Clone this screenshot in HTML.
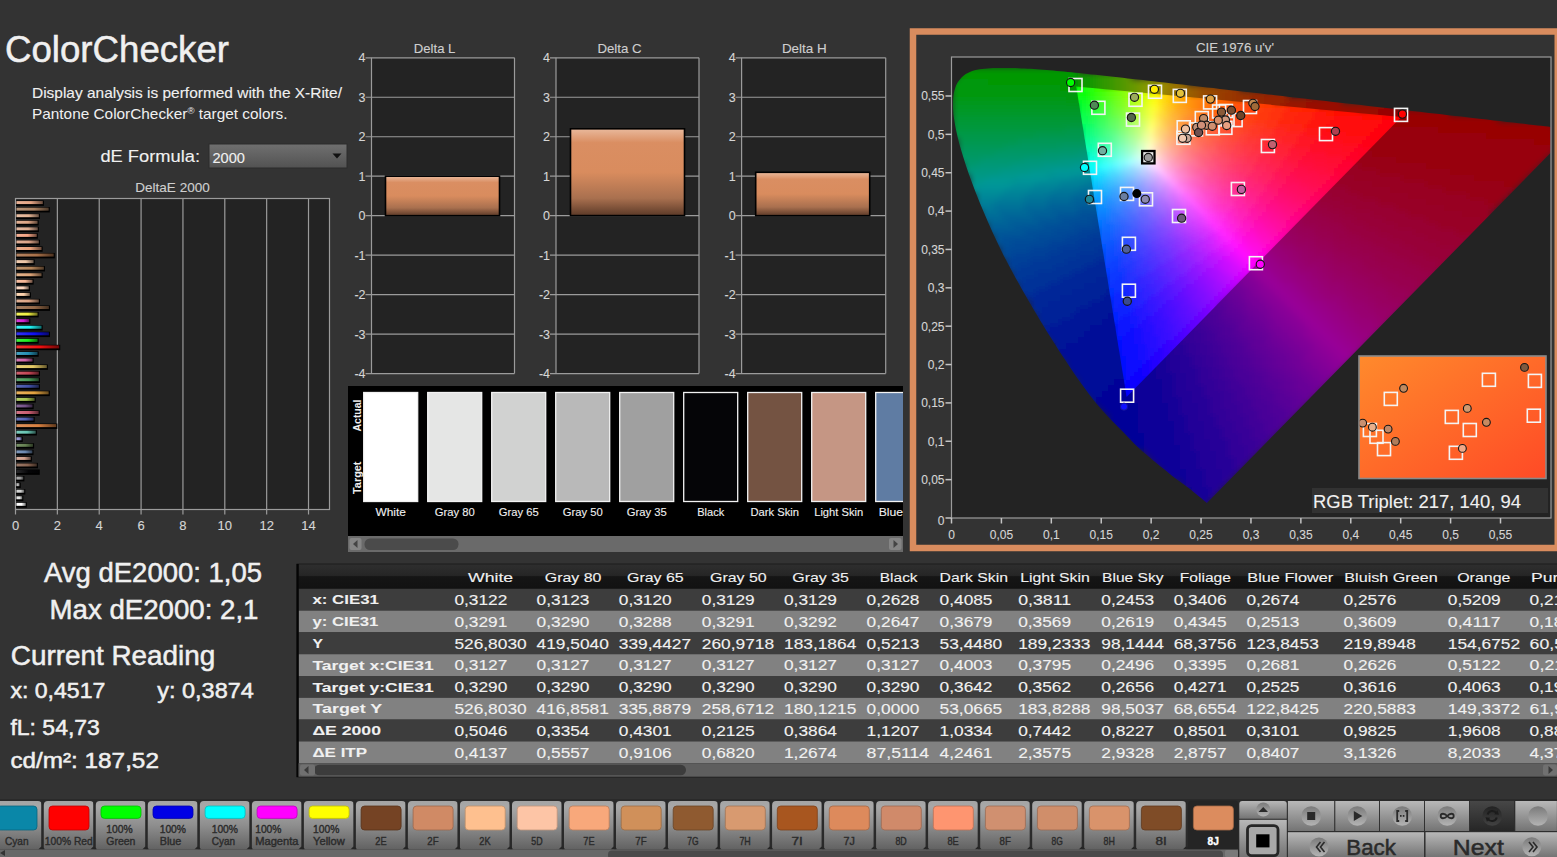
<!DOCTYPE html><html><head><meta charset="utf-8"><title>ColorChecker</title><style>html,body{margin:0;padding:0;background:#333333;overflow:hidden;width:1557px;height:857px}svg{display:block;font-family:"Liberation Sans",sans-serif}</style></head><body><svg width="1557" height="857" viewBox="0 0 1557 857" font-family='"Liberation Sans", sans-serif'><defs><linearGradient id="gDrop" x1="0" y1="0" x2="0" y2="1"><stop offset="0" stop-color="#707070"/><stop offset="1" stop-color="#525252"/></linearGradient><linearGradient id="gb0" x1="0" y1="0" x2="1" y2="0"><stop offset="0" stop-color="#ffffff"/><stop offset=".55" stop-color="#ffffff"/><stop offset="1" stop-color="#737373"/></linearGradient><linearGradient id="gb1" x1="0" y1="0" x2="1" y2="0"><stop offset="0" stop-color="#e7e8e7"/><stop offset=".55" stop-color="#e3e4e3"/><stop offset="1" stop-color="#666766"/></linearGradient><linearGradient id="gb2" x1="0" y1="0" x2="1" y2="0"><stop offset="0" stop-color="#d6d7d6"/><stop offset=".55" stop-color="#cfd0cf"/><stop offset="1" stop-color="#5d5e5d"/></linearGradient><linearGradient id="gb3" x1="0" y1="0" x2="1" y2="0"><stop offset="0" stop-color="#c1c1c1"/><stop offset=".55" stop-color="#b6b6b6"/><stop offset="1" stop-color="#525252"/></linearGradient><linearGradient id="gb4" x1="0" y1="0" x2="1" y2="0"><stop offset="0" stop-color="#adadad"/><stop offset=".55" stop-color="#9e9e9e"/><stop offset="1" stop-color="#474747"/></linearGradient><linearGradient id="gb5" x1="0" y1="0" x2="1" y2="0"><stop offset="0" stop-color="#2a2a2c"/><stop offset=".55" stop-color="#050507"/><stop offset="1" stop-color="#020203"/></linearGradient><linearGradient id="gb6" x1="0" y1="0" x2="1" y2="0"><stop offset="0" stop-color="#9c7b6a"/><stop offset=".55" stop-color="#8a6450"/><stop offset="1" stop-color="#3e2d24"/></linearGradient><linearGradient id="gb7" x1="0" y1="0" x2="1" y2="0"><stop offset="0" stop-color="#d7ae9d"/><stop offset=".55" stop-color="#d0a08c"/><stop offset="1" stop-color="#5e483f"/></linearGradient><linearGradient id="gb8" x1="0" y1="0" x2="1" y2="0"><stop offset="0" stop-color="#809abc"/><stop offset=".55" stop-color="#6a88b0"/><stop offset="1" stop-color="#303d4f"/></linearGradient><linearGradient id="gb9" x1="0" y1="0" x2="1" y2="0"><stop offset="0" stop-color="#7b936a"/><stop offset=".55" stop-color="#648050"/><stop offset="1" stop-color="#2d3a24"/></linearGradient><linearGradient id="gb10" x1="0" y1="0" x2="1" y2="0"><stop offset="0" stop-color="#a1a1d7"/><stop offset=".55" stop-color="#9090d0"/><stop offset="1" stop-color="#41415e"/></linearGradient><linearGradient id="gb11" x1="0" y1="0" x2="1" y2="0"><stop offset="0" stop-color="#7dcdbe"/><stop offset=".55" stop-color="#66c4b2"/><stop offset="1" stop-color="#2e5850"/></linearGradient><linearGradient id="gb12" x1="0" y1="0" x2="1" y2="0"><stop offset="0" stop-color="#de935d"/><stop offset=".55" stop-color="#d88040"/><stop offset="1" stop-color="#613a1d"/></linearGradient><linearGradient id="gb13" x1="0" y1="0" x2="1" y2="0"><stop offset="0" stop-color="#6a78bf"/><stop offset=".55" stop-color="#5060b4"/><stop offset="1" stop-color="#242b51"/></linearGradient><linearGradient id="gb14" x1="0" y1="0" x2="1" y2="0"><stop offset="0" stop-color="#d07485"/><stop offset=".55" stop-color="#c85c70"/><stop offset="1" stop-color="#5a2932"/></linearGradient><linearGradient id="gb15" x1="0" y1="0" x2="1" y2="0"><stop offset="0" stop-color="#896a9a"/><stop offset=".55" stop-color="#745088"/><stop offset="1" stop-color="#34243d"/></linearGradient><linearGradient id="gb16" x1="0" y1="0" x2="1" y2="0"><stop offset="0" stop-color="#b2cd6a"/><stop offset=".55" stop-color="#a4c450"/><stop offset="1" stop-color="#4a5824"/></linearGradient><linearGradient id="gb17" x1="0" y1="0" x2="1" y2="0"><stop offset="0" stop-color="#e8b25d"/><stop offset=".55" stop-color="#e4a440"/><stop offset="1" stop-color="#674a1d"/></linearGradient><linearGradient id="gb18" x1="0" y1="0" x2="1" y2="0"><stop offset="0" stop-color="#5d6ab5"/><stop offset=".55" stop-color="#4050a8"/><stop offset="1" stop-color="#1d244c"/></linearGradient><linearGradient id="gb19" x1="0" y1="0" x2="1" y2="0"><stop offset="0" stop-color="#63a971"/><stop offset=".55" stop-color="#489a58"/><stop offset="1" stop-color="#204528"/></linearGradient><linearGradient id="gb20" x1="0" y1="0" x2="1" y2="0"><stop offset="0" stop-color="#cd606e"/><stop offset=".55" stop-color="#c44454"/><stop offset="1" stop-color="#581f26"/></linearGradient><linearGradient id="gb21" x1="0" y1="0" x2="1" y2="0"><stop offset="0" stop-color="#e8d07b"/><stop offset=".55" stop-color="#e4c864"/><stop offset="1" stop-color="#675a2d"/></linearGradient><linearGradient id="gb22" x1="0" y1="0" x2="1" y2="0"><stop offset="0" stop-color="#d77bb5"/><stop offset=".55" stop-color="#d064a8"/><stop offset="1" stop-color="#5e2d4c"/></linearGradient><linearGradient id="gb23" x1="0" y1="0" x2="1" y2="0"><stop offset="0" stop-color="#45a1bf"/><stop offset=".55" stop-color="#2490b4"/><stop offset="1" stop-color="#104151"/></linearGradient><linearGradient id="gb24" x1="0" y1="0" x2="1" y2="0"><stop offset="0" stop-color="#f23434"/><stop offset=".55" stop-color="#f01010"/><stop offset="1" stop-color="#6c0707"/></linearGradient><linearGradient id="gb25" x1="0" y1="0" x2="1" y2="0"><stop offset="0" stop-color="#41f241"/><stop offset=".55" stop-color="#20f020"/><stop offset="1" stop-color="#0e6c0e"/></linearGradient><linearGradient id="gb26" x1="0" y1="0" x2="1" y2="0"><stop offset="0" stop-color="#3434f2"/><stop offset=".55" stop-color="#1010f0"/><stop offset="1" stop-color="#07076c"/></linearGradient><linearGradient id="gb27" x1="0" y1="0" x2="1" y2="0"><stop offset="0" stop-color="#41f2f2"/><stop offset=".55" stop-color="#20f0f0"/><stop offset="1" stop-color="#0e6c6c"/></linearGradient><linearGradient id="gb28" x1="0" y1="0" x2="1" y2="0"><stop offset="0" stop-color="#d741d7"/><stop offset=".55" stop-color="#d020d0"/><stop offset="1" stop-color="#5e0e5e"/></linearGradient><linearGradient id="gb29" x1="0" y1="0" x2="1" y2="0"><stop offset="0" stop-color="#f2f25d"/><stop offset=".55" stop-color="#f0f040"/><stop offset="1" stop-color="#6c6c1d"/></linearGradient><linearGradient id="gb30" x1="0" y1="0" x2="1" y2="0"><stop offset="0" stop-color="#a68063"/><stop offset=".55" stop-color="#966a48"/><stop offset="1" stop-color="#443020"/></linearGradient><linearGradient id="gb31" x1="0" y1="0" x2="1" y2="0"><stop offset="0" stop-color="#e1b296"/><stop offset=".55" stop-color="#dca484"/><stop offset="1" stop-color="#634a3b"/></linearGradient><linearGradient id="gb32" x1="0" y1="0" x2="1" y2="0"><stop offset="0" stop-color="#fcd7b7"/><stop offset=".55" stop-color="#fcd0aa"/><stop offset="1" stop-color="#715e4c"/></linearGradient><linearGradient id="gb33" x1="0" y1="0" x2="1" y2="0"><stop offset="0" stop-color="#fcdac6"/><stop offset=".55" stop-color="#fcd4bc"/><stop offset="1" stop-color="#715f55"/></linearGradient><linearGradient id="gb34" x1="0" y1="0" x2="1" y2="0"><stop offset="0" stop-color="#f6bfa4"/><stop offset=".55" stop-color="#f4b494"/><stop offset="1" stop-color="#6e5143"/></linearGradient><linearGradient id="gb35" x1="0" y1="0" x2="1" y2="0"><stop offset="0" stop-color="#e1b28c"/><stop offset=".55" stop-color="#dca478"/><stop offset="1" stop-color="#634a36"/></linearGradient><linearGradient id="gb36" x1="0" y1="0" x2="1" y2="0"><stop offset="0" stop-color="#bf9671"/><stop offset=".55" stop-color="#b48458"/><stop offset="1" stop-color="#513b28"/></linearGradient><linearGradient id="gb37" x1="0" y1="0" x2="1" y2="0"><stop offset="0" stop-color="#efcdb2"/><stop offset=".55" stop-color="#ecc4a4"/><stop offset="1" stop-color="#6a584a"/></linearGradient><linearGradient id="gb38" x1="0" y1="0" x2="1" y2="0"><stop offset="0" stop-color="#b58563"/><stop offset=".55" stop-color="#a87048"/><stop offset="1" stop-color="#4c3220"/></linearGradient><linearGradient id="gb39" x1="0" y1="0" x2="1" y2="0"><stop offset="0" stop-color="#ebae8e"/><stop offset=".55" stop-color="#e8a07a"/><stop offset="1" stop-color="#684837"/></linearGradient><linearGradient id="gb40" x1="0" y1="0" x2="1" y2="0"><stop offset="0" stop-color="#e1b29a"/><stop offset=".55" stop-color="#dca488"/><stop offset="1" stop-color="#634a3d"/></linearGradient><linearGradient id="gb41" x1="0" y1="0" x2="1" y2="0"><stop offset="0" stop-color="#f6b296"/><stop offset=".55" stop-color="#f4a484"/><stop offset="1" stop-color="#6e4a3b"/></linearGradient><linearGradient id="gb42" x1="0" y1="0" x2="1" y2="0"><stop offset="0" stop-color="#e1b8a1"/><stop offset=".55" stop-color="#dcac90"/><stop offset="1" stop-color="#634d41"/></linearGradient><linearGradient id="gb43" x1="0" y1="0" x2="1" y2="0"><stop offset="0" stop-color="#e1b296"/><stop offset=".55" stop-color="#dca484"/><stop offset="1" stop-color="#634a3b"/></linearGradient><linearGradient id="gb44" x1="0" y1="0" x2="1" y2="0"><stop offset="0" stop-color="#e8bfa4"/><stop offset=".55" stop-color="#e4b494"/><stop offset="1" stop-color="#675143"/></linearGradient><linearGradient id="gb45" x1="0" y1="0" x2="1" y2="0"><stop offset="0" stop-color="#b59378"/><stop offset=".55" stop-color="#a88060"/><stop offset="1" stop-color="#4c3a2b"/></linearGradient><linearGradient id="gb46" x1="0" y1="0" x2="1" y2="0"><stop offset="0" stop-color="#e8b296"/><stop offset=".55" stop-color="#e4a484"/><stop offset="1" stop-color="#674a3b"/></linearGradient><linearGradient id="gDelta" x1="0" y1="0" x2="0" y2="1"><stop offset="0" stop-color="#e9b99c"/><stop offset=".16" stop-color="#da8e62"/><stop offset=".5" stop-color="#d98c5e"/><stop offset=".8" stop-color="#a9704f"/><stop offset="1" stop-color="#5c3a28"/></linearGradient><clipPath id="cpSw"><rect x="348" y="386" width="555" height="150"/></clipPath><linearGradient id="gInset" x1="0" y1="0" x2="1" y2="1"><stop offset="0" stop-color="#ff8a2c"/><stop offset="1" stop-color="#ff4a26"/></linearGradient><clipPath id="cpIn"><rect x="1359.8" y="356.8" width="185.4" height="121"/></clipPath><linearGradient id="gHead" x1="0" y1="0" x2="0" y2="1"><stop offset="0" stop-color="#2e2e2e"/><stop offset=".45" stop-color="#262626"/><stop offset=".5" stop-color="#151515"/><stop offset="1" stop-color="#121212"/></linearGradient><linearGradient id="gTile" x1="0" y1="0" x2="0" y2="1"><stop offset="0" stop-color="#a4a4a4"/><stop offset=".12" stop-color="#a8a8a8"/><stop offset=".5" stop-color="#8e8e8e"/><stop offset="1" stop-color="#626262"/></linearGradient><linearGradient id="gBtn" x1="0" y1="0" x2="0" y2="1"><stop offset="0" stop-color="#b8b8b8"/><stop offset="1" stop-color="#747474"/></linearGradient><linearGradient id="gBtnD" x1="0" y1="0" x2="0" y2="1"><stop offset="0" stop-color="#474747"/><stop offset="1" stop-color="#262626"/></linearGradient><linearGradient id="gKnobD" x1="0" y1="0" x2="0" y2="1"><stop offset="0" stop-color="#222"/><stop offset="1" stop-color="#424242"/></linearGradient><linearGradient id="gKnob" x1="0" y1="0" x2="0" y2="1"><stop offset="0" stop-color="#7a7a7a"/><stop offset="1" stop-color="#b4b4b4"/></linearGradient></defs><rect width="1557" height="857" fill="#333333"/><text x="5.0" y="62.0" font-size="37.5" fill="#f0f0f0" textLength="224.0" lengthAdjust="spacingAndGlyphs" stroke="#f0f0f0" stroke-width="0.50">ColorChecker</text><text x="32.0" y="98.0" font-size="14.5" fill="#f0f0f0" textLength="310.0" lengthAdjust="spacingAndGlyphs" stroke="#f0f0f0" stroke-width="0.12">Display analysis is performed with the X-Rite/</text><text x="32" y="118.7" font-size="14.5" fill="#f0f0f0" textLength="255.5" lengthAdjust="spacingAndGlyphs">Pantone ColorChecker<tspan font-size="9" dy="-5">®</tspan><tspan dy="5"> target colors.</tspan></text><text x="100.4" y="162.3" font-size="17.0" fill="#f0f0f0" textLength="99.6" lengthAdjust="spacingAndGlyphs" stroke="#f0f0f0" stroke-width="0.12">dE Formula:</text><rect x="209" y="144" width="138" height="24" fill="url(#gDrop)" stroke="#2c2c2c" stroke-width="1"/><text x="212.5" y="163.4" font-size="14.5" fill="#f0f0f0" textLength="32.5" lengthAdjust="spacingAndGlyphs" stroke="#f0f0f0" stroke-width="0.12">2000</text><path d="M332.5 153.5h9l-4.5 5z" fill="#111"/><text x="172.5" y="192.0" font-size="13.0" fill="#cfcfcf" text-anchor="middle" textLength="74.5" lengthAdjust="spacingAndGlyphs" stroke="#cfcfcf" stroke-width="0.12">DeltaE 2000</text><rect x="15.50" y="198.50" width="314.00" height="311.00" fill="#232323" /><line x1="57.36" y1="198.50" x2="57.36" y2="509.50" stroke="#9b9b9b" stroke-width="1.20" /><line x1="99.22" y1="198.50" x2="99.22" y2="509.50" stroke="#9b9b9b" stroke-width="1.20" /><line x1="141.08" y1="198.50" x2="141.08" y2="509.50" stroke="#9b9b9b" stroke-width="1.20" /><line x1="182.94" y1="198.50" x2="182.94" y2="509.50" stroke="#9b9b9b" stroke-width="1.20" /><line x1="224.80" y1="198.50" x2="224.80" y2="509.50" stroke="#9b9b9b" stroke-width="1.20" /><line x1="266.66" y1="198.50" x2="266.66" y2="509.50" stroke="#9b9b9b" stroke-width="1.20" /><line x1="308.52" y1="198.50" x2="308.52" y2="509.50" stroke="#9b9b9b" stroke-width="1.20" /><rect x="15.5" y="198.5" width="314.0" height="311.0" fill="none" stroke="#9b9b9b" stroke-width="1.2"/><line x1="15.50" y1="509.50" x2="15.50" y2="514.50" stroke="#9b9b9b" stroke-width="1.20" /><text x="15.5" y="530.0" font-size="13.0" fill="#d6d6d6" text-anchor="middle" stroke="#d6d6d6" stroke-width="0.12">0</text><line x1="57.36" y1="509.50" x2="57.36" y2="514.50" stroke="#9b9b9b" stroke-width="1.20" /><text x="57.4" y="530.0" font-size="13.0" fill="#d6d6d6" text-anchor="middle" stroke="#d6d6d6" stroke-width="0.12">2</text><line x1="99.22" y1="509.50" x2="99.22" y2="514.50" stroke="#9b9b9b" stroke-width="1.20" /><text x="99.2" y="530.0" font-size="13.0" fill="#d6d6d6" text-anchor="middle" stroke="#d6d6d6" stroke-width="0.12">4</text><line x1="141.08" y1="509.50" x2="141.08" y2="514.50" stroke="#9b9b9b" stroke-width="1.20" /><text x="141.1" y="530.0" font-size="13.0" fill="#d6d6d6" text-anchor="middle" stroke="#d6d6d6" stroke-width="0.12">6</text><line x1="182.94" y1="509.50" x2="182.94" y2="514.50" stroke="#9b9b9b" stroke-width="1.20" /><text x="182.9" y="530.0" font-size="13.0" fill="#d6d6d6" text-anchor="middle" stroke="#d6d6d6" stroke-width="0.12">8</text><line x1="224.80" y1="509.50" x2="224.80" y2="514.50" stroke="#9b9b9b" stroke-width="1.20" /><text x="224.8" y="530.0" font-size="13.0" fill="#d6d6d6" text-anchor="middle" stroke="#d6d6d6" stroke-width="0.12">10</text><line x1="266.66" y1="509.50" x2="266.66" y2="514.50" stroke="#9b9b9b" stroke-width="1.20" /><text x="266.7" y="530.0" font-size="13.0" fill="#d6d6d6" text-anchor="middle" stroke="#d6d6d6" stroke-width="0.12">12</text><line x1="308.52" y1="509.50" x2="308.52" y2="514.50" stroke="#9b9b9b" stroke-width="1.20" /><text x="308.5" y="530.0" font-size="13.0" fill="#d6d6d6" text-anchor="middle" stroke="#d6d6d6" stroke-width="0.12">14</text><rect x="16.10" y="502.24" width="10.76" height="5.40" fill="#000000" /><rect x="16.40" y="502.84" width="9.36" height="3.00" fill="url(#gb0)" /><rect x="16.10" y="495.68" width="7.22" height="5.40" fill="#000000" /><rect x="16.40" y="496.28" width="5.82" height="3.00" fill="url(#gb1)" /><rect x="16.10" y="489.12" width="9.20" height="5.40" fill="#000000" /><rect x="16.40" y="489.72" width="7.80" height="3.00" fill="url(#gb2)" /><rect x="16.10" y="482.56" width="4.65" height="5.40" fill="#000000" /><rect x="16.40" y="483.16" width="3.25" height="3.00" fill="url(#gb3)" /><rect x="16.10" y="476.00" width="8.29" height="5.40" fill="#000000" /><rect x="16.40" y="476.60" width="6.89" height="3.00" fill="url(#gb4)" /><rect x="16.10" y="469.44" width="23.66" height="5.40" fill="#000000" /><rect x="16.40" y="470.04" width="22.26" height="3.00" fill="url(#gb5)" /><rect x="16.10" y="462.88" width="21.83" height="5.40" fill="#000000" /><rect x="16.40" y="463.48" width="20.43" height="3.00" fill="url(#gb6)" /><rect x="16.10" y="456.32" width="15.78" height="5.40" fill="#000000" /><rect x="16.40" y="456.92" width="14.38" height="3.00" fill="url(#gb7)" /><rect x="16.10" y="449.76" width="17.42" height="5.40" fill="#000000" /><rect x="16.40" y="450.36" width="16.02" height="3.00" fill="url(#gb8)" /><rect x="16.10" y="443.20" width="17.99" height="5.40" fill="#000000" /><rect x="16.40" y="443.80" width="16.59" height="3.00" fill="url(#gb9)" /><rect x="16.10" y="436.64" width="6.69" height="5.40" fill="#000000" /><rect x="16.40" y="437.24" width="5.29" height="3.00" fill="url(#gb10)" /><rect x="16.10" y="430.08" width="20.76" height="5.40" fill="#000000" /><rect x="16.40" y="430.68" width="19.36" height="3.00" fill="url(#gb11)" /><rect x="16.10" y="423.52" width="41.24" height="5.40" fill="#000000" /><rect x="16.40" y="424.12" width="39.84" height="3.00" fill="url(#gb12)" /><rect x="16.10" y="416.96" width="18.62" height="5.40" fill="#000000" /><rect x="16.40" y="417.56" width="17.22" height="3.00" fill="url(#gb13)" /><rect x="16.10" y="410.40" width="23.64" height="5.40" fill="#000000" /><rect x="16.40" y="411.00" width="22.24" height="3.00" fill="url(#gb14)" /><rect x="16.10" y="403.84" width="17.57" height="5.40" fill="#000000" /><rect x="16.40" y="404.44" width="16.17" height="3.00" fill="url(#gb15)" /><rect x="16.10" y="397.28" width="19.66" height="5.40" fill="#000000" /><rect x="16.40" y="397.88" width="18.26" height="3.00" fill="url(#gb16)" /><rect x="16.10" y="390.72" width="33.69" height="5.40" fill="#000000" /><rect x="16.40" y="391.32" width="32.29" height="3.00" fill="url(#gb17)" /><rect x="16.10" y="384.16" width="23.85" height="5.40" fill="#000000" /><rect x="16.40" y="384.76" width="22.45" height="3.00" fill="url(#gb18)" /><rect x="16.10" y="377.60" width="23.85" height="5.40" fill="#000000" /><rect x="16.40" y="378.20" width="22.45" height="3.00" fill="url(#gb19)" /><rect x="16.10" y="371.04" width="23.85" height="5.40" fill="#000000" /><rect x="16.40" y="371.64" width="22.45" height="3.00" fill="url(#gb20)" /><rect x="16.10" y="364.48" width="31.80" height="5.40" fill="#000000" /><rect x="16.40" y="365.08" width="30.40" height="3.00" fill="url(#gb21)" /><rect x="16.10" y="357.92" width="17.57" height="5.40" fill="#000000" /><rect x="16.40" y="358.52" width="16.17" height="3.00" fill="url(#gb22)" /><rect x="16.10" y="351.36" width="22.60" height="5.40" fill="#000000" /><rect x="16.40" y="351.96" width="21.20" height="3.00" fill="url(#gb23)" /><rect x="16.10" y="344.80" width="44.15" height="5.40" fill="#000000" /><rect x="16.40" y="345.40" width="42.75" height="3.00" fill="url(#gb24)" /><rect x="16.10" y="338.24" width="22.60" height="5.40" fill="#000000" /><rect x="16.40" y="338.84" width="21.20" height="3.00" fill="url(#gb25)" /><rect x="16.10" y="331.68" width="33.90" height="5.40" fill="#000000" /><rect x="16.40" y="332.28" width="32.50" height="3.00" fill="url(#gb26)" /><rect x="16.10" y="325.12" width="26.57" height="5.40" fill="#000000" /><rect x="16.40" y="325.72" width="25.17" height="3.00" fill="url(#gb27)" /><rect x="16.10" y="318.56" width="14.22" height="5.40" fill="#000000" /><rect x="16.40" y="319.16" width="12.82" height="3.00" fill="url(#gb28)" /><rect x="16.10" y="312.00" width="22.60" height="5.40" fill="#000000" /><rect x="16.40" y="312.60" width="21.20" height="3.00" fill="url(#gb29)" /><rect x="16.10" y="305.44" width="33.90" height="5.40" fill="#000000" /><rect x="16.40" y="306.04" width="32.50" height="3.00" fill="url(#gb30)" /><rect x="16.10" y="298.88" width="23.85" height="5.40" fill="#000000" /><rect x="16.40" y="299.48" width="22.45" height="3.00" fill="url(#gb31)" /><rect x="16.10" y="292.32" width="14.85" height="5.40" fill="#000000" /><rect x="16.40" y="292.92" width="13.45" height="3.00" fill="url(#gb32)" /><rect x="16.10" y="285.76" width="13.80" height="5.40" fill="#000000" /><rect x="16.40" y="286.36" width="12.40" height="3.00" fill="url(#gb33)" /><rect x="16.10" y="279.20" width="17.57" height="5.40" fill="#000000" /><rect x="16.40" y="279.80" width="16.17" height="3.00" fill="url(#gb34)" /><rect x="16.10" y="272.64" width="26.57" height="5.40" fill="#000000" /><rect x="16.40" y="273.24" width="25.17" height="3.00" fill="url(#gb35)" /><rect x="16.10" y="266.08" width="28.87" height="5.40" fill="#000000" /><rect x="16.40" y="266.68" width="27.47" height="3.00" fill="url(#gb36)" /><rect x="16.10" y="259.52" width="18.62" height="5.40" fill="#000000" /><rect x="16.40" y="260.12" width="17.22" height="3.00" fill="url(#gb37)" /><rect x="16.10" y="252.96" width="38.71" height="5.40" fill="#000000" /><rect x="16.40" y="253.56" width="37.31" height="3.00" fill="url(#gb38)" /><rect x="16.10" y="246.40" width="26.57" height="5.40" fill="#000000" /><rect x="16.40" y="247.00" width="25.17" height="3.00" fill="url(#gb39)" /><rect x="16.10" y="239.84" width="23.85" height="5.40" fill="#000000" /><rect x="16.40" y="240.44" width="22.45" height="3.00" fill="url(#gb40)" /><rect x="16.10" y="233.28" width="21.76" height="5.40" fill="#000000" /><rect x="16.40" y="233.88" width="20.36" height="3.00" fill="url(#gb41)" /><rect x="16.10" y="226.72" width="22.80" height="5.40" fill="#000000" /><rect x="16.40" y="227.32" width="21.40" height="3.00" fill="url(#gb42)" /><rect x="16.10" y="220.16" width="22.60" height="5.40" fill="#000000" /><rect x="16.40" y="220.76" width="21.20" height="3.00" fill="url(#gb43)" /><rect x="16.10" y="213.60" width="23.85" height="5.40" fill="#000000" /><rect x="16.40" y="214.20" width="22.45" height="3.00" fill="url(#gb44)" /><rect x="16.10" y="207.04" width="33.69" height="5.40" fill="#000000" /><rect x="16.40" y="207.64" width="32.29" height="3.00" fill="url(#gb45)" /><rect x="16.10" y="200.48" width="27.83" height="5.40" fill="#000000" /><rect x="16.40" y="201.08" width="26.43" height="3.00" fill="url(#gb46)" /><text x="434.6" y="53.0" font-size="13.0" fill="#cfcfcf" text-anchor="middle" textLength="41.6" lengthAdjust="spacingAndGlyphs" stroke="#cfcfcf" stroke-width="0.12">Delta L</text><rect x="371.50" y="57.80" width="143.00" height="315.76" fill="#232323" /><line x1="365.50" y1="57.80" x2="514.50" y2="57.80" stroke="#9b9b9b" stroke-width="1.20" /><text x="365.5" y="62.3" font-size="12.5" fill="#d6d6d6" text-anchor="end" stroke="#d6d6d6" stroke-width="0.10">4</text><line x1="365.50" y1="97.27" x2="514.50" y2="97.27" stroke="#9b9b9b" stroke-width="1.20" /><text x="365.5" y="101.8" font-size="12.5" fill="#d6d6d6" text-anchor="end" stroke="#d6d6d6" stroke-width="0.10">3</text><line x1="365.50" y1="136.74" x2="514.50" y2="136.74" stroke="#9b9b9b" stroke-width="1.20" /><text x="365.5" y="141.2" font-size="12.5" fill="#d6d6d6" text-anchor="end" stroke="#d6d6d6" stroke-width="0.10">2</text><line x1="365.50" y1="176.21" x2="514.50" y2="176.21" stroke="#9b9b9b" stroke-width="1.20" /><text x="365.5" y="180.7" font-size="12.5" fill="#d6d6d6" text-anchor="end" stroke="#d6d6d6" stroke-width="0.10">1</text><line x1="365.50" y1="215.68" x2="514.50" y2="215.68" stroke="#9b9b9b" stroke-width="1.20" /><text x="365.5" y="220.2" font-size="12.5" fill="#d6d6d6" text-anchor="end" stroke="#d6d6d6" stroke-width="0.10">0</text><line x1="365.50" y1="255.15" x2="514.50" y2="255.15" stroke="#9b9b9b" stroke-width="1.20" /><text x="365.5" y="259.6" font-size="12.5" fill="#d6d6d6" text-anchor="end" stroke="#d6d6d6" stroke-width="0.10">-1</text><line x1="365.50" y1="294.62" x2="514.50" y2="294.62" stroke="#9b9b9b" stroke-width="1.20" /><text x="365.5" y="299.1" font-size="12.5" fill="#d6d6d6" text-anchor="end" stroke="#d6d6d6" stroke-width="0.10">-2</text><line x1="365.50" y1="334.09" x2="514.50" y2="334.09" stroke="#9b9b9b" stroke-width="1.20" /><text x="365.5" y="338.6" font-size="12.5" fill="#d6d6d6" text-anchor="end" stroke="#d6d6d6" stroke-width="0.10">-3</text><line x1="365.50" y1="373.56" x2="514.50" y2="373.56" stroke="#9b9b9b" stroke-width="1.20" /><text x="365.5" y="378.1" font-size="12.5" fill="#d6d6d6" text-anchor="end" stroke="#d6d6d6" stroke-width="0.10">-4</text><line x1="371.50" y1="57.80" x2="371.50" y2="373.56" stroke="#9b9b9b" stroke-width="1.20" /><line x1="514.50" y1="57.80" x2="514.50" y2="373.56" stroke="#9b9b9b" stroke-width="1.20" /><rect x="385.5" y="176.2" width="114.0" height="39.5" fill="url(#gDelta)" stroke="#000" stroke-width="1.6"/><text x="619.5" y="53.0" font-size="13.0" fill="#cfcfcf" text-anchor="middle" textLength="44.2" lengthAdjust="spacingAndGlyphs" stroke="#cfcfcf" stroke-width="0.12">Delta C</text><rect x="556.00" y="57.80" width="143.00" height="315.76" fill="#232323" /><line x1="550.00" y1="57.80" x2="699.00" y2="57.80" stroke="#9b9b9b" stroke-width="1.20" /><text x="550.0" y="62.3" font-size="12.5" fill="#d6d6d6" text-anchor="end" stroke="#d6d6d6" stroke-width="0.10">4</text><line x1="550.00" y1="97.27" x2="699.00" y2="97.27" stroke="#9b9b9b" stroke-width="1.20" /><text x="550.0" y="101.8" font-size="12.5" fill="#d6d6d6" text-anchor="end" stroke="#d6d6d6" stroke-width="0.10">3</text><line x1="550.00" y1="136.74" x2="699.00" y2="136.74" stroke="#9b9b9b" stroke-width="1.20" /><text x="550.0" y="141.2" font-size="12.5" fill="#d6d6d6" text-anchor="end" stroke="#d6d6d6" stroke-width="0.10">2</text><line x1="550.00" y1="176.21" x2="699.00" y2="176.21" stroke="#9b9b9b" stroke-width="1.20" /><text x="550.0" y="180.7" font-size="12.5" fill="#d6d6d6" text-anchor="end" stroke="#d6d6d6" stroke-width="0.10">1</text><line x1="550.00" y1="215.68" x2="699.00" y2="215.68" stroke="#9b9b9b" stroke-width="1.20" /><text x="550.0" y="220.2" font-size="12.5" fill="#d6d6d6" text-anchor="end" stroke="#d6d6d6" stroke-width="0.10">0</text><line x1="550.00" y1="255.15" x2="699.00" y2="255.15" stroke="#9b9b9b" stroke-width="1.20" /><text x="550.0" y="259.6" font-size="12.5" fill="#d6d6d6" text-anchor="end" stroke="#d6d6d6" stroke-width="0.10">-1</text><line x1="550.00" y1="294.62" x2="699.00" y2="294.62" stroke="#9b9b9b" stroke-width="1.20" /><text x="550.0" y="299.1" font-size="12.5" fill="#d6d6d6" text-anchor="end" stroke="#d6d6d6" stroke-width="0.10">-2</text><line x1="550.00" y1="334.09" x2="699.00" y2="334.09" stroke="#9b9b9b" stroke-width="1.20" /><text x="550.0" y="338.6" font-size="12.5" fill="#d6d6d6" text-anchor="end" stroke="#d6d6d6" stroke-width="0.10">-3</text><line x1="550.00" y1="373.56" x2="699.00" y2="373.56" stroke="#9b9b9b" stroke-width="1.20" /><text x="550.0" y="378.1" font-size="12.5" fill="#d6d6d6" text-anchor="end" stroke="#d6d6d6" stroke-width="0.10">-4</text><line x1="556.00" y1="57.80" x2="556.00" y2="373.56" stroke="#9b9b9b" stroke-width="1.20" /><line x1="699.00" y1="57.80" x2="699.00" y2="373.56" stroke="#9b9b9b" stroke-width="1.20" /><rect x="570.5" y="128.8" width="114.0" height="86.8" fill="url(#gDelta)" stroke="#000" stroke-width="1.6"/><text x="804.3" y="53.0" font-size="13.0" fill="#cfcfcf" text-anchor="middle" textLength="44.8" lengthAdjust="spacingAndGlyphs" stroke="#cfcfcf" stroke-width="0.12">Delta H</text><rect x="741.60" y="57.80" width="144.10" height="315.76" fill="#232323" /><line x1="735.60" y1="57.80" x2="885.70" y2="57.80" stroke="#9b9b9b" stroke-width="1.20" /><text x="735.6" y="62.3" font-size="12.5" fill="#d6d6d6" text-anchor="end" stroke="#d6d6d6" stroke-width="0.10">4</text><line x1="735.60" y1="97.27" x2="885.70" y2="97.27" stroke="#9b9b9b" stroke-width="1.20" /><text x="735.6" y="101.8" font-size="12.5" fill="#d6d6d6" text-anchor="end" stroke="#d6d6d6" stroke-width="0.10">3</text><line x1="735.60" y1="136.74" x2="885.70" y2="136.74" stroke="#9b9b9b" stroke-width="1.20" /><text x="735.6" y="141.2" font-size="12.5" fill="#d6d6d6" text-anchor="end" stroke="#d6d6d6" stroke-width="0.10">2</text><line x1="735.60" y1="176.21" x2="885.70" y2="176.21" stroke="#9b9b9b" stroke-width="1.20" /><text x="735.6" y="180.7" font-size="12.5" fill="#d6d6d6" text-anchor="end" stroke="#d6d6d6" stroke-width="0.10">1</text><line x1="735.60" y1="215.68" x2="885.70" y2="215.68" stroke="#9b9b9b" stroke-width="1.20" /><text x="735.6" y="220.2" font-size="12.5" fill="#d6d6d6" text-anchor="end" stroke="#d6d6d6" stroke-width="0.10">0</text><line x1="735.60" y1="255.15" x2="885.70" y2="255.15" stroke="#9b9b9b" stroke-width="1.20" /><text x="735.6" y="259.6" font-size="12.5" fill="#d6d6d6" text-anchor="end" stroke="#d6d6d6" stroke-width="0.10">-1</text><line x1="735.60" y1="294.62" x2="885.70" y2="294.62" stroke="#9b9b9b" stroke-width="1.20" /><text x="735.6" y="299.1" font-size="12.5" fill="#d6d6d6" text-anchor="end" stroke="#d6d6d6" stroke-width="0.10">-2</text><line x1="735.60" y1="334.09" x2="885.70" y2="334.09" stroke="#9b9b9b" stroke-width="1.20" /><text x="735.6" y="338.6" font-size="12.5" fill="#d6d6d6" text-anchor="end" stroke="#d6d6d6" stroke-width="0.10">-3</text><line x1="735.60" y1="373.56" x2="885.70" y2="373.56" stroke="#9b9b9b" stroke-width="1.20" /><text x="735.6" y="378.1" font-size="12.5" fill="#d6d6d6" text-anchor="end" stroke="#d6d6d6" stroke-width="0.10">-4</text><line x1="741.60" y1="57.80" x2="741.60" y2="373.56" stroke="#9b9b9b" stroke-width="1.20" /><line x1="885.70" y1="57.80" x2="885.70" y2="373.56" stroke="#9b9b9b" stroke-width="1.20" /><rect x="755.7" y="172.3" width="114.0" height="43.4" fill="url(#gDelta)" stroke="#000" stroke-width="1.6"/><rect x="348.00" y="386.00" width="555.00" height="150.00" fill="#000000" /><g clip-path="url(#cpSw)"><rect x="363.7" y="392.5" width="54" height="109" fill="#ffffff" stroke="#f2f2f2" stroke-width="1.3"/><text x="390.7" y="515.6" font-size="11.5" fill="#f0f0f0" text-anchor="middle" textLength="30.5" lengthAdjust="spacingAndGlyphs" stroke="#f0f0f0" stroke-width="0.10">White</text><rect x="427.7" y="392.5" width="54" height="109" fill="#e5e6e5" stroke="#f2f2f2" stroke-width="1.3"/><text x="454.7" y="515.6" font-size="11.5" fill="#f0f0f0" text-anchor="middle" textLength="40.0" lengthAdjust="spacingAndGlyphs" stroke="#f0f0f0" stroke-width="0.10">Gray 80</text><rect x="491.7" y="392.5" width="54" height="109" fill="#d1d2d1" stroke="#f2f2f2" stroke-width="1.3"/><text x="518.7" y="515.6" font-size="11.5" fill="#f0f0f0" text-anchor="middle" textLength="40.0" lengthAdjust="spacingAndGlyphs" stroke="#f0f0f0" stroke-width="0.10">Gray 65</text><rect x="555.7" y="392.5" width="54" height="109" fill="#b9b9b9" stroke="#f2f2f2" stroke-width="1.3"/><text x="582.7" y="515.6" font-size="11.5" fill="#f0f0f0" text-anchor="middle" textLength="40.0" lengthAdjust="spacingAndGlyphs" stroke="#f0f0f0" stroke-width="0.10">Gray 50</text><rect x="619.7" y="392.5" width="54" height="109" fill="#a0a0a0" stroke="#f2f2f2" stroke-width="1.3"/><text x="646.7" y="515.6" font-size="11.5" fill="#f0f0f0" text-anchor="middle" textLength="40.0" lengthAdjust="spacingAndGlyphs" stroke="#f0f0f0" stroke-width="0.10">Gray 35</text><rect x="683.7" y="392.5" width="54" height="109" fill="#050507" stroke="#f2f2f2" stroke-width="1.3"/><text x="710.7" y="515.6" font-size="11.5" fill="#f0f0f0" text-anchor="middle" textLength="27.0" lengthAdjust="spacingAndGlyphs" stroke="#f0f0f0" stroke-width="0.10">Black</text><rect x="747.7" y="392.5" width="54" height="109" fill="#745342" stroke="#f2f2f2" stroke-width="1.3"/><text x="774.7" y="515.6" font-size="11.5" fill="#f0f0f0" text-anchor="middle" textLength="48.5" lengthAdjust="spacingAndGlyphs" stroke="#f0f0f0" stroke-width="0.10">Dark Skin</text><rect x="811.7" y="392.5" width="54" height="109" fill="#c59684" stroke="#f2f2f2" stroke-width="1.3"/><text x="838.7" y="515.6" font-size="11.5" fill="#f0f0f0" text-anchor="middle" textLength="49.0" lengthAdjust="spacingAndGlyphs" stroke="#f0f0f0" stroke-width="0.10">Light Skin</text><rect x="875.7" y="392.5" width="54" height="109" fill="#5f7ca3" stroke="#f2f2f2" stroke-width="1.3"/><text x="902.7" y="515.6" font-size="11.5" fill="#f0f0f0" text-anchor="middle" textLength="48.0" lengthAdjust="spacingAndGlyphs" stroke="#f0f0f0" stroke-width="0.10">Blue Sky</text></g><text x="0.0" y="0.0" font-size="11.5" fill="#f0f0f0" font-weight="bold" textLength="32.0" lengthAdjust="spacingAndGlyphs" transform="translate(360.5 431.5) rotate(-90)">Actual</text><text x="0.0" y="0.0" font-size="11.5" fill="#f0f0f0" font-weight="bold" textLength="32.5" lengthAdjust="spacingAndGlyphs" transform="translate(360.5 494) rotate(-90)">Target</text><rect x="348.00" y="536.00" width="555.00" height="16.00" fill="#6a6a6a" /><rect x="364.5" y="538.5" width="94" height="11.5" rx="5.5" fill="#4b4b4b"/><rect x="349.5" y="538" width="12" height="12" rx="2" fill="#858585"/><path d="M353 544l4.5-4v8z" fill="#444"/><rect x="889" y="538" width="12.5" height="12" rx="2" fill="#858585"/><path d="M898 544l-4.5-4v8z" fill="#444"/><rect x="913" y="31.5" width="644.75" height="516.5" fill="#333333" stroke="#d98c5e" stroke-width="6.5"/><text x="1235.0" y="51.5" font-size="13.0" fill="#cfcfcf" text-anchor="middle" textLength="78.0" lengthAdjust="spacingAndGlyphs" stroke="#cfcfcf" stroke-width="0.12">CIE 1976 u'v'</text><rect x="951.50" y="57.00" width="599.50" height="461.00" fill="#232323" /><defs><clipPath id="cpL"><path d="M1206.7 503.3 L1206.7 503.2 L1206.7 503.2 L1206.7 503.1 L1206.6 502.9 L1206.2 502.5 L1205.7 502.1 L1205.0 501.5 L1204.1 500.7 L1203.0 499.8 L1201.6 498.6 L1200.0 497.3 L1198.1 495.7 L1196.0 493.9 L1193.5 491.9 L1190.7 489.6 L1187.6 487.3 L1184.2 484.8 L1180.4 482.0 L1176.2 478.9 L1171.6 475.4 L1166.3 471.1 L1160.2 466.2 L1153.8 461.0 L1147.7 455.8 L1142.3 451.2 L1138.0 447.2 L1134.3 443.7 L1131.0 440.3 L1127.4 436.6 L1123.1 432.1 L1118.1 427.0 L1112.7 421.5 L1106.9 415.5 L1101.1 409.1 L1095.3 402.2 L1089.6 394.9 L1083.8 387.1 L1077.9 378.9 L1072.0 370.3 L1066.0 361.2 L1059.7 351.8 L1053.4 341.8 L1046.9 331.4 L1040.5 320.9 L1034.1 310.3 L1027.8 299.5 L1021.5 288.4 L1015.2 277.2 L1009.2 266.1 L1003.5 255.2 L998.2 244.3 L993.1 233.4 L988.3 222.7 L983.8 212.3 L979.6 202.2 L975.7 192.6 L972.2 183.2 L968.9 174.3 L966.0 165.7 L963.4 157.6 L961.1 150.1 L959.1 143.1 L957.5 136.5 L956.1 130.3 L955.0 124.5 L954.1 119.1 L953.4 114.2 L953.1 109.6 L952.9 105.4 L952.9 101.4 L953.2 97.7 L953.6 94.3 L954.3 91.1 L955.1 88.2 L956.1 85.5 L957.3 83.1 L958.7 80.9 L960.3 78.9 L962.0 77.1 L963.8 75.5 L965.7 74.1 L967.8 72.9 L969.9 71.9 L972.2 71.1 L974.6 70.3 L977.0 69.7 L979.5 69.3 L982.1 68.9 L984.8 68.7 L987.4 68.4 L990.2 68.2 L993.0 68.1 L995.8 68.0 L998.6 68.0 L1001.5 68.0 L1004.3 67.9 L1007.1 68.0 L1010.0 68.0 L1012.8 68.1 L1015.7 68.1 L1018.6 68.2 L1021.6 68.4 L1024.5 68.5 L1027.5 68.7 L1030.6 68.8 L1033.7 69.0 L1036.8 69.2 L1040.0 69.5 L1043.3 69.7 L1046.6 70.0 L1049.9 70.3 L1053.4 70.6 L1056.8 70.9 L1060.4 71.2 L1064.0 71.6 L1067.7 71.9 L1071.4 72.3 L1075.2 72.7 L1079.1 73.1 L1083.1 73.5 L1087.2 73.9 L1091.3 74.4 L1095.6 74.8 L1099.9 75.3 L1104.3 75.8 L1108.8 76.3 L1113.4 76.8 L1118.1 77.3 L1122.8 77.8 L1127.7 78.4 L1132.7 78.9 L1137.8 79.5 L1143.0 80.1 L1148.3 80.7 L1153.7 81.3 L1159.2 81.9 L1164.8 82.6 L1170.5 83.2 L1176.3 83.9 L1182.2 84.6 L1188.2 85.3 L1194.3 86.0 L1200.6 86.7 L1206.9 87.4 L1213.3 88.1 L1219.8 88.9 L1226.5 89.7 L1233.2 90.4 L1240.0 91.2 L1246.9 92.0 L1253.8 92.8 L1260.9 93.6 L1268.0 94.4 L1275.2 95.2 L1282.4 96.1 L1289.6 96.9 L1296.9 97.7 L1304.3 98.6 L1311.6 99.4 L1318.8 100.3 L1326.0 101.1 L1333.1 101.9 L1340.2 102.7 L1347.2 103.5 L1354.2 104.3 L1361.2 105.1 L1368.2 105.9 L1375.1 106.7 L1381.9 107.5 L1388.6 108.3 L1394.7 109.0 L1400.3 109.6 L1406.0 110.3 L1412.3 111.0 L1419.7 111.8 L1428.9 112.9 L1439.4 114.1 L1450.4 115.4 L1461.2 116.6 L1470.7 117.7 L1479.1 118.7 L1486.7 119.5 L1493.8 120.4 L1500.5 121.1 L1506.9 121.9 L1513.0 122.6 L1518.6 123.2 L1523.9 123.8 L1528.8 124.4 L1533.4 124.9 L1537.5 125.4 L1541.3 125.8 L1544.8 126.2 L1547.9 126.6 L1550.8 126.9 L1553.3 127.2 L1555.3 127.4 L1557.2 127.6 L1559.1 127.8 L1561.2 128.1 L1563.7 128.4 L1566.6 128.7 L1569.4 129.0 L1571.9 129.3 L1573.6 129.5Z"/></clipPath><clipPath id="cpT"><path d="M1401.3 116.9 L1076.2 86.6 L1126.6 396.9Z"/></clipPath><clipPath id="cpP"><rect x="952" y="57.5" width="598.5" height="460"/></clipPath><filter id="fb" x="-5%" y="-5%" width="110%" height="110%"><feGaussianBlur stdDeviation="3"/></filter><filter id="fb2" x="-5%" y="-5%" width="110%" height="110%"><feGaussianBlur stdDeviation="2"/></filter></defs><g clip-path="url(#cpP)"><g clip-path="url(#cpL)"><g filter="url(#fb)"><g stroke-width="6"><path stroke="#009800" d="M964 70h114M958 76h120M988 82h90M1060 88h18"/><path stroke="#089800" d="M1078 76h6M1078 82h6M1078 88h6"/><path stroke="#109800" d="M1084 76h6M1084 82h6M1084 88h6"/><path stroke="#209800" d="M1090 76h6"/><path stroke="#289800" d="M1096 76h6M1096 82h6M1096 88h6"/><path stroke="#309800" d="M1102 76h6M1102 82h6M1102 88h6"/><path stroke="#389800" d="M1108 76h6M1108 82h6M1108 88h6"/><path stroke="#489800" d="M1114 76h6M1114 82h6M1114 88h6"/><path stroke="#509800" d="M1120 76h6M1120 82h6M1120 88h6"/><path stroke="#609800" d="M1126 76h6M1126 82h6M1126 88h6"/><path stroke="#009808" d="M952 82h36M970 88h90M1060 94h18"/><path stroke="#189800" d="M1090 82h6M1090 88h6"/><path stroke="#689800" d="M1132 82h6M1132 88h6M1132 94h6"/><path stroke="#789800" d="M1138 82h6M1138 88h6M1138 94h6"/><path stroke="#809800" d="M1144 82h6"/><path stroke="#909800" d="M1150 82h6M1150 88h6M1150 94h6"/><path stroke="#989000" d="M1156 82h6M1156 88h6M1156 94h6"/><path stroke="#988800" d="M1162 82h6M1162 88h6"/><path stroke="#987800" d="M1168 82h6M1168 88h6M1168 94h6"/><path stroke="#987000" d="M1174 82h6M1174 88h6M1174 94h6"/><path stroke="#986800" d="M1180 82h6M1180 88h6M1180 94h6"/><path stroke="#009810" d="M952 88h18M952 94h108M1066 100h12"/><path stroke="#889800" d="M1144 88h6M1144 94h6"/><path stroke="#986000" d="M1186 88h6M1186 94h6"/><path stroke="#985800" d="M1192 88h6M1192 94h6M1186 100h12"/><path stroke="#985000" d="M1198 88h6M1198 94h6M1198 100h6"/><path stroke="#984800" d="M1204 88h12M1204 94h12M1204 100h6"/><path stroke="#984000" d="M1216 88h12M1216 94h6M1210 100h12"/><path stroke="#983800" d="M1228 88h12M1222 94h12M1222 100h12"/><path stroke="#089808" d="M1078 94h6"/><path stroke="#109808" d="M1084 94h6"/><path stroke="#189808" d="M1090 94h6"/><path stroke="#209808" d="M1096 94h6"/><path stroke="#309808" d="M1102 94h6"/><path stroke="#389808" d="M1108 94h6"/><path stroke="#489808" d="M1114 94h6"/><path stroke="#509808" d="M1120 94h6"/><path stroke="#609808" d="M1126 94h6"/><path stroke="#988000" d="M1162 94h6"/><path stroke="#983000" d="M1234 94h18M1234 100h12M1234 106h12"/><path stroke="#982800" d="M1252 94h18M1246 100h18M1246 106h18"/><path stroke="#982000" d="M1270 94h18M1264 100h24M1264 106h18"/><path stroke="#009818" d="M952 100h114"/><path stroke="#089810" d="M1078 100h6"/><path stroke="#109810" d="M1084 100h6"/><path stroke="#189810" d="M1090 100h6"/><path stroke="#209810" d="M1096 100h6"/><path stroke="#309810" d="M1102 100h6"/><path stroke="#389810" d="M1108 100h6"/><path stroke="#409810" d="M1114 100h6"/><path stroke="#509810" d="M1120 100h6"/><path stroke="#609810" d="M1126 100h6"/><path stroke="#689810" d="M1132 100h6"/><path stroke="#789810" d="M1138 100h6"/><path stroke="#889810" d="M1144 100h6"/><path stroke="#989808" d="M1150 100h6"/><path stroke="#989008" d="M1156 100h6"/><path stroke="#988008" d="M1162 100h6"/><path stroke="#987808" d="M1168 100h6"/><path stroke="#986808" d="M1174 100h6"/><path stroke="#986008" d="M1180 100h6"/><path stroke="#981800" d="M1288 100h24M1282 106h24M1288 112h18"/><path stroke="#981000" d="M1312 100h30M1306 106h36M1306 112h30"/><path stroke="#009820" d="M952 106h132"/><path stroke="#109820" d="M1084 106h6"/><path stroke="#189818" d="M1090 106h6"/><path stroke="#209818" d="M1096 106h6"/><path stroke="#309818" d="M1102 106h6"/><path stroke="#389818" d="M1108 106h6"/><path stroke="#409818" d="M1114 106h6"/><path stroke="#509818" d="M1120 106h6"/><path stroke="#609818" d="M1126 106h6"/><path stroke="#689818" d="M1132 106h6"/><path stroke="#789818" d="M1138 106h6"/><path stroke="#889818" d="M1144 106h6"/><path stroke="#989818" d="M1150 106h6"/><path stroke="#989018" d="M1156 106h6"/><path stroke="#988010" d="M1162 106h6"/><path stroke="#987810" d="M1168 106h6"/><path stroke="#986810" d="M1174 106h6"/><path stroke="#986010" d="M1180 106h6"/><path stroke="#985808" d="M1186 106h6"/><path stroke="#985008" d="M1192 106h12"/><path stroke="#984808" d="M1204 106h6"/><path stroke="#984008" d="M1210 106h12"/><path stroke="#983808" d="M1222 106h12M1222 112h6"/><path stroke="#980800" d="M1342 106h42M1336 112h42M1336 118h36"/><path stroke="#980000" d="M1384 106h12M1378 112h72M1372 118h126M1384 124h168M1438 130h138M1486 136h84M1534 142h30"/><path stroke="#009828" d="M952 112h132"/><path stroke="#089828" d="M1084 112h6"/><path stroke="#189828" d="M1090 112h6"/><path stroke="#209828" d="M1096 112h6"/><path stroke="#289828" d="M1102 112h6"/><path stroke="#389828" d="M1108 112h6"/><path stroke="#409828" d="M1114 112h6"/><path stroke="#509828" d="M1120 112h6"/><path stroke="#609828" d="M1126 112h6"/><path stroke="#689828" d="M1132 112h6"/><path stroke="#789828" d="M1138 112h6"/><path stroke="#889820" d="M1144 112h6"/><path stroke="#989820" d="M1150 112h6"/><path stroke="#988820" d="M1156 112h6"/><path stroke="#988020" d="M1162 112h6"/><path stroke="#987018" d="M1168 112h6"/><path stroke="#986818" d="M1174 112h6"/><path stroke="#986018" d="M1180 112h6"/><path stroke="#985810" d="M1186 112h6"/><path stroke="#985010" d="M1192 112h6"/><path stroke="#984810" d="M1198 112h12"/><path stroke="#984010" d="M1210 112h6"/><path stroke="#983810" d="M1216 112h6M1216 118h12"/><path stroke="#983008" d="M1228 112h18"/><path stroke="#982808" d="M1246 112h12"/><path stroke="#982008" d="M1258 112h24M1258 118h18"/><path stroke="#981808" d="M1282 112h6M1276 118h24M1288 124h12"/><path stroke="#009830" d="M952 118h132"/><path stroke="#089830" d="M1084 118h6"/><path stroke="#189830" d="M1090 118h6"/><path stroke="#209830" d="M1096 118h6"/><path stroke="#289830" d="M1102 118h6"/><path stroke="#389830" d="M1108 118h6"/><path stroke="#409830" d="M1114 118h6"/><path stroke="#509830" d="M1120 118h6"/><path stroke="#609830" d="M1126 118h6"/><path stroke="#689830" d="M1132 118h6"/><path stroke="#789830" d="M1138 118h6"/><path stroke="#889830" d="M1144 118h6"/><path stroke="#989830" d="M1150 118h6"/><path stroke="#988828" d="M1156 118h6"/><path stroke="#988028" d="M1162 118h6"/><path stroke="#987020" d="M1168 118h6"/><path stroke="#986820" d="M1174 118h6"/><path stroke="#986020" d="M1180 118h6"/><path stroke="#985818" d="M1186 118h6"/><path stroke="#985018" d="M1192 118h6"/><path stroke="#984818" d="M1198 118h6"/><path stroke="#984018" d="M1204 118h12M1210 124h6"/><path stroke="#983010" d="M1228 118h12"/><path stroke="#982810" d="M1240 118h18M1240 124h12"/><path stroke="#981008" d="M1300 118h30M1300 124h30"/><path stroke="#980808" d="M1330 118h6M1330 124h36M1324 130h42"/><path stroke="#009838" d="M952 124h132"/><path stroke="#089838" d="M1084 124h6"/><path stroke="#109838" d="M1090 124h6"/><path stroke="#209838" d="M1096 124h6"/><path stroke="#289838" d="M1102 124h6"/><path stroke="#389838" d="M1108 124h6"/><path stroke="#409838" d="M1114 124h6"/><path stroke="#509840" d="M1120 124h6"/><path stroke="#609840" d="M1126 124h6"/><path stroke="#689840" d="M1132 124h6"/><path stroke="#789840" d="M1138 124h6"/><path stroke="#889840" d="M1144 124h6"/><path stroke="#989840" d="M1150 124h6"/><path stroke="#988838" d="M1156 124h6"/><path stroke="#987830" d="M1162 124h6"/><path stroke="#987030" d="M1168 124h6"/><path stroke="#986828" d="M1174 124h6"/><path stroke="#986028" d="M1180 124h6"/><path stroke="#985820" d="M1186 124h6"/><path stroke="#985020" d="M1192 124h6"/><path stroke="#984820" d="M1198 124h6"/><path stroke="#984020" d="M1204 124h6M1204 130h6"/><path stroke="#983818" d="M1216 124h12"/><path stroke="#983018" d="M1228 124h12M1228 130h6"/><path stroke="#982010" d="M1252 124h24M1264 130h6"/><path stroke="#981810" d="M1276 124h12M1270 130h24"/><path stroke="#980008" d="M1366 124h18M1366 130h72M1360 136h126M1390 142h144M1426 148h132M1462 154h90M1498 160h48M1528 166h12"/><path stroke="#009840" d="M952 130h114"/><path stroke="#009848" d="M1066 130h18M952 136h84"/><path stroke="#089848" d="M1084 130h6"/><path stroke="#109848" d="M1090 130h6"/><path stroke="#209848" d="M1096 130h6"/><path stroke="#289848" d="M1102 130h6"/><path stroke="#389848" d="M1108 130h6"/><path stroke="#409848" d="M1114 130h6"/><path stroke="#509848" d="M1120 130h6"/><path stroke="#609848" d="M1126 130h6"/><path stroke="#709848" d="M1132 130h6"/><path stroke="#789848" d="M1138 130h6"/><path stroke="#889848" d="M1144 130h6"/><path stroke="#989848" d="M1150 130h6"/><path stroke="#988840" d="M1156 130h6"/><path stroke="#987840" d="M1162 130h6"/><path stroke="#987038" d="M1168 130h6"/><path stroke="#986030" d="M1174 130h6"/><path stroke="#985830" d="M1180 130h6"/><path stroke="#985030" d="M1186 130h6"/><path stroke="#985028" d="M1192 130h6"/><path stroke="#984828" d="M1198 130h6"/><path stroke="#983820" d="M1210 130h12"/><path stroke="#983020" d="M1222 130h6M1228 136h6"/><path stroke="#982818" d="M1234 130h18"/><path stroke="#982018" d="M1252 130h12M1252 136h12"/><path stroke="#981010" d="M1294 130h30M1294 136h24"/><path stroke="#009850" d="M1036 136h48M958 142h60"/><path stroke="#089850" d="M1084 136h6"/><path stroke="#109850" d="M1090 136h6"/><path stroke="#189850" d="M1096 136h6"/><path stroke="#289850" d="M1102 136h6"/><path stroke="#389858" d="M1108 136h6"/><path stroke="#409858" d="M1114 136h6"/><path stroke="#509858" d="M1120 136h6"/><path stroke="#609858" d="M1126 136h6"/><path stroke="#709858" d="M1132 136h6"/><path stroke="#809858" d="M1138 136h6"/><path stroke="#909858" d="M1144 136h6"/><path stroke="#989058" d="M1150 136h6"/><path stroke="#988850" d="M1156 136h6"/><path stroke="#987848" d="M1162 136h6"/><path stroke="#986840" d="M1168 136h6"/><path stroke="#986040" d="M1174 136h6"/><path stroke="#985838" d="M1180 136h6"/><path stroke="#985038" d="M1186 136h6"/><path stroke="#984830" d="M1192 136h12"/><path stroke="#984028" d="M1204 136h6"/><path stroke="#983828" d="M1210 136h12"/><path stroke="#983028" d="M1222 136h6M1222 142h12"/><path stroke="#982820" d="M1234 136h12"/><path stroke="#982020" d="M1246 136h6M1246 142h18"/><path stroke="#981818" d="M1264 136h24M1276 142h12"/><path stroke="#981018" d="M1288 136h6M1288 142h24M1294 148h18"/><path stroke="#980810" d="M1318 136h42M1318 142h36"/><path stroke="#009858" d="M1018 142h66M958 148h48"/><path stroke="#009860" d="M1084 142h6M1006 148h54M958 154h36"/><path stroke="#109860" d="M1090 142h6"/><path stroke="#189860" d="M1096 142h6"/><path stroke="#289860" d="M1102 142h6"/><path stroke="#309860" d="M1108 142h6"/><path stroke="#409860" d="M1114 142h6"/><path stroke="#509860" d="M1120 142h6"/><path stroke="#609868" d="M1126 142h6"/><path stroke="#709868" d="M1132 142h6"/><path stroke="#809868" d="M1138 142h6"/><path stroke="#909868" d="M1144 142h6"/><path stroke="#989068" d="M1150 142h6"/><path stroke="#988060" d="M1156 142h6"/><path stroke="#987858" d="M1162 142h6"/><path stroke="#986850" d="M1168 142h6"/><path stroke="#986048" d="M1174 142h6"/><path stroke="#985840" d="M1180 142h6"/><path stroke="#985040" d="M1186 142h6"/><path stroke="#984838" d="M1192 142h6"/><path stroke="#984038" d="M1198 142h6"/><path stroke="#984030" d="M1204 142h6"/><path stroke="#983830" d="M1210 142h12"/><path stroke="#982828" d="M1234 142h12M1234 148h12"/><path stroke="#981820" d="M1264 142h12M1264 148h18"/><path stroke="#980818" d="M1312 142h6M1312 148h36M1318 154h24"/><path stroke="#980010" d="M1354 142h36M1348 148h78M1372 154h90M1396 160h102M1426 166h102M1450 172h84M1474 178h54M1504 184h18"/><path stroke="#009868" d="M1060 148h30M994 154h48M958 160h24"/><path stroke="#109868" d="M1090 148h6"/><path stroke="#189868" d="M1096 148h6"/><path stroke="#289870" d="M1102 148h6"/><path stroke="#309870" d="M1108 148h6"/><path stroke="#409870" d="M1114 148h6"/><path stroke="#509870" d="M1120 148h6"/><path stroke="#609870" d="M1126 148h6"/><path stroke="#709878" d="M1132 148h6"/><path stroke="#809878" d="M1138 148h6"/><path stroke="#909878" d="M1144 148h6"/><path stroke="#989070" d="M1150 148h6"/><path stroke="#988068" d="M1156 148h6"/><path stroke="#987060" d="M1162 148h6"/><path stroke="#986858" d="M1168 148h6"/><path stroke="#986050" d="M1174 148h6"/><path stroke="#985848" d="M1180 148h6"/><path stroke="#985048" d="M1186 148h6"/><path stroke="#984840" d="M1192 148h6"/><path stroke="#984040" d="M1198 148h6"/><path stroke="#983838" d="M1204 148h12"/><path stroke="#983030" d="M1216 148h12"/><path stroke="#982830" d="M1228 148h6M1234 154h6"/><path stroke="#982028" d="M1246 148h12M1252 154h6"/><path stroke="#981828" d="M1258 148h6M1258 154h18M1270 160h6"/><path stroke="#981020" d="M1282 148h12M1282 154h24"/><path stroke="#009870" d="M1042 154h36M982 160h42M964 166h12"/><path stroke="#009878" d="M1078 154h12M1024 160h36M976 166h36"/><path stroke="#089878" d="M1090 154h6"/><path stroke="#189878" d="M1096 154h6"/><path stroke="#289878" d="M1102 154h6"/><path stroke="#309880" d="M1108 154h6"/><path stroke="#409880" d="M1114 154h6"/><path stroke="#509880" d="M1120 154h6"/><path stroke="#609880" d="M1126 154h6"/><path stroke="#709888" d="M1132 154h6"/><path stroke="#809888" d="M1138 154h6"/><path stroke="#909888" d="M1144 154h6"/><path stroke="#989080" d="M1150 154h6"/><path stroke="#988078" d="M1156 154h6"/><path stroke="#987070" d="M1162 154h6"/><path stroke="#986860" d="M1168 154h6"/><path stroke="#986060" d="M1174 154h6"/><path stroke="#985058" d="M1180 154h6"/><path stroke="#985050" d="M1186 154h6"/><path stroke="#984848" d="M1192 154h6"/><path stroke="#984048" d="M1198 154h6"/><path stroke="#983840" d="M1204 154h12"/><path stroke="#983038" d="M1216 154h12"/><path stroke="#982838" d="M1228 154h6M1228 160h12"/><path stroke="#982030" d="M1240 154h12M1246 160h6"/><path stroke="#981028" d="M1276 154h6M1276 160h24M1282 166h12"/><path stroke="#980820" d="M1306 154h12M1300 160h36M1318 166h12"/><path stroke="#980018" d="M1342 154h30M1336 160h60M1360 166h66M1378 172h72M1402 178h72M1426 184h78M1444 190h72M1468 196h42M1486 202h18"/><path stroke="#009880" d="M1060 160h30M1012 166h30M964 172h36"/><path stroke="#089888" d="M1090 160h6"/><path stroke="#189888" d="M1096 160h6"/><path stroke="#209888" d="M1102 160h6"/><path stroke="#309888" d="M1108 160h6"/><path stroke="#409890" d="M1114 160h6"/><path stroke="#509890" d="M1120 160h6"/><path stroke="#609890" d="M1126 160h6"/><path stroke="#709898" d="M1132 160h6"/><path stroke="#809898" d="M1138 160h6"/><path stroke="#909898" d="M1144 160h6"/><path stroke="#989090" d="M1150 160h6"/><path stroke="#988088" d="M1156 160h6"/><path stroke="#987078" d="M1162 160h6"/><path stroke="#986870" d="M1168 160h6"/><path stroke="#985868" d="M1174 160h6"/><path stroke="#985060" d="M1180 160h6"/><path stroke="#984858" d="M1186 160h6"/><path stroke="#984050" d="M1192 160h12"/><path stroke="#983848" d="M1204 160h6"/><path stroke="#983048" d="M1210 160h6M1216 166h6"/><path stroke="#983040" d="M1216 160h6"/><path stroke="#982840" d="M1222 160h6M1228 166h6"/><path stroke="#982038" d="M1240 160h6M1240 166h12"/><path stroke="#981830" d="M1252 160h18M1258 166h12"/><path stroke="#009888" d="M1042 166h30M1000 172h30M970 178h18"/><path stroke="#009890" d="M1072 166h18M1030 172h24M988 178h30M970 184h12"/><path stroke="#089890" d="M1090 166h6"/><path stroke="#189898" d="M1096 166h6"/><path stroke="#209898" d="M1102 166h6"/><path stroke="#309898" d="M1108 166h6"/><path stroke="#409098" d="M1114 166h6"/><path stroke="#489098" d="M1120 166h6"/><path stroke="#589098" d="M1126 166h6"/><path stroke="#688898" d="M1132 166h6"/><path stroke="#788898" d="M1138 166h6"/><path stroke="#808898" d="M1144 166h6"/><path stroke="#908098" d="M1150 166h6"/><path stroke="#987890" d="M1156 166h6"/><path stroke="#987088" d="M1162 166h6"/><path stroke="#986078" d="M1168 166h6"/><path stroke="#985870" d="M1174 166h6"/><path stroke="#985068" d="M1180 166h6"/><path stroke="#984860" d="M1186 166h6"/><path stroke="#984060" d="M1192 166h6"/><path stroke="#984058" d="M1198 166h6"/><path stroke="#983850" d="M1204 166h6"/><path stroke="#983050" d="M1210 166h6"/><path stroke="#982848" d="M1222 166h6M1222 172h12"/><path stroke="#982040" d="M1234 166h6M1240 172h6"/><path stroke="#981838" d="M1252 166h6M1252 172h18"/><path stroke="#981030" d="M1270 166h12M1276 172h18"/><path stroke="#980828" d="M1294 166h24M1300 172h24"/><path stroke="#980020" d="M1330 166h30M1336 172h42M1354 178h48M1372 184h54M1390 190h54M1408 196h60M1426 202h60M1444 208h54M1462 214h30M1480 220h12"/><path stroke="#009898" d="M1054 172h30M1018 178h30M982 184h30M970 190h6"/><path stroke="#009098" d="M1084 172h6M1048 178h24M1012 184h24M976 190h30"/><path stroke="#089098" d="M1090 172h6"/><path stroke="#109098" d="M1096 172h6"/><path stroke="#208898" d="M1102 172h6"/><path stroke="#288898" d="M1108 172h6"/><path stroke="#388898" d="M1114 172h6"/><path stroke="#408098" d="M1120 172h6"/><path stroke="#508098" d="M1126 172h6"/><path stroke="#608098" d="M1132 172h6"/><path stroke="#687898" d="M1138 172h6"/><path stroke="#787898" d="M1144 172h6"/><path stroke="#807898" d="M1150 172h6"/><path stroke="#907098" d="M1156 172h6"/><path stroke="#986890" d="M1162 172h6"/><path stroke="#986088" d="M1168 172h6"/><path stroke="#985880" d="M1174 172h6"/><path stroke="#985070" d="M1180 172h6"/><path stroke="#984868" d="M1186 172h6"/><path stroke="#984068" d="M1192 172h6"/><path stroke="#983860" d="M1198 172h6"/><path stroke="#983858" d="M1204 172h6"/><path stroke="#983058" d="M1210 172h6M1210 178h6"/><path stroke="#982850" d="M1216 172h6M1222 178h6"/><path stroke="#982048" d="M1234 172h6M1234 178h12"/><path stroke="#981840" d="M1246 172h6M1246 178h18"/><path stroke="#981038" d="M1270 172h6M1264 178h24M1276 184h6"/><path stroke="#980830" d="M1294 172h6M1288 178h30M1300 184h18"/><path stroke="#980028" d="M1324 172h12M1318 178h36M1330 184h42M1348 190h42M1360 196h48M1378 202h48M1396 208h48M1408 214h54M1426 220h54M1438 226h48M1456 232h24"/><path stroke="#008898" d="M1072 178h18M1036 184h24M1006 190h24M976 196h24"/><path stroke="#008098" d="M1090 178h6M1060 184h24M1030 190h24M1000 196h24M976 202h18"/><path stroke="#108098" d="M1096 178h6"/><path stroke="#188098" d="M1102 178h6"/><path stroke="#287898" d="M1108 178h6"/><path stroke="#307898" d="M1114 178h6"/><path stroke="#407898" d="M1120 178h6"/><path stroke="#487898" d="M1126 178h6"/><path stroke="#507098" d="M1132 178h6"/><path stroke="#607098" d="M1138 178h6"/><path stroke="#707098" d="M1144 178h6"/><path stroke="#786898" d="M1150 178h6"/><path stroke="#886898" d="M1156 178h6"/><path stroke="#906898" d="M1162 178h6"/><path stroke="#986090" d="M1168 178h6"/><path stroke="#985888" d="M1174 178h6"/><path stroke="#985080" d="M1180 178h6"/><path stroke="#984878" d="M1186 178h6"/><path stroke="#984070" d="M1192 178h6"/><path stroke="#983868" d="M1198 178h6"/><path stroke="#983060" d="M1204 178h6M1210 184h6"/><path stroke="#982858" d="M1216 178h6M1222 184h6"/><path stroke="#982050" d="M1228 178h6M1234 184h6"/><path stroke="#007898" d="M1084 184h12M1054 190h24M1024 196h24M994 202h30M976 208h18"/><path stroke="#087898" d="M1096 184h6"/><path stroke="#187098" d="M1102 184h6"/><path stroke="#207098" d="M1108 184h6"/><path stroke="#287098" d="M1114 184h6"/><path stroke="#387098" d="M1120 184h6"/><path stroke="#406898" d="M1126 184h6"/><path stroke="#506898" d="M1132 184h6"/><path stroke="#586898" d="M1138 184h6"/><path stroke="#606098" d="M1144 184h6"/><path stroke="#706098" d="M1150 184h6"/><path stroke="#786098" d="M1156 184h6"/><path stroke="#885898" d="M1162 184h6"/><path stroke="#905898" d="M1168 184h6"/><path stroke="#985090" d="M1174 184h6"/><path stroke="#984888" d="M1180 184h6"/><path stroke="#984080" d="M1186 184h6"/><path stroke="#984078" d="M1192 184h6"/><path stroke="#983870" d="M1198 184h6"/><path stroke="#983068" d="M1204 184h6"/><path stroke="#982860" d="M1216 184h6"/><path stroke="#982058" d="M1228 184h6M1228 190h12"/><path stroke="#981850" d="M1240 184h6M1240 190h18"/><path stroke="#981848" d="M1246 184h12"/><path stroke="#981040" d="M1258 184h18M1270 190h12"/><path stroke="#980838" d="M1282 184h18M1294 190h18"/><path stroke="#980030" d="M1318 184h12M1318 190h30M1330 196h30M1342 202h36M1354 208h42M1372 214h36M1384 220h42M1396 226h42M1414 232h42M1426 238h48M1438 244h30M1456 250h6"/><path stroke="#007098" d="M1078 190h18M1048 196h24M1024 202h24M994 208h30M982 214h18"/><path stroke="#086898" d="M1096 190h6"/><path stroke="#106898" d="M1102 190h6"/><path stroke="#206898" d="M1108 190h6"/><path stroke="#286898" d="M1114 190h6"/><path stroke="#306098" d="M1120 190h6"/><path stroke="#386098" d="M1126 190h6"/><path stroke="#486098" d="M1132 190h6"/><path stroke="#505898" d="M1138 190h6"/><path stroke="#585898" d="M1144 190h6"/><path stroke="#685898" d="M1150 190h6"/><path stroke="#705898" d="M1156 190h6"/><path stroke="#805098" d="M1162 190h6"/><path stroke="#885098" d="M1168 190h6"/><path stroke="#905098" d="M1174 190h6"/><path stroke="#984898" d="M1180 190h6"/><path stroke="#984088" d="M1186 190h6"/><path stroke="#983880" d="M1192 190h6"/><path stroke="#983878" d="M1198 190h6"/><path stroke="#983070" d="M1204 190h6"/><path stroke="#982868" d="M1210 190h12"/><path stroke="#982060" d="M1222 190h6M1228 196h6"/><path stroke="#981048" d="M1258 190h12M1264 196h12"/><path stroke="#980840" d="M1282 190h12M1282 196h24M1294 202h6"/><path stroke="#980038" d="M1312 190h6M1306 196h24M1318 202h24M1330 208h24M1342 214h30M1354 220h30M1366 226h30M1378 232h36M1390 238h36M1402 244h36M1414 250h42M1426 256h30M1438 262h12"/><path stroke="#006898" d="M1072 196h24M1048 202h24M1024 208h24M1000 214h30M982 220h24"/><path stroke="#086098" d="M1096 196h6"/><path stroke="#106098" d="M1102 196h6"/><path stroke="#186098" d="M1108 196h6"/><path stroke="#206098" d="M1114 196h6"/><path stroke="#305898" d="M1120 196h6"/><path stroke="#385898" d="M1126 196h6"/><path stroke="#405898" d="M1132 196h6"/><path stroke="#485098" d="M1138 196h6M1138 202h6"/><path stroke="#585098" d="M1144 196h6"/><path stroke="#605098" d="M1150 196h6"/><path stroke="#685098" d="M1156 196h6"/><path stroke="#704898" d="M1162 196h6"/><path stroke="#804898" d="M1168 196h6"/><path stroke="#884898" d="M1174 196h6"/><path stroke="#904098" d="M1180 196h6"/><path stroke="#984098" d="M1186 196h6"/><path stroke="#983888" d="M1192 196h6"/><path stroke="#983080" d="M1198 196h6"/><path stroke="#983078" d="M1204 196h6"/><path stroke="#982870" d="M1210 196h12"/><path stroke="#982068" d="M1222 196h6M1228 202h6"/><path stroke="#981860" d="M1234 196h6M1240 202h6"/><path stroke="#981858" d="M1240 196h12"/><path stroke="#981050" d="M1252 196h12M1264 202h6"/><path stroke="#980848" d="M1276 196h6M1276 202h18M1288 208h6"/><path stroke="#006098" d="M1072 202h24M1048 208h30M1030 214h24M1006 220h30M988 226h24"/><path stroke="#085898" d="M1096 202h6M1096 208h6"/><path stroke="#105898" d="M1102 202h6"/><path stroke="#185898" d="M1108 202h6"/><path stroke="#205898" d="M1114 202h6"/><path stroke="#285098" d="M1120 202h6M1120 208h6"/><path stroke="#305098" d="M1126 202h6"/><path stroke="#385098" d="M1132 202h6"/><path stroke="#504898" d="M1144 202h6"/><path stroke="#584898" d="M1150 202h6"/><path stroke="#604898" d="M1156 202h6"/><path stroke="#684098" d="M1162 202h6M1162 208h6"/><path stroke="#784098" d="M1168 202h6"/><path stroke="#804098" d="M1174 202h6"/><path stroke="#884098" d="M1180 202h6"/><path stroke="#903898" d="M1186 202h6"/><path stroke="#983898" d="M1192 202h6"/><path stroke="#983088" d="M1198 202h6"/><path stroke="#982880" d="M1204 202h12"/><path stroke="#982078" d="M1216 202h6M1222 208h6"/><path stroke="#982070" d="M1222 202h6"/><path stroke="#981868" d="M1234 202h6M1234 208h12"/><path stroke="#981058" d="M1246 202h18M1258 208h6"/><path stroke="#980850" d="M1270 202h6M1270 208h18M1282 214h6"/><path stroke="#980040" d="M1300 202h18M1306 208h24M1318 214h24M1330 220h24M1342 226h24M1348 232h30M1360 238h30M1372 244h30M1384 250h30M1396 256h30M1408 262h30M1420 268h24M1432 274h6"/><path stroke="#005898" d="M1078 208h18M1054 214h24M1036 220h24M1012 226h30M988 232h36M994 238h6"/><path stroke="#105098" d="M1102 208h6"/><path stroke="#185098" d="M1108 208h6"/><path stroke="#205098" d="M1114 208h6"/><path stroke="#304898" d="M1126 208h6"/><path stroke="#384898" d="M1132 208h6"/><path stroke="#404898" d="M1138 208h6"/><path stroke="#484898" d="M1144 208h6"/><path stroke="#504098" d="M1150 208h6M1150 214h6"/><path stroke="#584098" d="M1156 208h6"/><path stroke="#703898" d="M1168 208h6"/><path stroke="#783898" d="M1174 208h6"/><path stroke="#803898" d="M1180 208h6"/><path stroke="#883898" d="M1186 208h6"/><path stroke="#903098" d="M1192 208h6"/><path stroke="#983098" d="M1198 208h6"/><path stroke="#982890" d="M1204 208h6"/><path stroke="#982888" d="M1210 208h6"/><path stroke="#982080" d="M1216 208h6"/><path stroke="#981870" d="M1228 208h6M1234 214h6"/><path stroke="#981060" d="M1246 208h12M1252 214h12"/><path stroke="#980858" d="M1264 208h6M1264 214h18M1276 220h6"/><path stroke="#980048" d="M1294 208h12M1300 214h18M1306 220h24M1318 226h24M1330 232h18M1336 238h24M1348 244h24M1360 250h24M1372 256h24M1378 262h30M1390 268h30M1402 274h30M1414 280h18M1420 286h6"/><path stroke="#005098" d="M1078 214h24M1060 220h30M1042 226h30M1024 232h30M1000 238h36M994 244h18"/><path stroke="#085098" d="M1102 214h6"/><path stroke="#104898" d="M1108 214h6M1108 220h6"/><path stroke="#184898" d="M1114 214h6"/><path stroke="#204898" d="M1120 214h6"/><path stroke="#284898" d="M1126 214h6"/><path stroke="#304098" d="M1132 214h6M1132 220h6"/><path stroke="#384098" d="M1138 214h6"/><path stroke="#484098" d="M1144 214h6"/><path stroke="#583898" d="M1156 214h6"/><path stroke="#603898" d="M1162 214h6"/><path stroke="#683898" d="M1168 214h6"/><path stroke="#703098" d="M1174 214h6M1180 220h6"/><path stroke="#783098" d="M1180 214h6"/><path stroke="#803098" d="M1186 214h6"/><path stroke="#883098" d="M1192 214h6"/><path stroke="#902898" d="M1198 214h6M1204 220h6"/><path stroke="#982898" d="M1204 214h6"/><path stroke="#982090" d="M1210 214h6M1216 220h6"/><path stroke="#982088" d="M1216 214h6"/><path stroke="#981880" d="M1222 214h6M1228 220h6"/><path stroke="#981878" d="M1228 214h6M1234 220h6"/><path stroke="#981070" d="M1240 214h6M1240 220h12"/><path stroke="#981068" d="M1246 214h6M1252 220h6"/><path stroke="#980050" d="M1288 214h12M1288 220h18M1300 226h18M1312 232h18M1318 238h18M1330 244h18M1336 250h24M1348 256h24M1360 262h18M1366 268h24M1378 274h24M1384 280h30M1396 286h24M1408 292h12"/><path stroke="#004898" d="M1090 220h12M1072 226h24M1054 232h24M1036 238h30M1012 244h36M1000 250h30M1000 256h12"/><path stroke="#084898" d="M1102 220h6"/><path stroke="#184098" d="M1114 220h6M1114 226h6"/><path stroke="#204098" d="M1120 220h6M1120 226h6"/><path stroke="#284098" d="M1126 220h6"/><path stroke="#383898" d="M1138 220h6M1144 226h6"/><path stroke="#403898" d="M1144 220h6"/><path stroke="#483898" d="M1150 220h6"/><path stroke="#503898" d="M1156 220h6"/><path stroke="#583098" d="M1162 220h6M1168 226h6"/><path stroke="#603098" d="M1168 220h6"/><path stroke="#683098" d="M1174 220h6"/><path stroke="#782898" d="M1186 220h6M1192 226h6"/><path stroke="#802898" d="M1192 220h6"/><path stroke="#882898" d="M1198 220h6"/><path stroke="#982098" d="M1210 220h6"/><path stroke="#981888" d="M1222 220h6M1228 226h6"/><path stroke="#980868" d="M1258 220h6M1258 226h12"/><path stroke="#980860" d="M1264 220h12M1270 226h6"/><path stroke="#980058" d="M1282 220h6M1282 226h18M1294 232h18M1300 238h18M1312 244h18M1318 250h18M1330 256h18M1336 262h24M1348 268h18M1354 274h24M1366 280h18M1372 286h24M1384 292h24M1390 298h24M1402 304h6"/><path stroke="#004098" d="M1096 226h6M1078 232h24M1066 238h24M1048 244h30M1030 250h30M1012 256h36M1006 262h24M1006 268h12"/><path stroke="#084098" d="M1102 226h6M1102 232h6"/><path stroke="#104098" d="M1108 226h6"/><path stroke="#283898" d="M1126 226h6"/><path stroke="#303898" d="M1132 226h12"/><path stroke="#403098" d="M1150 226h6M1150 232h6"/><path stroke="#483098" d="M1156 226h6M1156 232h6"/><path stroke="#503098" d="M1162 226h6"/><path stroke="#602898" d="M1174 226h6M1174 232h6"/><path stroke="#682898" d="M1180 226h6M1180 232h6"/><path stroke="#702898" d="M1186 226h6"/><path stroke="#802098" d="M1198 226h6M1198 232h6"/><path stroke="#882098" d="M1204 226h6M1204 232h6"/><path stroke="#902098" d="M1210 226h6"/><path stroke="#981898" d="M1216 226h6M1216 232h12"/><path stroke="#981890" d="M1222 226h6"/><path stroke="#981080" d="M1234 226h6M1240 232h6"/><path stroke="#981078" d="M1240 226h12"/><path stroke="#980870" d="M1252 226h6M1258 232h12M1264 238h6"/><path stroke="#980060" d="M1276 226h6M1282 232h12M1288 238h12M1294 244h18M1306 250h12M1312 256h18M1324 262h12M1330 268h18M1336 274h18M1348 280h18M1354 286h18M1366 292h18M1372 298h18M1378 304h24M1390 310h12"/><path stroke="#103898" d="M1108 232h12M1114 238h6"/><path stroke="#183898" d="M1120 232h6"/><path stroke="#203898" d="M1126 232h6"/><path stroke="#283098" d="M1132 232h6M1132 238h6"/><path stroke="#303098" d="M1138 232h6M1138 238h6"/><path stroke="#383098" d="M1144 232h6M1144 238h6"/><path stroke="#502898" d="M1162 232h6M1168 238h6"/><path stroke="#582898" d="M1168 232h6"/><path stroke="#702098" d="M1186 232h6M1192 238h6"/><path stroke="#782098" d="M1192 232h6"/><path stroke="#901898" d="M1210 232h6M1216 238h6"/><path stroke="#981090" d="M1228 232h6M1234 238h6"/><path stroke="#981088" d="M1234 232h6M1240 238h6"/><path stroke="#980878" d="M1246 232h12M1258 238h6"/><path stroke="#980068" d="M1270 232h12M1276 238h12M1282 244h12M1294 250h12M1300 256h12M1306 262h18M1318 268h12M1324 274h12M1330 280h18M1342 286h12M1348 292h18M1354 298h18M1366 304h12M1372 310h18M1378 316h18M1384 322h6"/><path stroke="#003898" d="M1090 238h12M1078 244h30M1060 250h36M1048 256h30M1030 262h36M1018 268h36M1012 274h24M1012 280h12"/><path stroke="#083898" d="M1102 238h12"/><path stroke="#183098" d="M1120 238h6M1120 244h6M1120 250h6"/><path stroke="#203098" d="M1126 238h6M1126 244h12"/><path stroke="#382898" d="M1150 238h6M1150 244h6"/><path stroke="#402898" d="M1156 238h6M1156 244h6"/><path stroke="#482898" d="M1162 238h6"/><path stroke="#582098" d="M1174 238h6M1180 244h6"/><path stroke="#602098" d="M1180 238h6M1186 244h6"/><path stroke="#682098" d="M1186 238h6"/><path stroke="#781898" d="M1198 238h6M1204 244h6"/><path stroke="#801898" d="M1204 238h6M1210 244h6"/><path stroke="#881898" d="M1210 238h6"/><path stroke="#981098" d="M1222 238h12M1228 244h12"/><path stroke="#980880" d="M1246 238h12M1252 244h12"/><path stroke="#980070" d="M1270 238h6M1270 244h12M1282 250h12M1288 256h12M1294 262h12M1300 268h18M1312 274h12M1318 280h12M1324 286h18M1330 292h18M1342 298h12M1348 304h18M1354 310h18M1360 316h18M1372 322h12M1378 328h6"/><path stroke="#083098" d="M1108 244h6M1108 250h6"/><path stroke="#103098" d="M1114 244h6M1114 250h6"/><path stroke="#282898" d="M1138 244h6M1138 250h6"/><path stroke="#302898" d="M1144 244h6M1144 250h6"/><path stroke="#482098" d="M1162 244h6M1168 250h6"/><path stroke="#502098" d="M1168 244h12M1174 250h6"/><path stroke="#681898" d="M1192 244h6M1198 250h6"/><path stroke="#701898" d="M1198 244h6"/><path stroke="#881098" d="M1216 244h6M1222 250h6"/><path stroke="#901098" d="M1222 244h6M1228 250h6"/><path stroke="#980890" d="M1240 244h6M1246 250h6"/><path stroke="#980888" d="M1246 244h6M1252 250h6"/><path stroke="#980078" d="M1264 244h6M1270 250h12M1276 256h12M1282 262h12M1294 268h6M1300 274h12M1306 280h12M1312 286h12M1318 292h12M1324 298h18M1336 304h12M1342 310h12M1348 316h12M1354 322h18M1360 328h18M1372 334h6"/><path stroke="#003098" d="M1096 250h12M1078 256h30M1066 262h30M1054 268h30M1036 274h36M1024 280h36M1018 286h30M1018 292h18"/><path stroke="#182898" d="M1126 250h6M1126 256h6M1126 262h6"/><path stroke="#202898" d="M1132 250h6M1132 256h6"/><path stroke="#382098" d="M1150 250h12M1156 256h6M1156 262h6"/><path stroke="#402098" d="M1162 250h6M1162 256h6"/><path stroke="#581898" d="M1180 250h6M1186 256h6"/><path stroke="#601898" d="M1186 250h12M1192 256h6"/><path stroke="#701098" d="M1204 250h6M1210 256h6M1210 262h6"/><path stroke="#781098" d="M1210 250h6M1216 256h6"/><path stroke="#801098" d="M1216 250h6M1222 256h6"/><path stroke="#980898" d="M1234 250h12M1240 256h12"/><path stroke="#980080" d="M1258 250h12M1270 256h6M1276 262h6M1282 268h12M1288 274h12M1294 280h12M1300 286h12M1306 292h12M1312 298h12M1324 304h12M1330 310h12M1336 316h12M1342 322h12M1348 328h12M1354 334h18M1360 340h12"/><path stroke="#082898" d="M1108 256h6M1108 262h12M1108 268h12"/><path stroke="#102898" d="M1114 256h12M1120 262h6"/><path stroke="#282098" d="M1138 256h12M1144 262h6M1144 268h6"/><path stroke="#302098" d="M1150 256h6M1150 262h6"/><path stroke="#481898" d="M1168 256h12M1174 262h6M1174 268h6"/><path stroke="#501898" d="M1180 256h6M1180 262h12"/><path stroke="#681098" d="M1198 256h12M1204 262h6"/><path stroke="#880898" d="M1228 256h6M1234 262h6"/><path stroke="#900898" d="M1234 256h6M1240 262h6"/><path stroke="#980090" d="M1252 256h6M1258 262h6M1264 268h6M1270 274h6M1276 280h6M1282 286h12M1288 292h12M1294 298h12M1300 304h12M1306 310h12M1312 316h12M1318 322h12M1324 328h12M1330 334h12M1336 340h12M1342 346h12M1348 352h12"/><path stroke="#980088" d="M1258 256h12M1264 262h12M1270 268h12M1276 274h12M1282 280h12M1294 286h6M1300 292h6M1306 298h6M1312 304h12M1318 310h12M1324 316h12M1330 322h12M1336 328h12M1342 334h12M1348 340h12M1354 346h12"/><path stroke="#002898" d="M1096 262h12M1084 268h24M1072 274h36M1060 280h36M1048 286h36M1036 292h36M1024 298h36M1030 304h18M1030 310h12"/><path stroke="#202098" d="M1132 262h12M1138 268h6"/><path stroke="#381898" d="M1162 262h6M1162 268h6M1162 274h12"/><path stroke="#401898" d="M1168 262h6M1168 268h6"/><path stroke="#581098" d="M1192 262h6M1192 268h6M1198 274h6"/><path stroke="#601098" d="M1198 262h6M1198 268h12"/><path stroke="#700898" d="M1216 262h6M1216 268h6M1222 274h6"/><path stroke="#780898" d="M1222 262h6M1222 268h12M1228 274h6"/><path stroke="#800898" d="M1228 262h6M1234 268h6"/><path stroke="#980098" d="M1246 262h12M1252 268h12M1258 274h12M1264 280h12M1270 286h12M1276 292h12M1282 298h12M1288 304h12M1294 310h12M1300 316h12M1306 322h12M1312 328h12M1318 334h12M1324 340h12M1330 346h12M1336 352h12M1342 358h12"/><path stroke="#102098" d="M1120 268h6M1120 274h6M1120 280h12"/><path stroke="#182098" d="M1126 268h12M1126 274h12"/><path stroke="#301898" d="M1150 268h12M1156 274h6M1156 280h6"/><path stroke="#481098" d="M1180 268h6M1180 274h6M1186 280h6"/><path stroke="#501098" d="M1186 268h6M1186 274h12M1192 280h6"/><path stroke="#680898" d="M1210 268h6M1216 274h6M1216 280h12"/><path stroke="#880098" d="M1240 268h6M1246 274h6M1252 280h6M1258 286h6M1258 292h12M1264 298h12M1270 304h12M1276 310h12M1282 316h12M1288 322h12M1294 328h12M1300 334h6M1306 340h6M1312 346h6M1312 352h12M1318 358h12M1324 364h12M1330 370h12"/><path stroke="#900098" d="M1246 268h6M1252 274h6M1258 280h6M1264 286h6M1270 292h6M1276 298h6M1282 304h6M1288 310h6M1294 316h6M1300 322h6M1306 328h6M1306 334h12M1312 340h12M1318 346h12M1324 352h12M1330 358h12M1336 364h12"/><path stroke="#002098" d="M1108 274h6M1096 280h18M1084 286h30M1072 292h36M1060 298h42M1048 304h42M1042 310h36M1036 316h36M1036 322h24M1042 328h6"/><path stroke="#082098" d="M1114 274h6M1114 280h6M1114 286h6"/><path stroke="#201898" d="M1138 274h6M1138 280h12M1144 286h6"/><path stroke="#281898" d="M1144 274h12M1150 280h6M1150 286h6"/><path stroke="#401098" d="M1174 274h6M1174 280h12M1180 286h6"/><path stroke="#600898" d="M1204 274h12M1210 280h6M1216 286h6"/><path stroke="#800098" d="M1234 274h12M1240 280h12M1246 286h12M1252 292h6M1258 298h6M1264 304h6M1270 310h6M1270 316h12M1276 322h12M1282 328h12M1288 334h12M1294 340h12M1300 346h12M1306 352h6M1306 358h12M1312 364h12M1318 370h12M1324 376h12"/><path stroke="#181898" d="M1132 280h6M1132 286h12M1132 292h12"/><path stroke="#301098" d="M1162 280h6M1162 286h6M1162 292h12M1162 298h12"/><path stroke="#381098" d="M1168 280h6M1168 286h12M1174 292h6"/><path stroke="#580898" d="M1198 280h12M1204 286h12M1210 292h6"/><path stroke="#700098" d="M1228 280h6M1228 286h12M1234 292h12M1240 298h6M1246 304h6M1246 310h12M1252 316h12M1258 322h12M1264 328h6M1270 334h6M1270 340h12M1276 346h12M1282 352h12M1288 358h12M1288 364h12M1294 370h12M1300 376h12M1306 382h12M1312 388h12M1312 394h6"/><path stroke="#780098" d="M1234 280h6M1240 286h6M1246 292h6M1246 298h12M1252 304h12M1258 310h12M1264 316h6M1270 322h6M1270 328h12M1276 334h12M1282 340h12M1288 346h12M1294 352h12M1300 358h6M1300 364h12M1306 370h12M1312 376h12M1318 382h12"/><path stroke="#101898" d="M1120 286h12M1126 292h6M1126 298h12"/><path stroke="#281098" d="M1156 286h6M1156 292h6M1156 298h6M1156 304h6"/><path stroke="#480898" d="M1186 286h12M1192 292h6M1192 298h12"/><path stroke="#500898" d="M1198 286h6M1198 292h12"/><path stroke="#680098" d="M1222 286h6M1228 292h6M1228 298h12M1234 304h12M1240 310h6M1246 316h6M1246 322h12M1252 328h12M1258 334h12M1264 340h6M1264 346h12M1270 352h12M1276 358h12M1276 364h12M1282 370h12M1288 376h12M1294 382h12M1294 388h18M1300 394h12M1306 400h6"/><path stroke="#001898" d="M1108 292h6M1102 298h12M1090 304h24M1078 310h42M1072 316h36M1060 322h42M1048 328h42M1042 334h42M1048 340h30M1054 346h12M1054 352h6"/><path stroke="#081898" d="M1114 292h12M1114 298h12M1114 304h12"/><path stroke="#201098" d="M1144 292h12M1144 298h12M1150 304h6M1150 310h6"/><path stroke="#400898" d="M1180 292h12M1186 298h6M1186 304h12"/><path stroke="#600098" d="M1216 292h12M1222 298h6M1228 304h6M1228 310h12M1234 316h12M1240 322h6M1240 328h12M1246 334h12M1252 340h12M1252 346h12M1258 352h12M1264 358h12M1264 364h12M1270 370h12M1276 376h12M1282 382h12M1282 388h12M1288 394h12M1294 400h12M1294 406h12"/><path stroke="#181098" d="M1138 298h6M1138 304h12M1138 310h12M1138 316h12"/><path stroke="#380898" d="M1174 298h12M1180 304h6M1180 310h12M1180 316h6"/><path stroke="#500098" d="M1204 298h6M1204 304h12M1210 310h12M1216 316h6M1216 322h12M1222 328h12M1222 334h12M1228 340h12M1234 346h12M1234 352h12M1240 358h12M1240 364h12M1246 370h12M1252 376h12M1252 382h12M1258 388h12M1258 394h18M1264 400h12M1270 406h12M1270 412h18M1276 418h12M1276 424h12"/><path stroke="#580098" d="M1210 298h12M1216 304h12M1222 310h6M1222 316h12M1228 322h12M1234 328h6M1234 334h12M1240 340h12M1246 346h6M1246 352h12M1252 358h12M1252 364h12M1258 370h12M1264 376h12M1264 382h18M1270 388h12M1276 394h12M1276 400h18M1282 406h12M1288 412h12M1288 418h6"/><path stroke="#101098" d="M1126 304h12M1126 310h12M1132 316h6M1132 322h12"/><path stroke="#280898" d="M1162 304h6M1162 310h6M1162 316h12M1162 322h12M1168 328h6"/><path stroke="#300898" d="M1168 304h12M1168 310h12M1174 316h6M1174 322h6"/><path stroke="#480098" d="M1198 304h6M1198 310h12M1204 316h12M1204 322h12M1210 328h12M1216 334h6M1216 340h12M1222 346h12M1222 352h12M1228 358h12M1228 364h12M1234 370h12M1234 376h18M1240 382h12M1246 388h12M1246 394h12M1252 400h12M1252 406h18M1258 412h12M1258 418h18M1264 424h12M1264 430h18M1270 436h6"/><path stroke="#081098" d="M1120 310h6M1120 316h12M1120 322h12M1120 328h12M1120 334h6"/><path stroke="#200898" d="M1156 310h6M1150 316h12M1156 322h6M1156 328h12M1156 334h12"/><path stroke="#400098" d="M1192 310h6M1192 316h12M1198 322h6M1198 328h12M1204 334h12M1204 340h12M1210 346h12M1210 352h12M1216 358h12M1216 364h12M1222 370h12M1222 376h12M1228 382h12M1228 388h18M1234 394h12M1234 400h18M1240 406h12M1240 412h18M1246 418h12M1246 424h18M1252 430h12M1252 436h18M1258 442h12M1258 448h6"/><path stroke="#001098" d="M1108 316h12M1102 322h18M1090 328h30M1084 334h36M1078 340h42M1066 346h48M1060 352h42M1060 358h36M1066 364h24M1066 370h18"/><path stroke="#380098" d="M1186 316h6M1186 322h12M1186 328h12M1192 334h12M1192 340h12M1198 346h12M1198 352h12M1204 358h12M1204 364h12M1210 370h12M1210 376h12M1216 382h12M1216 388h12M1222 394h12M1222 400h12M1222 406h18M1228 412h12M1228 418h18M1234 424h12M1234 430h18M1240 436h12M1240 442h18M1246 448h12M1246 454h12"/><path stroke="#180898" d="M1144 322h12M1144 328h12M1144 334h12M1150 340h12M1150 346h6"/><path stroke="#300098" d="M1180 322h6M1180 328h6M1180 334h12M1180 340h12M1186 346h12M1186 352h12M1192 358h12M1192 364h12M1198 370h12M1198 376h12M1198 382h18M1204 388h12M1204 394h18M1210 400h12M1210 406h12M1210 412h18M1216 418h12M1216 424h18M1222 430h12M1222 436h18M1228 442h12M1228 448h18M1228 454h18M1234 460h18M1234 466h12"/><path stroke="#100898" d="M1132 328h12M1132 334h12M1138 340h12M1138 346h12M1138 352h12M1138 358h6"/><path stroke="#280098" d="M1174 328h6M1168 334h12M1168 340h12M1174 346h12M1174 352h12M1180 358h12M1180 364h12M1180 370h18M1186 376h12M1186 382h12M1186 388h18M1192 394h12M1192 400h18M1198 406h12M1198 412h12M1198 418h18M1204 424h12M1204 430h18M1204 436h18M1210 442h18M1210 448h18M1216 454h12M1216 460h18M1216 466h18M1222 472h18M1222 478h12M1222 484h6"/><path stroke="#080898" d="M1126 334h6M1126 340h12M1126 346h12M1126 352h12M1126 358h12M1126 364h12"/><path stroke="#000898" d="M1120 340h6M1114 346h12M1102 352h24M1096 358h30M1090 364h36M1084 370h48M1072 376h54M1078 382h36M1078 388h30M1084 394h18M1090 400h6"/><path stroke="#200098" d="M1162 340h6M1162 346h12M1162 352h12M1168 358h12M1168 364h12M1168 370h12M1174 376h12M1174 382h12M1174 388h12M1174 394h18M1180 400h12M1180 406h18M1180 412h18M1186 418h12M1186 424h18M1186 430h18M1192 436h12M1192 442h18M1192 448h18M1198 454h18M1198 460h18M1198 466h18M1204 472h18M1204 478h18M1204 484h18M1210 490h12M1210 496h6"/><path stroke="#180098" d="M1156 346h6M1150 352h12M1150 358h18M1156 364h12M1156 370h12M1156 376h18M1162 382h12M1162 388h12M1162 394h12M1162 400h18M1168 406h12M1168 412h12M1168 418h18M1174 424h12M1174 430h12M1174 436h18M1174 442h18M1180 448h12M1180 454h18M1180 460h18M1180 466h18M1186 472h18M1186 478h18M1186 484h18M1192 490h18M1192 496h18M1198 502h12"/><path stroke="#100098" d="M1144 358h6M1144 364h12M1144 370h12M1144 376h12M1144 382h18M1144 388h18M1150 394h12M1150 400h12M1150 406h18M1150 412h18M1156 418h12M1156 424h18M1156 430h18M1156 436h18M1162 442h12M1162 448h18M1162 454h18M1162 460h18M1162 466h18M1168 472h18M1168 478h18M1180 484h6M1186 490h6"/><path stroke="#080098" d="M1138 364h6M1132 370h12M1132 376h12M1132 382h12M1132 388h12M1132 394h18M1132 400h18M1138 406h12M1138 412h12M1138 418h18M1138 424h18M1138 430h18M1144 436h12M1144 442h18M1144 448h18M1144 454h18M1150 460h12M1156 466h6M1162 472h6"/><path stroke="#000098" d="M1126 376h6M1114 382h18M1108 388h24M1102 394h30M1096 400h36M1096 406h42M1102 412h36M1108 418h30M1108 424h30M1114 430h24M1120 436h24M1126 442h18M1132 448h12"/></g></g></g><g clip-path="url(#cpT)"><g filter="url(#fb2)"><g stroke-width="4"><path stroke="#00ff00" d="M1074 86h4"/><path stroke="#08ff00" d="M1078 86h4"/><path stroke="#10ff00" d="M1082 86h4"/><path stroke="#20ff00" d="M1086 86h4"/><path stroke="#28ff00" d="M1090 86h4"/><path stroke="#38ff00" d="M1094 86h4"/><path stroke="#40ff00" d="M1098 86h4M1098 90h4"/><path stroke="#00ff08" d="M1074 90h4"/><path stroke="#08ff08" d="M1078 90h4"/><path stroke="#10ff08" d="M1082 90h4"/><path stroke="#20ff08" d="M1086 90h4"/><path stroke="#28ff08" d="M1090 90h4"/><path stroke="#30ff00" d="M1094 90h4"/><path stroke="#48ff00" d="M1102 90h4"/><path stroke="#58ff00" d="M1106 90h4"/><path stroke="#60ff00" d="M1110 90h4"/><path stroke="#70ff00" d="M1114 90h4"/><path stroke="#80ff00" d="M1118 90h4"/><path stroke="#88ff00" d="M1122 90h4"/><path stroke="#98ff00" d="M1126 90h4"/><path stroke="#a8ff00" d="M1130 90h4"/><path stroke="#b0ff00" d="M1134 90h4"/><path stroke="#c0ff00" d="M1138 90h4"/><path stroke="#d0ff00" d="M1142 90h4M1142 94h4"/><path stroke="#00ff10" d="M1074 94h4"/><path stroke="#08ff10" d="M1078 94h4"/><path stroke="#10ff10" d="M1082 94h4"/><path stroke="#18ff10" d="M1086 94h4"/><path stroke="#28ff10" d="M1090 94h4"/><path stroke="#30ff10" d="M1094 94h4"/><path stroke="#40ff10" d="M1098 94h4"/><path stroke="#48ff10" d="M1102 94h4"/><path stroke="#58ff08" d="M1106 94h4"/><path stroke="#60ff08" d="M1110 94h4"/><path stroke="#70ff08" d="M1114 94h4"/><path stroke="#78ff08" d="M1118 94h4"/><path stroke="#88ff08" d="M1122 94h4"/><path stroke="#98ff08" d="M1126 94h4"/><path stroke="#a8ff08" d="M1130 94h4"/><path stroke="#b0ff08" d="M1134 94h4"/><path stroke="#c0ff08" d="M1138 94h4"/><path stroke="#e0ff00" d="M1146 94h4"/><path stroke="#f0ff00" d="M1150 94h4"/><path stroke="#fff800" d="M1154 94h4"/><path stroke="#ffe800" d="M1158 94h4"/><path stroke="#ffe000" d="M1162 94h4"/><path stroke="#ffd000" d="M1166 94h4"/><path stroke="#ffc800" d="M1170 94h4"/><path stroke="#ffb800" d="M1174 94h4"/><path stroke="#ffb000" d="M1178 94h4"/><path stroke="#ffa800" d="M1182 94h4"/><path stroke="#ffa000" d="M1186 94h4M1182 98h4"/><path stroke="#00ff18" d="M1074 98h4"/><path stroke="#08ff18" d="M1078 98h4"/><path stroke="#10ff18" d="M1082 98h4"/><path stroke="#18ff18" d="M1086 98h4"/><path stroke="#28ff18" d="M1090 98h4"/><path stroke="#30ff18" d="M1094 98h4"/><path stroke="#40ff18" d="M1098 98h4"/><path stroke="#48ff18" d="M1102 98h4"/><path stroke="#58ff18" d="M1106 98h4"/><path stroke="#60ff18" d="M1110 98h4"/><path stroke="#70ff18" d="M1114 98h4"/><path stroke="#78ff18" d="M1118 98h4"/><path stroke="#88ff10" d="M1122 98h4"/><path stroke="#98ff10" d="M1126 98h4"/><path stroke="#a8ff10" d="M1130 98h4"/><path stroke="#b8ff10" d="M1134 98h4"/><path stroke="#c0ff10" d="M1138 98h4"/><path stroke="#d0ff10" d="M1142 98h4"/><path stroke="#e0ff10" d="M1146 98h4"/><path stroke="#f0ff10" d="M1150 98h4"/><path stroke="#fff810" d="M1154 98h4"/><path stroke="#ffe808" d="M1158 98h4"/><path stroke="#ffd808" d="M1162 98h4"/><path stroke="#ffd008" d="M1166 98h4"/><path stroke="#ffc008" d="M1170 98h4"/><path stroke="#ffb808" d="M1174 98h4"/><path stroke="#ffb008" d="M1178 98h4"/><path stroke="#ff9800" d="M1186 98h4"/><path stroke="#ff9000" d="M1190 98h4"/><path stroke="#ff8800" d="M1194 98h8"/><path stroke="#ff8000" d="M1202 98h4"/><path stroke="#ff7800" d="M1206 98h4"/><path stroke="#ff7000" d="M1210 98h8"/><path stroke="#ff6800" d="M1218 98h4M1218 102h4"/><path stroke="#ff6000" d="M1222 98h8M1222 102h8"/><path stroke="#00ff28" d="M1074 102h8"/><path stroke="#10ff28" d="M1082 102h4"/><path stroke="#18ff28" d="M1086 102h4"/><path stroke="#28ff20" d="M1090 102h4"/><path stroke="#30ff20" d="M1094 102h4"/><path stroke="#38ff20" d="M1098 102h4"/><path stroke="#48ff20" d="M1102 102h4"/><path stroke="#50ff20" d="M1106 102h4"/><path stroke="#60ff20" d="M1110 102h4"/><path stroke="#70ff20" d="M1114 102h4"/><path stroke="#78ff20" d="M1118 102h4"/><path stroke="#88ff20" d="M1122 102h4"/><path stroke="#98ff20" d="M1126 102h4"/><path stroke="#a8ff20" d="M1130 102h4"/><path stroke="#b8ff20" d="M1134 102h4"/><path stroke="#c8ff20" d="M1138 102h4"/><path stroke="#d0ff18" d="M1142 102h4"/><path stroke="#e8ff18" d="M1146 102h4"/><path stroke="#f8ff18" d="M1150 102h4"/><path stroke="#fff818" d="M1154 102h4"/><path stroke="#ffe818" d="M1158 102h4"/><path stroke="#ffd818" d="M1162 102h4"/><path stroke="#ffd010" d="M1166 102h4"/><path stroke="#ffc010" d="M1170 102h4"/><path stroke="#ffb810" d="M1174 102h4"/><path stroke="#ffa810" d="M1178 102h4"/><path stroke="#ffa010" d="M1182 102h4"/><path stroke="#ff9808" d="M1186 102h4"/><path stroke="#ff9008" d="M1190 102h4"/><path stroke="#ff8808" d="M1194 102h4"/><path stroke="#ff8008" d="M1198 102h8"/><path stroke="#ff7808" d="M1206 102h4"/><path stroke="#ff7008" d="M1210 102h4"/><path stroke="#ff6808" d="M1214 102h4M1214 106h8"/><path stroke="#ff5800" d="M1230 102h8"/><path stroke="#ff5000" d="M1238 102h8"/><path stroke="#ff4800" d="M1246 102h8"/><path stroke="#ff4000" d="M1254 102h12M1254 106h8"/><path stroke="#ff3800" d="M1266 102h8M1262 106h12"/><path stroke="#00ff30" d="M1078 106h4"/><path stroke="#10ff30" d="M1082 106h4"/><path stroke="#18ff30" d="M1086 106h4"/><path stroke="#20ff30" d="M1090 106h4"/><path stroke="#30ff30" d="M1094 106h4"/><path stroke="#38ff30" d="M1098 106h4"/><path stroke="#48ff30" d="M1102 106h4"/><path stroke="#50ff30" d="M1106 106h4"/><path stroke="#60ff30" d="M1110 106h4"/><path stroke="#70ff28" d="M1114 106h4"/><path stroke="#78ff28" d="M1118 106h4"/><path stroke="#88ff28" d="M1122 106h4"/><path stroke="#98ff28" d="M1126 106h4"/><path stroke="#a8ff28" d="M1130 106h4"/><path stroke="#b8ff28" d="M1134 106h4"/><path stroke="#c8ff28" d="M1138 106h4"/><path stroke="#d8ff28" d="M1142 106h4"/><path stroke="#e8ff28" d="M1146 106h4"/><path stroke="#f8ff28" d="M1150 106h4"/><path stroke="#fff828" d="M1154 106h4"/><path stroke="#ffe820" d="M1158 106h4"/><path stroke="#ffd820" d="M1162 106h4"/><path stroke="#ffc820" d="M1166 106h4"/><path stroke="#ffc018" d="M1170 106h4"/><path stroke="#ffb018" d="M1174 106h4"/><path stroke="#ffa818" d="M1178 106h4"/><path stroke="#ffa018" d="M1182 106h4"/><path stroke="#ff9810" d="M1186 106h4"/><path stroke="#ff9010" d="M1190 106h4"/><path stroke="#ff8810" d="M1194 106h4"/><path stroke="#ff8010" d="M1198 106h4"/><path stroke="#ff7810" d="M1202 106h8"/><path stroke="#ff7010" d="M1210 106h4M1210 110h4"/><path stroke="#ff6008" d="M1222 106h4"/><path stroke="#ff5808" d="M1226 106h8"/><path stroke="#ff5008" d="M1234 106h8"/><path stroke="#ff4808" d="M1242 106h12M1242 110h8"/><path stroke="#ff3000" d="M1274 106h12"/><path stroke="#ff2800" d="M1286 106h16M1290 110h12"/><path stroke="#ff2000" d="M1302 106h16M1302 110h16"/><path stroke="#00ff38" d="M1078 110h4"/><path stroke="#08ff38" d="M1082 110h4"/><path stroke="#18ff38" d="M1086 110h4"/><path stroke="#20ff38" d="M1090 110h4"/><path stroke="#30ff38" d="M1094 110h4"/><path stroke="#38ff38" d="M1098 110h4"/><path stroke="#48ff38" d="M1102 110h4"/><path stroke="#50ff38" d="M1106 110h4"/><path stroke="#60ff38" d="M1110 110h4"/><path stroke="#70ff38" d="M1114 110h4"/><path stroke="#78ff38" d="M1118 110h4"/><path stroke="#88ff38" d="M1122 110h4"/><path stroke="#98ff38" d="M1126 110h4"/><path stroke="#a8ff38" d="M1130 110h4"/><path stroke="#b8ff38" d="M1134 110h4"/><path stroke="#c8ff38" d="M1138 110h4"/><path stroke="#d8ff38" d="M1142 110h4"/><path stroke="#e8ff38" d="M1146 110h4"/><path stroke="#f8ff38" d="M1150 110h4"/><path stroke="#fff830" d="M1154 110h4"/><path stroke="#ffe830" d="M1158 110h4"/><path stroke="#ffd828" d="M1162 110h4"/><path stroke="#ffc828" d="M1166 110h4"/><path stroke="#ffc028" d="M1170 110h4"/><path stroke="#ffb020" d="M1174 110h4"/><path stroke="#ffa820" d="M1178 110h4"/><path stroke="#ffa020" d="M1182 110h4"/><path stroke="#ff9820" d="M1186 110h4"/><path stroke="#ff9018" d="M1190 110h4"/><path stroke="#ff8818" d="M1194 110h4"/><path stroke="#ff8018" d="M1198 110h4"/><path stroke="#ff7818" d="M1202 110h4"/><path stroke="#ff7018" d="M1206 110h4"/><path stroke="#ff6810" d="M1214 110h4"/><path stroke="#ff6010" d="M1218 110h8"/><path stroke="#ff5810" d="M1226 110h8"/><path stroke="#ff5010" d="M1234 110h8M1234 114h4"/><path stroke="#ff4008" d="M1250 110h12"/><path stroke="#ff3808" d="M1262 110h12"/><path stroke="#ff3008" d="M1274 110h12M1270 114h12"/><path stroke="#ff2808" d="M1286 110h4M1282 114h16"/><path stroke="#ff1800" d="M1318 110h20M1326 114h8"/><path stroke="#ff1000" d="M1338 110h20M1334 114h24"/><path stroke="#00ff48" d="M1078 114h4"/><path stroke="#08ff48" d="M1082 114h4"/><path stroke="#18ff48" d="M1086 114h4"/><path stroke="#20ff48" d="M1090 114h4"/><path stroke="#28ff48" d="M1094 114h4"/><path stroke="#38ff48" d="M1098 114h4"/><path stroke="#48ff48" d="M1102 114h4"/><path stroke="#50ff48" d="M1106 114h4"/><path stroke="#60ff40" d="M1110 114h4"/><path stroke="#70ff40" d="M1114 114h4"/><path stroke="#78ff40" d="M1118 114h4"/><path stroke="#88ff40" d="M1122 114h4"/><path stroke="#98ff40" d="M1126 114h4"/><path stroke="#a8ff40" d="M1130 114h4"/><path stroke="#b8ff40" d="M1134 114h4"/><path stroke="#c8ff40" d="M1138 114h4"/><path stroke="#d8ff40" d="M1142 114h4"/><path stroke="#e8ff40" d="M1146 114h4"/><path stroke="#f8ff40" d="M1150 114h4"/><path stroke="#fff040" d="M1154 114h4"/><path stroke="#ffe038" d="M1158 114h4"/><path stroke="#ffd838" d="M1162 114h4"/><path stroke="#ffc830" d="M1166 114h4"/><path stroke="#ffb830" d="M1170 114h4"/><path stroke="#ffb030" d="M1174 114h4"/><path stroke="#ffa828" d="M1178 114h4"/><path stroke="#ffa028" d="M1182 114h4"/><path stroke="#ff9828" d="M1186 114h4"/><path stroke="#ff9020" d="M1190 114h4"/><path stroke="#ff8820" d="M1194 114h4"/><path stroke="#ff8020" d="M1198 114h4"/><path stroke="#ff7820" d="M1202 114h4"/><path stroke="#ff7020" d="M1206 114h4M1206 118h4"/><path stroke="#ff6818" d="M1210 114h8"/><path stroke="#ff6018" d="M1218 114h8"/><path stroke="#ff5818" d="M1226 114h4M1226 118h4"/><path stroke="#ff5018" d="M1230 114h4M1230 118h8"/><path stroke="#ff4810" d="M1238 114h12"/><path stroke="#ff4010" d="M1250 114h8M1254 118h4"/><path stroke="#ff3810" d="M1258 114h12M1258 118h12"/><path stroke="#ff2008" d="M1298 114h16M1298 118h16"/><path stroke="#ff1808" d="M1314 114h12M1314 118h20M1326 122h4"/><path stroke="#ff0800" d="M1358 114h28M1362 118h20"/><path stroke="#ff0000" d="M1386 114h16M1382 118h24M1398 122h4"/><path stroke="#00ff50" d="M1078 118h4"/><path stroke="#08ff50" d="M1082 118h4"/><path stroke="#10ff50" d="M1086 118h4"/><path stroke="#20ff50" d="M1090 118h4"/><path stroke="#28ff50" d="M1094 118h4"/><path stroke="#38ff50" d="M1098 118h4"/><path stroke="#40ff50" d="M1102 118h4"/><path stroke="#50ff50" d="M1106 118h4"/><path stroke="#60ff50" d="M1110 118h4"/><path stroke="#68ff50" d="M1114 118h4"/><path stroke="#78ff50" d="M1118 118h4"/><path stroke="#88ff50" d="M1122 118h4"/><path stroke="#98ff50" d="M1126 118h4"/><path stroke="#a8ff50" d="M1130 118h4"/><path stroke="#b8ff50" d="M1134 118h4"/><path stroke="#c8ff50" d="M1138 118h4"/><path stroke="#d8ff50" d="M1142 118h4"/><path stroke="#e8ff50" d="M1146 118h4"/><path stroke="#f8ff50" d="M1150 118h4"/><path stroke="#fff050" d="M1154 118h4"/><path stroke="#ffe048" d="M1158 118h4"/><path stroke="#ffd040" d="M1162 118h4"/><path stroke="#ffc840" d="M1166 118h4"/><path stroke="#ffb838" d="M1170 118h4"/><path stroke="#ffb038" d="M1174 118h4"/><path stroke="#ffa838" d="M1178 118h4"/><path stroke="#ff9830" d="M1182 118h4"/><path stroke="#ff9030" d="M1186 118h4"/><path stroke="#ff8830" d="M1190 118h4"/><path stroke="#ff8028" d="M1194 118h8"/><path stroke="#ff7828" d="M1202 118h4"/><path stroke="#ff6820" d="M1210 118h8"/><path stroke="#ff6020" d="M1218 118h4"/><path stroke="#ff5820" d="M1222 118h4M1226 122h4"/><path stroke="#ff4818" d="M1238 118h8"/><path stroke="#ff4018" d="M1246 118h8M1246 122h8"/><path stroke="#ff3010" d="M1270 118h12"/><path stroke="#ff2810" d="M1282 118h12M1278 122h16"/><path stroke="#ff2010" d="M1294 118h4M1294 122h16M1302 126h4"/><path stroke="#ff1008" d="M1334 118h20M1330 122h24"/><path stroke="#ff0808" d="M1354 118h8M1354 122h28M1354 126h24"/><path stroke="#00ff58" d="M1078 122h4"/><path stroke="#08ff58" d="M1082 122h4"/><path stroke="#10ff58" d="M1086 122h4"/><path stroke="#20ff58" d="M1090 122h4"/><path stroke="#28ff60" d="M1094 122h4"/><path stroke="#38ff60" d="M1098 122h4"/><path stroke="#40ff60" d="M1102 122h4"/><path stroke="#50ff60" d="M1106 122h4"/><path stroke="#60ff60" d="M1110 122h4"/><path stroke="#68ff60" d="M1114 122h4"/><path stroke="#78ff60" d="M1118 122h4"/><path stroke="#88ff60" d="M1122 122h4"/><path stroke="#98ff60" d="M1126 122h4"/><path stroke="#a8ff60" d="M1130 122h4"/><path stroke="#b8ff60" d="M1134 122h4"/><path stroke="#c8ff60" d="M1138 122h4"/><path stroke="#d8ff60" d="M1142 122h4"/><path stroke="#e8ff60" d="M1146 122h4"/><path stroke="#ffff60" d="M1150 122h4"/><path stroke="#fff058" d="M1154 122h4"/><path stroke="#ffe058" d="M1158 122h4"/><path stroke="#ffd050" d="M1162 122h4"/><path stroke="#ffc048" d="M1166 122h4"/><path stroke="#ffb848" d="M1170 122h4"/><path stroke="#ffb040" d="M1174 122h4"/><path stroke="#ffa040" d="M1178 122h4"/><path stroke="#ff9838" d="M1182 122h4"/><path stroke="#ff9038" d="M1186 122h4"/><path stroke="#ff8838" d="M1190 122h4"/><path stroke="#ff8030" d="M1194 122h4"/><path stroke="#ff7830" d="M1198 122h8"/><path stroke="#ff7028" d="M1206 122h4"/><path stroke="#ff6828" d="M1210 122h4"/><path stroke="#ff6028" d="M1214 122h8"/><path stroke="#ff5828" d="M1222 122h4M1222 126h4"/><path stroke="#ff5020" d="M1230 122h8"/><path stroke="#ff4820" d="M1238 122h8"/><path stroke="#ff3818" d="M1254 122h12"/><path stroke="#ff3018" d="M1266 122h12M1266 126h12"/><path stroke="#ff1810" d="M1310 122h16M1306 126h20"/><path stroke="#ff0008" d="M1382 122h16M1378 126h20M1382 130h12"/><path stroke="#00ff68" d="M1078 126h8"/><path stroke="#10ff68" d="M1086 126h4"/><path stroke="#18ff68" d="M1090 126h4"/><path stroke="#28ff68" d="M1094 126h4"/><path stroke="#38ff68" d="M1098 126h4"/><path stroke="#40ff68" d="M1102 126h4"/><path stroke="#50ff68" d="M1106 126h4"/><path stroke="#60ff68" d="M1110 126h4"/><path stroke="#68ff68" d="M1114 126h4"/><path stroke="#78ff68" d="M1118 126h4"/><path stroke="#88ff68" d="M1122 126h4"/><path stroke="#98ff68" d="M1126 126h4"/><path stroke="#a8ff70" d="M1130 126h4"/><path stroke="#b8ff70" d="M1134 126h4"/><path stroke="#c8ff70" d="M1138 126h4"/><path stroke="#d8ff70" d="M1142 126h4"/><path stroke="#f0ff70" d="M1146 126h4"/><path stroke="#ffff70" d="M1150 126h4"/><path stroke="#fff068" d="M1154 126h4"/><path stroke="#ffe060" d="M1158 126h4"/><path stroke="#ffd058" d="M1162 126h4"/><path stroke="#ffc058" d="M1166 126h4"/><path stroke="#ffb850" d="M1170 126h4"/><path stroke="#ffa850" d="M1174 126h4"/><path stroke="#ffa048" d="M1178 126h4"/><path stroke="#ff9848" d="M1182 126h4"/><path stroke="#ff9040" d="M1186 126h4"/><path stroke="#ff8840" d="M1190 126h4"/><path stroke="#ff8038" d="M1194 126h4"/><path stroke="#ff7838" d="M1198 126h4"/><path stroke="#ff7038" d="M1202 126h4"/><path stroke="#ff7030" d="M1206 126h4"/><path stroke="#ff6830" d="M1210 126h4"/><path stroke="#ff6030" d="M1214 126h8"/><path stroke="#ff5028" d="M1226 126h8"/><path stroke="#ff4828" d="M1234 126h8M1238 130h4"/><path stroke="#ff4020" d="M1242 126h12"/><path stroke="#ff3820" d="M1254 126h12M1258 130h4"/><path stroke="#ff2818" d="M1278 126h12M1286 130h4"/><path stroke="#ff2018" d="M1290 126h12M1290 130h16"/><path stroke="#ff1010" d="M1326 126h24M1326 130h20"/><path stroke="#ff0810" d="M1350 126h4M1346 130h28M1346 134h24"/><path stroke="#00ff70" d="M1082 130h4"/><path stroke="#10ff78" d="M1086 130h4"/><path stroke="#18ff78" d="M1090 130h4"/><path stroke="#28ff78" d="M1094 130h4"/><path stroke="#30ff78" d="M1098 130h4"/><path stroke="#40ff78" d="M1102 130h4"/><path stroke="#50ff78" d="M1106 130h4"/><path stroke="#58ff78" d="M1110 130h4"/><path stroke="#68ff78" d="M1114 130h4"/><path stroke="#78ff78" d="M1118 130h4"/><path stroke="#88ff78" d="M1122 130h4"/><path stroke="#98ff78" d="M1126 130h4"/><path stroke="#a8ff78" d="M1130 130h4"/><path stroke="#b8ff78" d="M1134 130h4"/><path stroke="#c8ff80" d="M1138 130h4"/><path stroke="#d8ff80" d="M1142 130h4"/><path stroke="#f0ff80" d="M1146 130h4"/><path stroke="#ffff80" d="M1150 130h4"/><path stroke="#ffe878" d="M1154 130h4"/><path stroke="#ffd870" d="M1158 130h4"/><path stroke="#ffd068" d="M1162 130h4"/><path stroke="#ffc060" d="M1166 130h4"/><path stroke="#ffb060" d="M1170 130h4"/><path stroke="#ffa858" d="M1174 130h4"/><path stroke="#ffa050" d="M1178 130h4"/><path stroke="#ff9850" d="M1182 130h4"/><path stroke="#ff9048" d="M1186 130h4"/><path stroke="#ff8848" d="M1190 130h4"/><path stroke="#ff8040" d="M1194 130h4"/><path stroke="#ff7840" d="M1198 130h4"/><path stroke="#ff7040" d="M1202 130h4"/><path stroke="#ff6838" d="M1206 130h8"/><path stroke="#ff6038" d="M1214 130h4"/><path stroke="#ff5838" d="M1218 130h4M1218 134h8"/><path stroke="#ff5830" d="M1222 130h4"/><path stroke="#ff5030" d="M1226 130h8"/><path stroke="#ff4830" d="M1234 130h4M1234 134h8"/><path stroke="#ff4028" d="M1242 130h8"/><path stroke="#ff3828" d="M1250 130h8M1250 134h12"/><path stroke="#ff3020" d="M1262 130h12"/><path stroke="#ff2820" d="M1274 130h12M1274 134h12"/><path stroke="#ff1818" d="M1306 130h16M1306 134h16"/><path stroke="#ff1018" d="M1322 130h4M1322 134h20M1326 138h12"/><path stroke="#ff0010" d="M1374 130h8M1370 134h20M1370 138h16"/><path stroke="#00ff80" d="M1082 134h4"/><path stroke="#10ff80" d="M1086 134h4"/><path stroke="#18ff80" d="M1090 134h4"/><path stroke="#28ff80" d="M1094 134h4"/><path stroke="#30ff80" d="M1098 134h4"/><path stroke="#40ff80" d="M1102 134h4"/><path stroke="#50ff88" d="M1106 134h4"/><path stroke="#58ff88" d="M1110 134h4"/><path stroke="#68ff88" d="M1114 134h4"/><path stroke="#78ff88" d="M1118 134h4"/><path stroke="#88ff88" d="M1122 134h4"/><path stroke="#98ff88" d="M1126 134h4"/><path stroke="#a8ff88" d="M1130 134h4"/><path stroke="#b8ff88" d="M1134 134h4"/><path stroke="#c8ff88" d="M1138 134h4"/><path stroke="#e0ff90" d="M1142 134h4"/><path stroke="#f0ff90" d="M1146 134h4"/><path stroke="#fff890" d="M1150 134h4"/><path stroke="#ffe880" d="M1154 134h4"/><path stroke="#ffd878" d="M1158 134h4"/><path stroke="#ffc878" d="M1162 134h4"/><path stroke="#ffc070" d="M1166 134h4"/><path stroke="#ffb068" d="M1170 134h4"/><path stroke="#ffa860" d="M1174 134h4"/><path stroke="#ffa060" d="M1178 134h4"/><path stroke="#ff9058" d="M1182 134h4"/><path stroke="#ff8858" d="M1186 134h4"/><path stroke="#ff8050" d="M1190 134h4"/><path stroke="#ff7850" d="M1194 134h4"/><path stroke="#ff7848" d="M1198 134h4"/><path stroke="#ff7048" d="M1202 134h4"/><path stroke="#ff6840" d="M1206 134h4"/><path stroke="#ff6040" d="M1210 134h8"/><path stroke="#ff5038" d="M1226 134h4"/><path stroke="#ff4838" d="M1230 134h4M1230 138h8"/><path stroke="#ff4030" d="M1242 134h8"/><path stroke="#ff3028" d="M1262 134h12M1266 138h4"/><path stroke="#ff2020" d="M1286 134h16M1290 138h8"/><path stroke="#ff1820" d="M1302 134h4M1298 138h20M1310 142h4"/><path stroke="#ff0818" d="M1342 134h4M1338 138h28M1342 142h20"/><path stroke="#00ff90" d="M1082 138h4"/><path stroke="#08ff90" d="M1086 138h4"/><path stroke="#18ff90" d="M1090 138h4"/><path stroke="#20ff90" d="M1094 138h4"/><path stroke="#30ff90" d="M1098 138h4"/><path stroke="#40ff90" d="M1102 138h4"/><path stroke="#48ff90" d="M1106 138h4"/><path stroke="#58ff90" d="M1110 138h4"/><path stroke="#68ff98" d="M1114 138h4"/><path stroke="#78ff98" d="M1118 138h4"/><path stroke="#88ff98" d="M1122 138h4"/><path stroke="#98ff98" d="M1126 138h4"/><path stroke="#a8ff98" d="M1130 138h4"/><path stroke="#b8ff98" d="M1134 138h4"/><path stroke="#c8ff98" d="M1138 138h4"/><path stroke="#e0ffa0" d="M1142 138h4"/><path stroke="#f0ffa0" d="M1146 138h4"/><path stroke="#fff8a0" d="M1150 138h4"/><path stroke="#ffe890" d="M1154 138h4"/><path stroke="#ffd888" d="M1158 138h4"/><path stroke="#ffc880" d="M1162 138h4"/><path stroke="#ffb878" d="M1166 138h4"/><path stroke="#ffb070" d="M1170 138h4"/><path stroke="#ffa870" d="M1174 138h4"/><path stroke="#ff9868" d="M1178 138h4"/><path stroke="#ff9060" d="M1182 138h4"/><path stroke="#ff8860" d="M1186 138h4"/><path stroke="#ff8058" d="M1190 138h4"/><path stroke="#ff7858" d="M1194 138h4"/><path stroke="#ff7050" d="M1198 138h8"/><path stroke="#ff6848" d="M1206 138h4"/><path stroke="#ff6048" d="M1210 138h8"/><path stroke="#ff5840" d="M1218 138h4"/><path stroke="#ff5040" d="M1222 138h8"/><path stroke="#ff4038" d="M1238 138h8M1242 142h4"/><path stroke="#ff3830" d="M1246 138h12"/><path stroke="#ff3030" d="M1258 138h8M1262 142h4"/><path stroke="#ff2828" d="M1270 138h12"/><path stroke="#ff2028" d="M1282 138h8M1282 142h16"/><path stroke="#ff1020" d="M1318 138h8M1314 142h20M1326 146h8"/><path stroke="#ff0018" d="M1366 138h4M1362 142h20M1362 146h16"/><path stroke="#00ff98" d="M1082 142h4"/><path stroke="#08ff98" d="M1086 142h4"/><path stroke="#18ffa0" d="M1090 142h4"/><path stroke="#20ffa0" d="M1094 142h4"/><path stroke="#30ffa0" d="M1098 142h4"/><path stroke="#40ffa0" d="M1102 142h4"/><path stroke="#48ffa0" d="M1106 142h4"/><path stroke="#58ffa0" d="M1110 142h4"/><path stroke="#68ffa0" d="M1114 142h4"/><path stroke="#78ffa8" d="M1118 142h4"/><path stroke="#88ffa8" d="M1122 142h4"/><path stroke="#98ffa8" d="M1126 142h4"/><path stroke="#a8ffa8" d="M1130 142h4"/><path stroke="#b8ffa8" d="M1134 142h4"/><path stroke="#d0ffb0" d="M1138 142h4"/><path stroke="#e0ffb0" d="M1142 142h4"/><path stroke="#f0ffb0" d="M1146 142h4"/><path stroke="#fff8b0" d="M1150 142h4"/><path stroke="#ffe8a0" d="M1154 142h4"/><path stroke="#ffd898" d="M1158 142h4"/><path stroke="#ffc890" d="M1162 142h4"/><path stroke="#ffb888" d="M1166 142h4"/><path stroke="#ffb080" d="M1170 142h4"/><path stroke="#ffa078" d="M1174 142h4"/><path stroke="#ff9870" d="M1178 142h4"/><path stroke="#ff9070" d="M1182 142h4"/><path stroke="#ff8868" d="M1186 142h4"/><path stroke="#ff8060" d="M1190 142h4"/><path stroke="#ff7860" d="M1194 142h4"/><path stroke="#ff7058" d="M1198 142h4"/><path stroke="#ff6858" d="M1202 142h4"/><path stroke="#ff6850" d="M1206 142h4"/><path stroke="#ff6050" d="M1210 142h4"/><path stroke="#ff5850" d="M1214 142h4"/><path stroke="#ff5848" d="M1218 142h4"/><path stroke="#ff5048" d="M1222 142h8"/><path stroke="#ff4840" d="M1230 142h8"/><path stroke="#ff4040" d="M1238 142h4"/><path stroke="#ff3838" d="M1246 142h12"/><path stroke="#ff3038" d="M1258 142h4M1254 146h12"/><path stroke="#ff2830" d="M1266 142h16M1274 146h4"/><path stroke="#ff1828" d="M1298 142h12M1294 146h16"/><path stroke="#ff0820" d="M1334 142h8M1334 146h24M1342 150h12"/><path stroke="#00ffa8" d="M1082 146h4"/><path stroke="#08ffa8" d="M1086 146h4"/><path stroke="#10ffa8" d="M1090 146h4"/><path stroke="#20ffa8" d="M1094 146h4"/><path stroke="#30ffb0" d="M1098 146h4"/><path stroke="#38ffb0" d="M1102 146h4"/><path stroke="#48ffb0" d="M1106 146h4"/><path stroke="#58ffb0" d="M1110 146h4"/><path stroke="#68ffb0" d="M1114 146h4"/><path stroke="#78ffb8" d="M1118 146h4"/><path stroke="#88ffb8" d="M1122 146h4"/><path stroke="#98ffb8" d="M1126 146h4"/><path stroke="#a8ffb8" d="M1130 146h4"/><path stroke="#b8ffb8" d="M1134 146h4"/><path stroke="#d0ffc0" d="M1138 146h4"/><path stroke="#e0ffc0" d="M1142 146h4"/><path stroke="#f8ffc0" d="M1146 146h4"/><path stroke="#fff8c0" d="M1150 146h4"/><path stroke="#ffe0b0" d="M1154 146h4"/><path stroke="#ffd0a8" d="M1158 146h4"/><path stroke="#ffc898" d="M1162 146h4"/><path stroke="#ffb890" d="M1166 146h4"/><path stroke="#ffa888" d="M1170 146h4"/><path stroke="#ffa088" d="M1174 146h4"/><path stroke="#ff9880" d="M1178 146h4"/><path stroke="#ff9078" d="M1182 146h4"/><path stroke="#ff8870" d="M1186 146h4"/><path stroke="#ff8070" d="M1190 146h4"/><path stroke="#ff7868" d="M1194 146h4"/><path stroke="#ff7060" d="M1198 146h4"/><path stroke="#ff6860" d="M1202 146h4"/><path stroke="#ff6058" d="M1206 146h8"/><path stroke="#ff5858" d="M1214 146h4"/><path stroke="#ff5050" d="M1218 146h8"/><path stroke="#ff4848" d="M1226 146h8"/><path stroke="#ff4048" d="M1234 146h8M1238 150h4"/><path stroke="#ff3840" d="M1242 146h12M1250 150h4"/><path stroke="#ff2838" d="M1266 146h8M1266 150h12"/><path stroke="#ff2030" d="M1278 146h16M1286 150h4"/><path stroke="#ff1028" d="M1310 146h16M1310 150h20"/><path stroke="#ff0020" d="M1358 146h4M1354 150h20M1358 154h12"/><path stroke="#00ffb8" d="M1082 150h4"/><path stroke="#08ffb8" d="M1086 150h4"/><path stroke="#10ffb8" d="M1090 150h4"/><path stroke="#20ffb8" d="M1094 150h4"/><path stroke="#30ffb8" d="M1098 150h4"/><path stroke="#38ffc0" d="M1102 150h4"/><path stroke="#48ffc0" d="M1106 150h4"/><path stroke="#58ffc0" d="M1110 150h4"/><path stroke="#68ffc0" d="M1114 150h4"/><path stroke="#78ffc8" d="M1118 150h4"/><path stroke="#88ffc8" d="M1122 150h4"/><path stroke="#98ffc8" d="M1126 150h4"/><path stroke="#a8ffc8" d="M1130 150h4"/><path stroke="#b8ffd0" d="M1134 150h4"/><path stroke="#d0ffd0" d="M1138 150h4"/><path stroke="#e0ffd0" d="M1142 150h4"/><path stroke="#f8ffd0" d="M1146 150h4"/><path stroke="#fff0d0" d="M1150 150h4"/><path stroke="#ffe0c0" d="M1154 150h4"/><path stroke="#ffd0b0" d="M1158 150h4"/><path stroke="#ffc0a8" d="M1162 150h4"/><path stroke="#ffb8a0" d="M1166 150h4"/><path stroke="#ffa898" d="M1170 150h4"/><path stroke="#ffa090" d="M1174 150h4"/><path stroke="#ff9888" d="M1178 150h4"/><path stroke="#ff8880" d="M1182 150h4"/><path stroke="#ff8080" d="M1186 150h4"/><path stroke="#ff7878" d="M1190 150h4"/><path stroke="#ff7870" d="M1194 150h4"/><path stroke="#ff7070" d="M1198 150h4"/><path stroke="#ff6868" d="M1202 150h4"/><path stroke="#ff6068" d="M1206 150h4"/><path stroke="#ff6060" d="M1210 150h4"/><path stroke="#ff5860" d="M1214 150h4"/><path stroke="#ff5058" d="M1218 150h8"/><path stroke="#ff4850" d="M1226 150h8"/><path stroke="#ff4050" d="M1234 150h4M1234 154h8"/><path stroke="#ff3848" d="M1242 150h8M1246 154h4"/><path stroke="#ff3040" d="M1254 150h8"/><path stroke="#ff2840" d="M1262 150h4M1262 154h12"/><path stroke="#ff2038" d="M1278 150h8M1278 154h12"/><path stroke="#ff1830" d="M1290 150h20M1298 154h8"/><path stroke="#ff0828" d="M1330 150h12M1326 154h24M1342 158h4"/><path stroke="#00ffc8" d="M1086 154h4"/><path stroke="#10ffc8" d="M1090 154h4"/><path stroke="#20ffc8" d="M1094 154h4"/><path stroke="#28ffc8" d="M1098 154h4"/><path stroke="#38ffd0" d="M1102 154h4"/><path stroke="#48ffd0" d="M1106 154h4"/><path stroke="#58ffd0" d="M1110 154h4"/><path stroke="#68ffd0" d="M1114 154h4"/><path stroke="#78ffd8" d="M1118 154h4"/><path stroke="#88ffd8" d="M1122 154h4"/><path stroke="#98ffd8" d="M1126 154h4"/><path stroke="#a8ffd8" d="M1130 154h4"/><path stroke="#c0ffe0" d="M1134 154h4"/><path stroke="#d0ffe0" d="M1138 154h4"/><path stroke="#e0ffe0" d="M1142 154h4"/><path stroke="#f8ffe8" d="M1146 154h4"/><path stroke="#fff0e0" d="M1150 154h4"/><path stroke="#ffe0d0" d="M1154 154h4"/><path stroke="#ffd0c0" d="M1158 154h4"/><path stroke="#ffc0b8" d="M1162 154h4"/><path stroke="#ffb0b0" d="M1166 154h4"/><path stroke="#ffa8a0" d="M1170 154h4"/><path stroke="#ffa098" d="M1174 154h4"/><path stroke="#ff9090" d="M1178 154h4"/><path stroke="#ff8890" d="M1182 154h4"/><path stroke="#ff8088" d="M1186 154h4"/><path stroke="#ff7880" d="M1190 154h4"/><path stroke="#ff7078" d="M1194 154h4"/><path stroke="#ff6878" d="M1198 154h4"/><path stroke="#ff6870" d="M1202 154h4"/><path stroke="#ff6070" d="M1206 154h4"/><path stroke="#ff5868" d="M1210 154h8"/><path stroke="#ff5060" d="M1218 154h4"/><path stroke="#ff4860" d="M1222 154h4M1226 158h4"/><path stroke="#ff4858" d="M1226 154h4"/><path stroke="#ff4058" d="M1230 154h4M1234 158h4"/><path stroke="#ff3850" d="M1242 154h4"/><path stroke="#ff3048" d="M1250 154h12"/><path stroke="#ff2040" d="M1274 154h4M1274 158h12"/><path stroke="#ff1838" d="M1290 154h8M1290 158h12"/><path stroke="#ff1030" d="M1306 154h20M1314 158h8"/><path stroke="#ff0028" d="M1350 154h8M1346 158h20M1354 162h8"/><path stroke="#00ffd8" d="M1086 158h4"/><path stroke="#10ffd8" d="M1090 158h4"/><path stroke="#18ffd8" d="M1094 158h4"/><path stroke="#28ffd8" d="M1098 158h4"/><path stroke="#38ffe0" d="M1102 158h4"/><path stroke="#48ffe0" d="M1106 158h4"/><path stroke="#58ffe0" d="M1110 158h4"/><path stroke="#68ffe0" d="M1114 158h4"/><path stroke="#78ffe8" d="M1118 158h4"/><path stroke="#88ffe8" d="M1122 158h4"/><path stroke="#98ffe8" d="M1126 158h4"/><path stroke="#a8fff0" d="M1130 158h4"/><path stroke="#c0fff0" d="M1134 158h4"/><path stroke="#d0fff0" d="M1138 158h4"/><path stroke="#e8fff8" d="M1142 158h4"/><path stroke="#f8fff8" d="M1146 158h4"/><path stroke="#fff0f0" d="M1150 158h4"/><path stroke="#ffe0e0" d="M1154 158h4"/><path stroke="#ffd0d0" d="M1158 158h4"/><path stroke="#ffc0c8" d="M1162 158h4"/><path stroke="#ffb0b8" d="M1166 158h4"/><path stroke="#ffa8b0" d="M1170 158h4"/><path stroke="#ff98a8" d="M1174 158h4"/><path stroke="#ff90a0" d="M1178 158h4"/><path stroke="#ff8898" d="M1182 158h4"/><path stroke="#ff8090" d="M1186 158h4"/><path stroke="#ff7888" d="M1190 158h4"/><path stroke="#ff7088" d="M1194 158h4"/><path stroke="#ff6880" d="M1198 158h4"/><path stroke="#ff6078" d="M1202 158h8"/><path stroke="#ff5870" d="M1210 158h4"/><path stroke="#ff5070" d="M1214 158h4M1218 162h4"/><path stroke="#ff5068" d="M1218 158h4"/><path stroke="#ff4868" d="M1222 158h4M1226 162h4"/><path stroke="#ff4060" d="M1230 158h4M1234 162h4"/><path stroke="#ff3858" d="M1238 158h8M1242 162h4"/><path stroke="#ff3050" d="M1246 158h12M1254 162h4"/><path stroke="#ff2848" d="M1258 158h12"/><path stroke="#ff2048" d="M1270 158h4M1270 162h12M1278 166h4"/><path stroke="#ff1840" d="M1286 158h4M1286 162h12M1294 166h4"/><path stroke="#ff1038" d="M1302 158h12M1302 162h16M1314 166h4"/><path stroke="#ff0830" d="M1322 158h20M1326 162h16"/><path stroke="#00ffe0" d="M1086 162h4"/><path stroke="#08ffe8" d="M1090 162h4"/><path stroke="#18ffe8" d="M1094 162h4"/><path stroke="#28ffe8" d="M1098 162h4"/><path stroke="#38fff0" d="M1102 162h4"/><path stroke="#48fff0" d="M1106 162h4"/><path stroke="#58fff0" d="M1110 162h4"/><path stroke="#68fff8" d="M1114 162h4"/><path stroke="#78fff8" d="M1118 162h4"/><path stroke="#88fff8" d="M1122 162h4"/><path stroke="#98ffff" d="M1126 162h4"/><path stroke="#a8ffff" d="M1130 162h4"/><path stroke="#b8f8ff" d="M1134 162h4"/><path stroke="#c8f8ff" d="M1138 162h4"/><path stroke="#d8f0ff" d="M1142 162h4"/><path stroke="#f0f0ff" d="M1146 162h4"/><path stroke="#fff0ff" d="M1150 162h4"/><path stroke="#ffd8f0" d="M1154 162h4"/><path stroke="#ffc8e0" d="M1158 162h4"/><path stroke="#ffc0d0" d="M1162 162h4"/><path stroke="#ffb0c8" d="M1166 162h4"/><path stroke="#ffa0c0" d="M1170 162h4"/><path stroke="#ff98b0" d="M1174 162h4"/><path stroke="#ff90a8" d="M1178 162h4"/><path stroke="#ff88a0" d="M1182 162h4"/><path stroke="#ff8098" d="M1186 162h4"/><path stroke="#ff7898" d="M1190 162h4"/><path stroke="#ff7090" d="M1194 162h4"/><path stroke="#ff6888" d="M1198 162h4"/><path stroke="#ff6080" d="M1202 162h4"/><path stroke="#ff5880" d="M1206 162h4M1210 166h4"/><path stroke="#ff5878" d="M1210 162h4"/><path stroke="#ff5078" d="M1214 162h4"/><path stroke="#ff4870" d="M1222 162h4M1222 166h4"/><path stroke="#ff4068" d="M1230 162h4M1230 166h4"/><path stroke="#ff3860" d="M1238 162h4"/><path stroke="#ff3058" d="M1246 162h8M1250 166h4"/><path stroke="#ff2850" d="M1258 162h12"/><path stroke="#ff1848" d="M1282 162h4M1282 166h12M1290 170h4"/><path stroke="#ff1040" d="M1298 162h4M1298 166h16M1306 170h8"/><path stroke="#ff0838" d="M1318 162h8M1318 166h20M1326 170h8"/><path stroke="#ff0030" d="M1342 162h12M1338 166h20"/><path stroke="#00fff0" d="M1086 166h4"/><path stroke="#08fff8" d="M1090 166h4"/><path stroke="#18fff8" d="M1094 166h4"/><path stroke="#28fff8" d="M1098 166h4"/><path stroke="#38ffff" d="M1102 166h4"/><path stroke="#40ffff" d="M1106 166h4"/><path stroke="#50f8ff" d="M1110 166h4"/><path stroke="#60f8ff" d="M1114 166h4"/><path stroke="#70f8ff" d="M1118 166h4"/><path stroke="#80f0ff" d="M1122 166h4"/><path stroke="#90f0ff" d="M1126 166h4"/><path stroke="#a0e8ff" d="M1130 166h4"/><path stroke="#b0e8ff" d="M1134 166h4"/><path stroke="#c0e8ff" d="M1138 166h4"/><path stroke="#d0e0ff" d="M1142 166h4"/><path stroke="#e0e0ff" d="M1146 166h4"/><path stroke="#f0d8ff" d="M1150 166h4"/><path stroke="#ffd8ff" d="M1154 166h4"/><path stroke="#ffc8f0" d="M1158 166h4"/><path stroke="#ffb8e0" d="M1162 166h4"/><path stroke="#ffb0d8" d="M1166 166h4"/><path stroke="#ffa0c8" d="M1170 166h4"/><path stroke="#ff98c0" d="M1174 166h4"/><path stroke="#ff90b8" d="M1178 166h4"/><path stroke="#ff80b0" d="M1182 166h4"/><path stroke="#ff78a8" d="M1186 166h4"/><path stroke="#ff70a0" d="M1190 166h4"/><path stroke="#ff7098" d="M1194 166h4"/><path stroke="#ff6890" d="M1198 166h4"/><path stroke="#ff6088" d="M1202 166h4"/><path stroke="#ff5888" d="M1206 166h4"/><path stroke="#ff5080" d="M1214 166h4"/><path stroke="#ff4878" d="M1218 166h4M1222 170h4"/><path stroke="#ff4070" d="M1226 166h4M1230 170h4"/><path stroke="#ff3868" d="M1234 166h8M1238 170h4"/><path stroke="#ff3060" d="M1242 166h8M1250 170h4"/><path stroke="#ff2858" d="M1254 166h12M1262 170h4"/><path stroke="#ff2050" d="M1266 166h12M1274 170h4"/><path stroke="#00f8ff" d="M1086 170h4"/><path stroke="#08f8ff" d="M1090 170h4"/><path stroke="#18f8ff" d="M1094 170h4"/><path stroke="#20f0ff" d="M1098 170h4"/><path stroke="#30f0ff" d="M1102 170h4"/><path stroke="#40f0ff" d="M1106 170h4"/><path stroke="#48e8ff" d="M1110 170h4"/><path stroke="#58e8ff" d="M1114 170h4"/><path stroke="#68e8ff" d="M1118 170h4"/><path stroke="#78e0ff" d="M1122 170h4"/><path stroke="#88e0ff" d="M1126 170h4"/><path stroke="#90d8ff" d="M1130 170h4"/><path stroke="#a0d8ff" d="M1134 170h4"/><path stroke="#b0d8ff" d="M1138 170h4"/><path stroke="#c0d0ff" d="M1142 170h4"/><path stroke="#d0d0ff" d="M1146 170h4"/><path stroke="#e0d0ff" d="M1150 170h4"/><path stroke="#f0c8ff" d="M1154 170h4"/><path stroke="#ffc8ff" d="M1158 170h4"/><path stroke="#ffb8f0" d="M1162 170h4"/><path stroke="#ffa8e0" d="M1166 170h4"/><path stroke="#ffa0d8" d="M1170 170h4"/><path stroke="#ff90d0" d="M1174 170h4"/><path stroke="#ff88c0" d="M1178 170h4"/><path stroke="#ff80b8" d="M1182 170h4"/><path stroke="#ff78b0" d="M1186 170h4"/><path stroke="#ff70a8" d="M1190 170h4"/><path stroke="#ff68a0" d="M1194 170h4"/><path stroke="#ff6098" d="M1198 170h8"/><path stroke="#ff5890" d="M1206 170h4"/><path stroke="#ff5088" d="M1210 170h8"/><path stroke="#ff4880" d="M1218 170h4"/><path stroke="#ff4078" d="M1226 170h4"/><path stroke="#ff3870" d="M1234 170h4"/><path stroke="#ff3068" d="M1242 170h8M1246 174h4"/><path stroke="#ff2860" d="M1254 170h8M1258 174h4"/><path stroke="#ff2058" d="M1266 170h8M1270 174h4"/><path stroke="#ff1850" d="M1278 170h12M1282 174h8"/><path stroke="#ff1048" d="M1294 170h12M1298 174h12"/><path stroke="#ff0840" d="M1314 170h12M1318 174h16"/><path stroke="#ff0038" d="M1334 170h20M1338 174h12"/><path stroke="#00e8ff" d="M1086 174h4"/><path stroke="#08e8ff" d="M1090 174h4"/><path stroke="#10e8ff" d="M1094 174h4"/><path stroke="#20e0ff" d="M1098 174h4"/><path stroke="#28e0ff" d="M1102 174h4"/><path stroke="#38e0ff" d="M1106 174h4"/><path stroke="#48d8ff" d="M1110 174h4"/><path stroke="#50d8ff" d="M1114 174h4"/><path stroke="#60d8ff" d="M1118 174h4"/><path stroke="#70d0ff" d="M1122 174h4"/><path stroke="#80d0ff" d="M1126 174h4"/><path stroke="#88d0ff" d="M1130 174h4"/><path stroke="#98c8ff" d="M1134 174h4"/><path stroke="#a8c8ff" d="M1138 174h4"/><path stroke="#b8c8ff" d="M1142 174h4"/><path stroke="#c0c0ff" d="M1146 174h4"/><path stroke="#d0c0ff" d="M1150 174h4"/><path stroke="#e0b8ff" d="M1154 174h4"/><path stroke="#f0b8ff" d="M1158 174h4"/><path stroke="#ffb8ff" d="M1162 174h4"/><path stroke="#ffa8f0" d="M1166 174h4"/><path stroke="#ffa0e8" d="M1170 174h4"/><path stroke="#ff90d8" d="M1174 174h4"/><path stroke="#ff88d0" d="M1178 174h4"/><path stroke="#ff80c8" d="M1182 174h4"/><path stroke="#ff78b8" d="M1186 174h4"/><path stroke="#ff70b0" d="M1190 174h4"/><path stroke="#ff68a8" d="M1194 174h4"/><path stroke="#ff60a8" d="M1198 174h4"/><path stroke="#ff58a0" d="M1202 174h4"/><path stroke="#ff5898" d="M1206 174h4"/><path stroke="#ff5090" d="M1210 174h4"/><path stroke="#ff4890" d="M1214 174h4M1218 178h4"/><path stroke="#ff4888" d="M1218 174h4"/><path stroke="#ff4080" d="M1222 174h8"/><path stroke="#ff3878" d="M1230 174h8"/><path stroke="#ff3070" d="M1238 174h8"/><path stroke="#ff2868" d="M1250 174h8M1254 178h4"/><path stroke="#ff2060" d="M1262 174h8M1266 178h8"/><path stroke="#ff1858" d="M1274 174h8M1278 178h8"/><path stroke="#ff1050" d="M1290 174h8M1294 178h12"/><path stroke="#ff0848" d="M1310 174h8M1310 178h20M1318 182h8"/><path stroke="#ff0040" d="M1334 174h4M1330 178h16M1338 182h4"/><path stroke="#00d8ff" d="M1090 178h4"/><path stroke="#10d8ff" d="M1094 178h4"/><path stroke="#18d8ff" d="M1098 178h4"/><path stroke="#28d0ff" d="M1102 178h4"/><path stroke="#38d0ff" d="M1106 178h4"/><path stroke="#40d0ff" d="M1110 178h4"/><path stroke="#50c8ff" d="M1114 178h4"/><path stroke="#58c8ff" d="M1118 178h4"/><path stroke="#68c8ff" d="M1122 178h4"/><path stroke="#78c0ff" d="M1126 178h4"/><path stroke="#80c0ff" d="M1130 178h4"/><path stroke="#90c0ff" d="M1134 178h4"/><path stroke="#a0b8ff" d="M1138 178h4"/><path stroke="#a8b8ff" d="M1142 178h4"/><path stroke="#b8b8ff" d="M1146 178h4"/><path stroke="#c8b0ff" d="M1150 178h4"/><path stroke="#d0b0ff" d="M1154 178h4"/><path stroke="#e0a8ff" d="M1158 178h4"/><path stroke="#f0a8ff" d="M1162 178h4"/><path stroke="#ffa8ff" d="M1166 178h4"/><path stroke="#ff98f0" d="M1170 178h4"/><path stroke="#ff90e8" d="M1174 178h4"/><path stroke="#ff88d8" d="M1178 178h4"/><path stroke="#ff80d0" d="M1182 178h4"/><path stroke="#ff78c8" d="M1186 178h4"/><path stroke="#ff70c0" d="M1190 178h4"/><path stroke="#ff68b8" d="M1194 178h4"/><path stroke="#ff60b0" d="M1198 178h4"/><path stroke="#ff58a8" d="M1202 178h4"/><path stroke="#ff50a0" d="M1206 178h4M1210 182h4"/><path stroke="#ff5098" d="M1210 178h4"/><path stroke="#ff4898" d="M1214 178h4"/><path stroke="#ff4088" d="M1222 178h8"/><path stroke="#ff3880" d="M1230 178h8"/><path stroke="#ff3078" d="M1238 178h8"/><path stroke="#ff2870" d="M1246 178h8M1254 182h4"/><path stroke="#ff2068" d="M1258 178h8M1262 182h8"/><path stroke="#ff1860" d="M1274 178h4M1274 182h12"/><path stroke="#ff1058" d="M1286 178h8M1286 182h16"/><path stroke="#ff0850" d="M1306 178h4M1302 182h16M1310 186h12"/><path stroke="#00d0ff" d="M1090 182h4"/><path stroke="#10c8ff" d="M1094 182h4"/><path stroke="#18c8ff" d="M1098 182h4"/><path stroke="#28c8ff" d="M1102 182h4"/><path stroke="#30c0ff" d="M1106 182h4"/><path stroke="#40c0ff" d="M1110 182h4"/><path stroke="#48c0ff" d="M1114 182h4"/><path stroke="#58c0ff" d="M1118 182h4"/><path stroke="#60b8ff" d="M1122 182h4"/><path stroke="#70b8ff" d="M1126 182h4"/><path stroke="#78b0ff" d="M1130 182h4"/><path stroke="#88b0ff" d="M1134 182h4"/><path stroke="#90b0ff" d="M1138 182h4"/><path stroke="#a0a8ff" d="M1142 182h4"/><path stroke="#b0a8ff" d="M1146 182h4"/><path stroke="#b8a8ff" d="M1150 182h4"/><path stroke="#c8a0ff" d="M1154 182h4"/><path stroke="#d8a0ff" d="M1158 182h4"/><path stroke="#e0a0ff" d="M1162 182h4"/><path stroke="#f098ff" d="M1166 182h4"/><path stroke="#ff98ff" d="M1170 182h4"/><path stroke="#ff90f0" d="M1174 182h4"/><path stroke="#ff80e8" d="M1178 182h4"/><path stroke="#ff78d8" d="M1182 182h4"/><path stroke="#ff70d0" d="M1186 182h4"/><path stroke="#ff68c8" d="M1190 182h4"/><path stroke="#ff60c0" d="M1194 182h4"/><path stroke="#ff60b8" d="M1198 182h4"/><path stroke="#ff58b0" d="M1202 182h4"/><path stroke="#ff50a8" d="M1206 182h4"/><path stroke="#ff48a0" d="M1214 182h4"/><path stroke="#ff4098" d="M1218 182h4M1222 186h4"/><path stroke="#ff4090" d="M1222 182h4"/><path stroke="#ff3890" d="M1226 182h4M1230 186h4"/><path stroke="#ff3888" d="M1230 182h4"/><path stroke="#ff3088" d="M1234 182h4M1234 186h8"/><path stroke="#ff3080" d="M1238 182h8"/><path stroke="#ff2878" d="M1246 182h8M1250 186h4"/><path stroke="#ff2070" d="M1258 182h4M1262 186h4"/><path stroke="#ff1868" d="M1270 182h4M1270 186h12"/><path stroke="#ff0048" d="M1326 182h12M1330 186h8"/><path stroke="#00c0ff" d="M1090 186h4"/><path stroke="#08c0ff" d="M1094 186h4"/><path stroke="#18c0ff" d="M1098 186h4"/><path stroke="#20b8ff" d="M1102 186h4"/><path stroke="#30b8ff" d="M1106 186h4"/><path stroke="#38b8ff" d="M1110 186h4"/><path stroke="#40b0ff" d="M1114 186h4"/><path stroke="#50b0ff" d="M1118 186h4"/><path stroke="#58b0ff" d="M1122 186h4"/><path stroke="#68a8ff" d="M1126 186h4"/><path stroke="#70a8ff" d="M1130 186h4"/><path stroke="#80a8ff" d="M1134 186h4"/><path stroke="#88a0ff" d="M1138 186h4"/><path stroke="#98a0ff" d="M1142 186h4"/><path stroke="#a8a0ff" d="M1146 186h4"/><path stroke="#b098ff" d="M1150 186h4"/><path stroke="#c098ff" d="M1154 186h4"/><path stroke="#c898ff" d="M1158 186h4"/><path stroke="#d890ff" d="M1162 186h4"/><path stroke="#e090ff" d="M1166 186h4"/><path stroke="#f090ff" d="M1170 186h4"/><path stroke="#ff88ff" d="M1174 186h4"/><path stroke="#ff80f0" d="M1178 186h4"/><path stroke="#ff78e8" d="M1182 186h4"/><path stroke="#ff70e0" d="M1186 186h4"/><path stroke="#ff68d0" d="M1190 186h4"/><path stroke="#ff60c8" d="M1194 186h4"/><path stroke="#ff58c0" d="M1198 186h4"/><path stroke="#ff58b8" d="M1202 186h4"/><path stroke="#ff50b0" d="M1206 186h4"/><path stroke="#ff48b0" d="M1210 186h4M1214 190h4"/><path stroke="#ff48a8" d="M1214 186h4"/><path stroke="#ff40a0" d="M1218 186h4"/><path stroke="#ff3898" d="M1226 186h4"/><path stroke="#ff2880" d="M1242 186h8"/><path stroke="#ff2078" d="M1254 186h8M1258 190h8"/><path stroke="#ff1870" d="M1266 186h4M1270 190h8M1274 194h4"/><path stroke="#ff1060" d="M1282 186h16M1290 190h8"/><path stroke="#ff0858" d="M1298 186h12M1306 190h12"/><path stroke="#ff0050" d="M1322 186h8M1322 190h12"/><path stroke="#00b8ff" d="M1090 190h4"/><path stroke="#08b8ff" d="M1094 190h4"/><path stroke="#10b0ff" d="M1098 190h4"/><path stroke="#20b0ff" d="M1102 190h4"/><path stroke="#28b0ff" d="M1106 190h4"/><path stroke="#30a8ff" d="M1110 190h4"/><path stroke="#40a8ff" d="M1114 190h4"/><path stroke="#48a8ff" d="M1118 190h4"/><path stroke="#58a8ff" d="M1122 190h4"/><path stroke="#60a0ff" d="M1126 190h4"/><path stroke="#70a0ff" d="M1130 190h4"/><path stroke="#78a0ff" d="M1134 190h4"/><path stroke="#8098ff" d="M1138 190h4"/><path stroke="#9098ff" d="M1142 190h4"/><path stroke="#9898ff" d="M1146 190h4"/><path stroke="#a890ff" d="M1150 190h4"/><path stroke="#b090ff" d="M1154 190h4"/><path stroke="#c090ff" d="M1158 190h4"/><path stroke="#c888ff" d="M1162 190h4"/><path stroke="#d888ff" d="M1166 190h4"/><path stroke="#e880ff" d="M1170 190h4"/><path stroke="#f080ff" d="M1174 190h4"/><path stroke="#ff80ff" d="M1178 190h4"/><path stroke="#ff78f0" d="M1182 190h4"/><path stroke="#ff70e8" d="M1186 190h4"/><path stroke="#ff68e0" d="M1190 190h4"/><path stroke="#ff60d8" d="M1194 190h4"/><path stroke="#ff58d0" d="M1198 190h4"/><path stroke="#ff50c0" d="M1202 190h8"/><path stroke="#ff48b8" d="M1210 190h4"/><path stroke="#ff40a8" d="M1218 190h4"/><path stroke="#ff38a0" d="M1222 190h8"/><path stroke="#ff3098" d="M1230 190h4M1234 194h4"/><path stroke="#ff3090" d="M1234 190h8"/><path stroke="#ff2888" d="M1242 190h8"/><path stroke="#ff2080" d="M1250 190h8M1258 194h4"/><path stroke="#ff1878" d="M1266 190h4M1266 194h8"/><path stroke="#ff1068" d="M1278 190h12M1286 194h8"/><path stroke="#ff0860" d="M1298 190h8M1298 194h16M1306 198h4"/><path stroke="#ff0058" d="M1318 190h4M1314 194h16M1322 198h4"/><path stroke="#00b0ff" d="M1090 194h4"/><path stroke="#08a8ff" d="M1094 194h4"/><path stroke="#10a8ff" d="M1098 194h4"/><path stroke="#18a8ff" d="M1102 194h4"/><path stroke="#28a8ff" d="M1106 194h4"/><path stroke="#30a0ff" d="M1110 194h4"/><path stroke="#38a0ff" d="M1114 194h4"/><path stroke="#48a0ff" d="M1118 194h4"/><path stroke="#5098ff" d="M1122 194h4"/><path stroke="#5898ff" d="M1126 194h4"/><path stroke="#6898ff" d="M1130 194h4"/><path stroke="#7090ff" d="M1134 194h4"/><path stroke="#8090ff" d="M1138 194h4"/><path stroke="#8890ff" d="M1142 194h4"/><path stroke="#9088ff" d="M1146 194h4"/><path stroke="#a088ff" d="M1150 194h4"/><path stroke="#a888ff" d="M1154 194h4"/><path stroke="#b880ff" d="M1158 194h4"/><path stroke="#c080ff" d="M1162 194h4"/><path stroke="#d080ff" d="M1166 194h4"/><path stroke="#d878ff" d="M1170 194h4"/><path stroke="#e878ff" d="M1174 194h4"/><path stroke="#f078ff" d="M1178 194h4"/><path stroke="#ff70ff" d="M1182 194h4"/><path stroke="#ff68f8" d="M1186 194h4"/><path stroke="#ff68e8" d="M1190 194h4"/><path stroke="#ff60e0" d="M1194 194h4"/><path stroke="#ff58d8" d="M1198 194h4"/><path stroke="#ff50d0" d="M1202 194h4"/><path stroke="#ff48c8" d="M1206 194h4M1210 198h4"/><path stroke="#ff48c0" d="M1210 194h4"/><path stroke="#ff40b8" d="M1214 194h4"/><path stroke="#ff40b0" d="M1218 194h4"/><path stroke="#ff38a8" d="M1222 194h8"/><path stroke="#ff30a0" d="M1230 194h4M1234 198h4"/><path stroke="#ff2898" d="M1238 194h4M1242 198h4"/><path stroke="#ff2890" d="M1242 194h8"/><path stroke="#ff2088" d="M1250 194h8M1254 198h4"/><path stroke="#ff1880" d="M1262 194h4M1262 198h12"/><path stroke="#ff1070" d="M1278 194h8M1282 198h8"/><path stroke="#ff0868" d="M1294 194h4M1294 198h12M1302 202h4"/><path stroke="#00a8ff" d="M1090 198h4"/><path stroke="#08a0ff" d="M1094 198h4"/><path stroke="#10a0ff" d="M1098 198h4"/><path stroke="#18a0ff" d="M1102 198h4"/><path stroke="#2098ff" d="M1106 198h4"/><path stroke="#3098ff" d="M1110 198h4"/><path stroke="#3898ff" d="M1114 198h4"/><path stroke="#4098ff" d="M1118 198h4"/><path stroke="#4890ff" d="M1122 198h4"/><path stroke="#5890ff" d="M1126 198h4"/><path stroke="#6090ff" d="M1130 198h4"/><path stroke="#6888ff" d="M1134 198h4"/><path stroke="#7888ff" d="M1138 198h4"/><path stroke="#8088ff" d="M1142 198h4"/><path stroke="#9080ff" d="M1146 198h4"/><path stroke="#9880ff" d="M1150 198h4"/><path stroke="#a080ff" d="M1154 198h4"/><path stroke="#b078ff" d="M1158 198h4"/><path stroke="#b878ff" d="M1162 198h4"/><path stroke="#c878ff" d="M1166 198h4"/><path stroke="#d070ff" d="M1170 198h4"/><path stroke="#d870ff" d="M1174 198h4"/><path stroke="#e870ff" d="M1178 198h4"/><path stroke="#f068ff" d="M1182 198h4"/><path stroke="#ff68ff" d="M1186 198h4"/><path stroke="#ff60f8" d="M1190 198h4"/><path stroke="#ff58e8" d="M1194 198h4"/><path stroke="#ff58e0" d="M1198 198h4"/><path stroke="#ff50d8" d="M1202 198h4"/><path stroke="#ff48d0" d="M1206 198h4"/><path stroke="#ff40c0" d="M1214 198h4"/><path stroke="#ff38b8" d="M1218 198h4M1222 202h4"/><path stroke="#ff38b0" d="M1222 198h4"/><path stroke="#ff30b0" d="M1226 198h4M1230 202h4"/><path stroke="#ff30a8" d="M1230 198h4"/><path stroke="#ff28a0" d="M1238 198h4M1242 202h4"/><path stroke="#ff2090" d="M1246 198h8M1254 202h4"/><path stroke="#ff1888" d="M1258 198h4M1262 202h8"/><path stroke="#ff1078" d="M1274 198h8M1278 202h8"/><path stroke="#ff0870" d="M1290 198h4M1290 202h12M1298 206h4"/><path stroke="#ff0060" d="M1310 198h12M1318 202h4"/><path stroke="#00a0ff" d="M1090 202h4"/><path stroke="#0098ff" d="M1094 202h4"/><path stroke="#1098ff" d="M1098 202h4"/><path stroke="#1898ff" d="M1102 202h4"/><path stroke="#2090ff" d="M1106 202h4"/><path stroke="#2890ff" d="M1110 202h4"/><path stroke="#3090ff" d="M1114 202h4"/><path stroke="#4090ff" d="M1118 202h4"/><path stroke="#4888ff" d="M1122 202h4"/><path stroke="#5088ff" d="M1126 202h4"/><path stroke="#5888ff" d="M1130 202h4"/><path stroke="#6880ff" d="M1134 202h4"/><path stroke="#7080ff" d="M1138 202h4"/><path stroke="#7880ff" d="M1142 202h4"/><path stroke="#8878ff" d="M1146 202h4"/><path stroke="#9078ff" d="M1150 202h4"/><path stroke="#9878ff" d="M1154 202h4"/><path stroke="#a870ff" d="M1158 202h4"/><path stroke="#b070ff" d="M1162 202h4"/><path stroke="#b870ff" d="M1166 202h4"/><path stroke="#c870ff" d="M1170 202h4"/><path stroke="#d068ff" d="M1174 202h4"/><path stroke="#e068ff" d="M1178 202h4"/><path stroke="#e868ff" d="M1182 202h4"/><path stroke="#f060ff" d="M1186 202h4"/><path stroke="#ff60ff" d="M1190 202h4"/><path stroke="#ff58f8" d="M1194 202h4"/><path stroke="#ff50e8" d="M1198 202h4"/><path stroke="#ff50e0" d="M1202 202h4"/><path stroke="#ff48d8" d="M1206 202h4"/><path stroke="#ff40d0" d="M1210 202h4"/><path stroke="#ff40c8" d="M1214 202h4"/><path stroke="#ff38c0" d="M1218 202h4"/><path stroke="#ff30b8" d="M1226 202h4M1230 206h4"/><path stroke="#ff28a8" d="M1234 202h8M1238 206h4"/><path stroke="#ff2098" d="M1246 202h8"/><path stroke="#ff1890" d="M1258 202h4M1258 206h8"/><path stroke="#ff1080" d="M1270 202h8M1278 206h4"/><path stroke="#ff0878" d="M1286 202h4M1286 206h12M1294 210h4"/><path stroke="#ff0068" d="M1306 202h12M1310 206h8"/><path stroke="#0090ff" d="M1094 206h4"/><path stroke="#0890ff" d="M1098 206h4"/><path stroke="#1090ff" d="M1102 206h4"/><path stroke="#2088ff" d="M1106 206h4"/><path stroke="#2888ff" d="M1110 206h4"/><path stroke="#3088ff" d="M1114 206h4"/><path stroke="#3888ff" d="M1118 206h4"/><path stroke="#4080ff" d="M1122 206h4"/><path stroke="#5080ff" d="M1126 206h4"/><path stroke="#5880ff" d="M1130 206h4"/><path stroke="#6078ff" d="M1134 206h4M1134 210h4"/><path stroke="#6878ff" d="M1138 206h4"/><path stroke="#7878ff" d="M1142 206h4"/><path stroke="#8078ff" d="M1146 206h4"/><path stroke="#8870ff" d="M1150 206h4"/><path stroke="#9070ff" d="M1154 206h4"/><path stroke="#a070ff" d="M1158 206h4"/><path stroke="#a868ff" d="M1162 206h4"/><path stroke="#b068ff" d="M1166 206h4"/><path stroke="#c068ff" d="M1170 206h4"/><path stroke="#c860ff" d="M1174 206h4"/><path stroke="#d060ff" d="M1178 206h4"/><path stroke="#e060ff" d="M1182 206h4"/><path stroke="#e858ff" d="M1186 206h4"/><path stroke="#f058ff" d="M1190 206h4"/><path stroke="#ff58ff" d="M1194 206h4"/><path stroke="#ff50f8" d="M1198 206h4"/><path stroke="#ff48e8" d="M1202 206h4"/><path stroke="#ff48e0" d="M1206 206h4"/><path stroke="#ff40d8" d="M1210 206h4"/><path stroke="#ff38d0" d="M1214 206h4M1218 210h4"/><path stroke="#ff38c8" d="M1218 206h4"/><path stroke="#ff30c0" d="M1222 206h8"/><path stroke="#ff28b0" d="M1234 206h4"/><path stroke="#ff20a8" d="M1242 206h4M1246 210h4"/><path stroke="#ff20a0" d="M1246 206h8"/><path stroke="#ff1898" d="M1254 206h4M1258 210h8"/><path stroke="#ff1088" d="M1266 206h12M1274 210h8"/><path stroke="#ff0880" d="M1282 206h4M1282 210h12M1290 214h4"/><path stroke="#ff0070" d="M1302 206h8M1306 210h8"/><path stroke="#0088ff" d="M1094 210h4M1094 214h4"/><path stroke="#0888ff" d="M1098 210h4"/><path stroke="#1088ff" d="M1102 210h4"/><path stroke="#1888ff" d="M1106 210h4"/><path stroke="#2080ff" d="M1110 210h4"/><path stroke="#3080ff" d="M1114 210h4"/><path stroke="#3880ff" d="M1118 210h4"/><path stroke="#4078ff" d="M1122 210h4M1122 214h4"/><path stroke="#4878ff" d="M1126 210h4"/><path stroke="#5078ff" d="M1130 210h4"/><path stroke="#6870ff" d="M1138 210h4"/><path stroke="#7070ff" d="M1142 210h4"/><path stroke="#7870ff" d="M1146 210h4"/><path stroke="#8068ff" d="M1150 210h4M1150 214h4"/><path stroke="#9068ff" d="M1154 210h4"/><path stroke="#9868ff" d="M1158 210h4"/><path stroke="#a068ff" d="M1162 210h4"/><path stroke="#a860ff" d="M1166 210h4"/><path stroke="#b860ff" d="M1170 210h4"/><path stroke="#c060ff" d="M1174 210h4"/><path stroke="#c858ff" d="M1178 210h4"/><path stroke="#d058ff" d="M1182 210h4"/><path stroke="#e058ff" d="M1186 210h4"/><path stroke="#e850ff" d="M1190 210h4"/><path stroke="#f050ff" d="M1194 210h4"/><path stroke="#ff50ff" d="M1198 210h4"/><path stroke="#ff48f8" d="M1202 210h4"/><path stroke="#ff40f0" d="M1206 210h4M1210 214h4"/><path stroke="#ff40e0" d="M1210 210h4"/><path stroke="#ff38d8" d="M1214 210h4"/><path stroke="#ff30c8" d="M1222 210h8"/><path stroke="#ff28c0" d="M1230 210h4M1234 214h4"/><path stroke="#ff28b8" d="M1234 210h4"/><path stroke="#ff20b0" d="M1238 210h8M1246 214h4"/><path stroke="#ff18a0" d="M1250 210h8M1258 214h4"/><path stroke="#ff1090" d="M1266 210h8M1274 214h4"/><path stroke="#ff0078" d="M1298 210h8M1302 214h8"/><path stroke="#0880ff" d="M1098 214h4"/><path stroke="#1080ff" d="M1102 214h4"/><path stroke="#1880ff" d="M1106 214h4"/><path stroke="#2078ff" d="M1110 214h4M1110 218h4"/><path stroke="#2878ff" d="M1114 214h4"/><path stroke="#3078ff" d="M1118 214h4"/><path stroke="#4870ff" d="M1126 214h4"/><path stroke="#5070ff" d="M1130 214h4"/><path stroke="#5870ff" d="M1134 214h4"/><path stroke="#6068ff" d="M1138 214h4M1138 218h4"/><path stroke="#6868ff" d="M1142 214h4"/><path stroke="#7068ff" d="M1146 214h4"/><path stroke="#8860ff" d="M1154 214h4"/><path stroke="#9060ff" d="M1158 214h4"/><path stroke="#9860ff" d="M1162 214h4"/><path stroke="#a058ff" d="M1166 214h4M1166 218h4"/><path stroke="#b058ff" d="M1170 214h4"/><path stroke="#b858ff" d="M1174 214h4"/><path stroke="#c058ff" d="M1178 214h4"/><path stroke="#c850ff" d="M1182 214h4"/><path stroke="#d850ff" d="M1186 214h4"/><path stroke="#e050ff" d="M1190 214h4"/><path stroke="#e848ff" d="M1194 214h4"/><path stroke="#f048ff" d="M1198 214h4"/><path stroke="#ff48ff" d="M1202 214h4"/><path stroke="#ff40f8" d="M1206 214h4"/><path stroke="#ff38e8" d="M1214 214h4"/><path stroke="#ff30e0" d="M1218 214h4M1222 218h4"/><path stroke="#ff30d8" d="M1222 214h4"/><path stroke="#ff28d0" d="M1226 214h4M1230 218h4"/><path stroke="#ff28c8" d="M1230 214h4"/><path stroke="#ff20b8" d="M1238 214h8M1242 218h4"/><path stroke="#ff18a8" d="M1250 214h8M1254 218h4"/><path stroke="#ff10a0" d="M1262 214h4M1262 218h8"/><path stroke="#ff1098" d="M1266 214h8M1270 218h4"/><path stroke="#ff0890" d="M1278 214h4M1278 218h8"/><path stroke="#ff0888" d="M1282 214h8M1286 218h4"/><path stroke="#ff0080" d="M1294 214h8M1298 218h8"/><path stroke="#0080ff" d="M1094 218h4"/><path stroke="#0878ff" d="M1098 218h4"/><path stroke="#1078ff" d="M1102 218h4"/><path stroke="#1878ff" d="M1106 218h4"/><path stroke="#2870ff" d="M1114 218h4M1114 222h4"/><path stroke="#3070ff" d="M1118 218h4"/><path stroke="#3870ff" d="M1122 218h4"/><path stroke="#4070ff" d="M1126 218h4"/><path stroke="#4868ff" d="M1130 218h4M1130 222h4"/><path stroke="#5068ff" d="M1134 218h4"/><path stroke="#6860ff" d="M1142 218h4M1146 222h4"/><path stroke="#7060ff" d="M1146 218h4"/><path stroke="#7860ff" d="M1150 218h4"/><path stroke="#8060ff" d="M1154 218h4"/><path stroke="#8858ff" d="M1158 218h4M1158 222h4"/><path stroke="#9058ff" d="M1162 218h4"/><path stroke="#a850ff" d="M1170 218h4M1174 222h4"/><path stroke="#b050ff" d="M1174 218h4"/><path stroke="#b850ff" d="M1178 218h4"/><path stroke="#c050ff" d="M1182 218h4"/><path stroke="#d048ff" d="M1186 218h4"/><path stroke="#d848ff" d="M1190 218h4"/><path stroke="#e048ff" d="M1194 218h4"/><path stroke="#e840ff" d="M1198 218h4M1202 222h4"/><path stroke="#f040ff" d="M1202 218h4"/><path stroke="#ff40ff" d="M1206 218h4"/><path stroke="#ff38f8" d="M1210 218h4"/><path stroke="#ff38f0" d="M1214 218h4"/><path stroke="#ff30e8" d="M1218 218h4"/><path stroke="#ff28d8" d="M1226 218h4M1230 222h4"/><path stroke="#ff20c8" d="M1234 218h4M1238 222h4"/><path stroke="#ff20c0" d="M1238 218h4"/><path stroke="#ff18b8" d="M1246 218h4M1250 222h4"/><path stroke="#ff18b0" d="M1250 218h4"/><path stroke="#ff10a8" d="M1258 218h4M1262 222h8"/><path stroke="#ff0898" d="M1274 218h4M1278 222h8M1282 226h4"/><path stroke="#ff0088" d="M1290 218h8M1294 222h8"/><path stroke="#0078ff" d="M1094 222h8"/><path stroke="#0870ff" d="M1102 222h4M1102 226h4"/><path stroke="#1870ff" d="M1106 222h4"/><path stroke="#2070ff" d="M1110 222h4"/><path stroke="#3068ff" d="M1118 222h4"/><path stroke="#3868ff" d="M1122 222h4"/><path stroke="#4068ff" d="M1126 222h4"/><path stroke="#5060ff" d="M1134 222h4"/><path stroke="#5860ff" d="M1138 222h4"/><path stroke="#6060ff" d="M1142 222h4"/><path stroke="#7058ff" d="M1150 222h4M1150 226h4"/><path stroke="#7858ff" d="M1154 222h4"/><path stroke="#9050ff" d="M1162 222h4M1166 226h4"/><path stroke="#9850ff" d="M1166 222h4"/><path stroke="#a050ff" d="M1170 222h4"/><path stroke="#b048ff" d="M1178 222h4"/><path stroke="#b848ff" d="M1182 222h4"/><path stroke="#c848ff" d="M1186 222h4"/><path stroke="#d040ff" d="M1190 222h4M1194 226h4"/><path stroke="#d840ff" d="M1194 222h4"/><path stroke="#e040ff" d="M1198 222h4"/><path stroke="#f838ff" d="M1206 222h4"/><path stroke="#ff38ff" d="M1210 222h4"/><path stroke="#ff30f8" d="M1214 222h4M1218 226h4"/><path stroke="#ff30f0" d="M1218 222h4"/><path stroke="#ff28e8" d="M1222 222h4M1226 226h4"/><path stroke="#ff28e0" d="M1226 222h4"/><path stroke="#ff20d0" d="M1234 222h4M1238 226h4"/><path stroke="#ff18c0" d="M1242 222h8M1250 226h4"/><path stroke="#ff10b0" d="M1254 222h8M1262 226h4"/><path stroke="#ff08a0" d="M1270 222h8M1274 226h8M1278 230h4"/><path stroke="#ff0090" d="M1286 222h8M1290 226h8"/><path stroke="#0070ff" d="M1094 226h8"/><path stroke="#1068ff" d="M1106 226h4M1106 230h4"/><path stroke="#1868ff" d="M1110 226h4M1110 230h4"/><path stroke="#2068ff" d="M1114 226h4"/><path stroke="#2868ff" d="M1118 226h4"/><path stroke="#3060ff" d="M1122 226h4M1122 230h4"/><path stroke="#3860ff" d="M1126 226h4M1126 230h4"/><path stroke="#4060ff" d="M1130 226h4"/><path stroke="#4860ff" d="M1134 226h4"/><path stroke="#5858ff" d="M1138 226h4M1142 230h4"/><path stroke="#6058ff" d="M1142 226h4"/><path stroke="#6858ff" d="M1146 226h4"/><path stroke="#7850ff" d="M1154 226h4"/><path stroke="#8050ff" d="M1158 226h4"/><path stroke="#8850ff" d="M1162 226h4"/><path stroke="#9848ff" d="M1170 226h4"/><path stroke="#a048ff" d="M1174 226h4"/><path stroke="#a848ff" d="M1178 226h4"/><path stroke="#b840ff" d="M1182 226h4M1186 230h4"/><path stroke="#c040ff" d="M1186 226h4"/><path stroke="#c840ff" d="M1190 226h4"/><path stroke="#d838ff" d="M1198 226h4"/><path stroke="#e038ff" d="M1202 226h4"/><path stroke="#e838ff" d="M1206 226h4"/><path stroke="#f830ff" d="M1210 226h4M1214 230h4"/><path stroke="#ff30ff" d="M1214 226h4"/><path stroke="#ff28f0" d="M1222 226h4"/><path stroke="#ff20e0" d="M1230 226h4M1234 230h4"/><path stroke="#ff20d8" d="M1234 226h4"/><path stroke="#ff18c8" d="M1242 226h8M1246 230h4"/><path stroke="#ff10b8" d="M1254 226h8M1258 230h4"/><path stroke="#ff08a8" d="M1266 226h8M1274 230h4"/><path stroke="#ff0098" d="M1286 226h4M1286 230h8"/><path stroke="#0068ff" d="M1098 230h4M1098 234h4"/><path stroke="#0868ff" d="M1102 230h4"/><path stroke="#2060ff" d="M1114 230h4M1114 234h4"/><path stroke="#2860ff" d="M1118 230h4"/><path stroke="#4058ff" d="M1130 230h4M1130 234h4"/><path stroke="#4858ff" d="M1134 230h4"/><path stroke="#5058ff" d="M1138 230h4"/><path stroke="#6050ff" d="M1146 230h4M1146 234h4"/><path stroke="#6850ff" d="M1150 230h4"/><path stroke="#7050ff" d="M1154 230h4"/><path stroke="#7848ff" d="M1158 230h4M1158 234h4"/><path stroke="#8048ff" d="M1162 230h4M1162 234h4"/><path stroke="#8848ff" d="M1166 230h4"/><path stroke="#9048ff" d="M1170 230h4"/><path stroke="#a040ff" d="M1174 230h4M1178 234h4"/><path stroke="#a840ff" d="M1178 230h4"/><path stroke="#b040ff" d="M1182 230h4"/><path stroke="#c038ff" d="M1190 230h4M1194 234h4"/><path stroke="#c838ff" d="M1194 230h4"/><path stroke="#d038ff" d="M1198 230h4"/><path stroke="#d830ff" d="M1202 230h4M1206 234h4"/><path stroke="#e030ff" d="M1206 230h4"/><path stroke="#e830ff" d="M1210 230h4"/><path stroke="#ff28ff" d="M1218 230h4M1222 234h4"/><path stroke="#ff28f8" d="M1222 230h4"/><path stroke="#ff20f0" d="M1226 230h4M1230 234h4"/><path stroke="#ff20e8" d="M1230 230h4"/><path stroke="#ff18d8" d="M1238 230h4M1242 234h4"/><path stroke="#ff18d0" d="M1242 230h4"/><path stroke="#ff10c8" d="M1250 230h4M1254 234h4"/><path stroke="#ff10c0" d="M1254 230h4M1258 234h4"/><path stroke="#ff08b8" d="M1262 230h4M1266 234h4M1270 238h4"/><path stroke="#ff08b0" d="M1266 230h8M1270 234h8"/><path stroke="#ff00a0" d="M1282 230h4M1286 234h4"/><path stroke="#0860ff" d="M1102 234h4M1102 238h4"/><path stroke="#1060ff" d="M1106 234h4M1106 238h4"/><path stroke="#1860ff" d="M1110 234h4"/><path stroke="#2858ff" d="M1118 234h4M1122 238h4"/><path stroke="#3058ff" d="M1122 234h4"/><path stroke="#3858ff" d="M1126 234h4"/><path stroke="#4850ff" d="M1134 234h4M1138 238h4"/><path stroke="#5050ff" d="M1138 234h4"/><path stroke="#5850ff" d="M1142 234h4"/><path stroke="#6848ff" d="M1150 234h4M1154 238h4"/><path stroke="#7048ff" d="M1154 234h4"/><path stroke="#8840ff" d="M1166 234h4M1170 238h4"/><path stroke="#9040ff" d="M1170 234h4"/><path stroke="#9840ff" d="M1174 234h4"/><path stroke="#a838ff" d="M1182 234h4M1186 238h4"/><path stroke="#b038ff" d="M1186 234h4"/><path stroke="#b838ff" d="M1190 234h4"/><path stroke="#c830ff" d="M1198 234h4M1202 238h4"/><path stroke="#d030ff" d="M1202 234h4"/><path stroke="#e028ff" d="M1210 234h4M1214 238h4"/><path stroke="#e828ff" d="M1214 234h4"/><path stroke="#f828ff" d="M1218 234h4"/><path stroke="#ff20f8" d="M1226 234h4M1230 238h4"/><path stroke="#ff18e8" d="M1234 234h4M1238 238h4"/><path stroke="#ff18e0" d="M1238 234h4"/><path stroke="#ff10d0" d="M1246 234h8M1254 238h4"/><path stroke="#ff08c0" d="M1262 234h4M1262 238h8"/><path stroke="#ff00a8" d="M1278 234h8M1282 238h4"/><path stroke="#0060ff" d="M1098 238h4M1098 242h4"/><path stroke="#1858ff" d="M1110 238h4M1114 242h4"/><path stroke="#2058ff" d="M1114 238h8"/><path stroke="#3050ff" d="M1126 238h4M1126 242h4"/><path stroke="#3850ff" d="M1130 238h4M1130 242h4"/><path stroke="#4050ff" d="M1134 238h4"/><path stroke="#5048ff" d="M1142 238h4M1142 242h4"/><path stroke="#5848ff" d="M1146 238h4M1146 242h4"/><path stroke="#6048ff" d="M1150 238h4"/><path stroke="#7040ff" d="M1158 238h4M1158 242h4"/><path stroke="#7840ff" d="M1162 238h4M1162 242h4"/><path stroke="#8040ff" d="M1166 238h4"/><path stroke="#9038ff" d="M1174 238h4M1178 242h4"/><path stroke="#9838ff" d="M1178 238h4"/><path stroke="#a038ff" d="M1182 238h4"/><path stroke="#b030ff" d="M1190 238h4M1194 242h4"/><path stroke="#b830ff" d="M1194 238h4"/><path stroke="#c030ff" d="M1198 238h4"/><path stroke="#d028ff" d="M1206 238h4M1210 242h4"/><path stroke="#d828ff" d="M1210 238h4"/><path stroke="#f020ff" d="M1218 238h4M1222 242h4"/><path stroke="#f820ff" d="M1222 238h4M1226 242h4"/><path stroke="#ff20ff" d="M1226 238h4"/><path stroke="#ff18f0" d="M1234 238h4M1238 242h4"/><path stroke="#ff10e0" d="M1242 238h4M1246 242h4"/><path stroke="#ff10d8" d="M1246 238h8M1250 242h4"/><path stroke="#ff08c8" d="M1258 238h4M1262 242h8"/><path stroke="#ff00b8" d="M1274 238h4M1274 242h8"/><path stroke="#ff00b0" d="M1278 238h4"/><path stroke="#0858ff" d="M1102 242h8M1106 246h4"/><path stroke="#1058ff" d="M1110 242h4"/><path stroke="#2050ff" d="M1118 242h4M1118 246h4"/><path stroke="#2850ff" d="M1122 242h4M1122 246h4"/><path stroke="#4048ff" d="M1134 242h4M1134 246h8"/><path stroke="#4848ff" d="M1138 242h4"/><path stroke="#6040ff" d="M1150 242h4M1154 246h4"/><path stroke="#6840ff" d="M1154 242h4"/><path stroke="#7838ff" d="M1166 242h4M1166 246h4"/><path stroke="#8038ff" d="M1170 242h4M1170 246h4"/><path stroke="#8838ff" d="M1174 242h4"/><path stroke="#9830ff" d="M1182 242h4M1182 246h4"/><path stroke="#a030ff" d="M1186 242h4M1186 246h4"/><path stroke="#a830ff" d="M1190 242h4"/><path stroke="#b828ff" d="M1198 242h4M1198 246h4"/><path stroke="#c028ff" d="M1202 242h4M1202 246h4"/><path stroke="#c828ff" d="M1206 242h4"/><path stroke="#e020ff" d="M1214 242h4M1218 246h4"/><path stroke="#e820ff" d="M1218 242h4"/><path stroke="#ff18ff" d="M1230 242h4M1234 246h4"/><path stroke="#ff18f8" d="M1234 242h4"/><path stroke="#ff10e8" d="M1242 242h4M1246 246h4"/><path stroke="#ff08d8" d="M1254 242h4M1258 246h4"/><path stroke="#ff08d0" d="M1258 242h4M1262 246h4"/><path stroke="#ff00c0" d="M1270 242h4M1274 246h4"/><path stroke="#0058ff" d="M1098 246h8"/><path stroke="#1050ff" d="M1110 246h4M1110 250h4"/><path stroke="#1850ff" d="M1114 246h4M1114 250h4"/><path stroke="#3048ff" d="M1126 246h4M1130 250h4"/><path stroke="#3848ff" d="M1130 246h4"/><path stroke="#4840ff" d="M1142 246h4M1142 250h4M1142 254h4"/><path stroke="#5040ff" d="M1146 246h4M1146 250h4"/><path stroke="#5840ff" d="M1150 246h4"/><path stroke="#6838ff" d="M1158 246h4M1158 250h8"/><path stroke="#7038ff" d="M1162 246h4M1166 250h4"/><path stroke="#8830ff" d="M1174 246h4M1178 250h4"/><path stroke="#9030ff" d="M1178 246h4M1182 250h4"/><path stroke="#a828ff" d="M1190 246h4M1194 250h4"/><path stroke="#b028ff" d="M1194 246h4M1198 250h4"/><path stroke="#c820ff" d="M1206 246h4M1210 250h4"/><path stroke="#d020ff" d="M1210 246h4M1214 250h4"/><path stroke="#d820ff" d="M1214 246h4"/><path stroke="#e818ff" d="M1222 246h4M1226 250h4"/><path stroke="#f018ff" d="M1226 246h4M1230 250h4"/><path stroke="#f818ff" d="M1230 246h4"/><path stroke="#ff10f8" d="M1238 246h4M1242 250h4"/><path stroke="#ff10f0" d="M1242 246h4"/><path stroke="#ff08e0" d="M1250 246h8M1254 250h8"/><path stroke="#ff00c8" d="M1266 246h8M1270 250h4"/><path stroke="#0050ff" d="M1098 250h8M1102 254h4"/><path stroke="#0850ff" d="M1106 250h4M1106 254h4"/><path stroke="#2048ff" d="M1118 250h4M1122 254h4"/><path stroke="#2848ff" d="M1122 250h8"/><path stroke="#3840ff" d="M1134 250h4M1134 254h4M1134 258h4"/><path stroke="#4040ff" d="M1138 250h4M1138 254h4"/><path stroke="#5838ff" d="M1150 250h4M1154 254h4"/><path stroke="#6038ff" d="M1154 250h4M1158 254h4"/><path stroke="#7830ff" d="M1170 250h4M1170 254h4"/><path stroke="#8030ff" d="M1174 250h4M1174 254h4"/><path stroke="#9828ff" d="M1186 250h4M1190 254h4"/><path stroke="#a028ff" d="M1190 250h4"/><path stroke="#b820ff" d="M1202 250h4M1206 254h4"/><path stroke="#c020ff" d="M1206 250h4"/><path stroke="#d818ff" d="M1218 250h4M1222 254h4"/><path stroke="#e018ff" d="M1222 250h4M1226 254h4"/><path stroke="#f810ff" d="M1234 250h4M1238 254h4"/><path stroke="#ff10ff" d="M1238 250h4"/><path stroke="#ff08f0" d="M1246 250h4M1250 254h4"/><path stroke="#ff08e8" d="M1250 250h4M1254 254h4"/><path stroke="#ff00d8" d="M1262 250h4M1266 254h4"/><path stroke="#ff00d0" d="M1266 250h4"/><path stroke="#1048ff" d="M1110 254h4M1110 258h8"/><path stroke="#1848ff" d="M1114 254h8"/><path stroke="#2840ff" d="M1126 254h4M1126 258h4M1126 262h4"/><path stroke="#3040ff" d="M1130 254h4M1130 258h4"/><path stroke="#4838ff" d="M1146 254h4M1146 258h4"/><path stroke="#5038ff" d="M1150 254h4M1150 258h4"/><path stroke="#6830ff" d="M1162 254h4M1162 258h8"/><path stroke="#7030ff" d="M1166 254h4M1170 258h4"/><path stroke="#8828ff" d="M1178 254h4M1182 258h4"/><path stroke="#9028ff" d="M1182 254h8M1186 258h4"/><path stroke="#a020ff" d="M1194 254h4M1194 258h4M1198 262h4"/><path stroke="#a820ff" d="M1198 254h4M1198 258h8"/><path stroke="#b020ff" d="M1202 254h4"/><path stroke="#c018ff" d="M1210 254h4M1214 258h4"/><path stroke="#c818ff" d="M1214 254h4M1218 258h4"/><path stroke="#d018ff" d="M1218 254h4"/><path stroke="#e810ff" d="M1230 254h4M1234 258h4"/><path stroke="#f010ff" d="M1234 254h4"/><path stroke="#ff08ff" d="M1242 254h4M1246 258h4"/><path stroke="#ff08f8" d="M1246 254h4M1250 258h4"/><path stroke="#ff00e8" d="M1258 254h4M1258 258h8"/><path stroke="#ff00e0" d="M1262 254h4"/><path stroke="#0048ff" d="M1102 258h4M1102 262h4"/><path stroke="#0848ff" d="M1106 258h4M1106 262h4"/><path stroke="#1840ff" d="M1118 258h4M1118 262h4M1118 266h4"/><path stroke="#2040ff" d="M1122 258h4M1122 262h4"/><path stroke="#3838ff" d="M1138 258h4M1138 262h4M1138 266h4"/><path stroke="#4038ff" d="M1142 258h4M1142 262h4"/><path stroke="#5830ff" d="M1154 258h4M1158 262h4"/><path stroke="#6030ff" d="M1158 258h4M1162 262h4"/><path stroke="#7828ff" d="M1174 258h4M1174 262h4"/><path stroke="#8028ff" d="M1178 258h4M1178 262h4"/><path stroke="#9820ff" d="M1190 258h4M1194 262h4"/><path stroke="#b018ff" d="M1206 258h4M1206 262h4M1210 266h4"/><path stroke="#b818ff" d="M1210 258h4M1210 262h8"/><path stroke="#d010ff" d="M1222 258h4M1226 262h4"/><path stroke="#d810ff" d="M1226 258h4M1230 262h4"/><path stroke="#e010ff" d="M1230 258h4"/><path stroke="#f008ff" d="M1238 258h4M1242 262h4"/><path stroke="#f808ff" d="M1242 258h4M1246 262h4"/><path stroke="#ff00f0" d="M1254 258h4M1258 262h4"/><path stroke="#0840ff" d="M1110 262h4M1106 266h8M1110 270h4"/><path stroke="#1040ff" d="M1114 262h4M1114 266h4"/><path stroke="#2838ff" d="M1130 262h4M1130 266h4M1130 270h4"/><path stroke="#3038ff" d="M1134 262h4M1134 266h4"/><path stroke="#4830ff" d="M1146 262h4M1150 266h4M1150 270h4"/><path stroke="#5030ff" d="M1150 262h8M1154 266h4"/><path stroke="#6828ff" d="M1166 262h4M1166 266h8"/><path stroke="#7028ff" d="M1170 262h4M1174 266h4"/><path stroke="#8020ff" d="M1182 262h4M1182 266h4M1186 270h4"/><path stroke="#8820ff" d="M1186 262h4M1186 266h4"/><path stroke="#9020ff" d="M1190 262h4M1190 266h4"/><path stroke="#a818ff" d="M1202 262h4M1206 266h4"/><path stroke="#c010ff" d="M1218 262h4M1218 266h4M1222 270h4"/><path stroke="#c810ff" d="M1222 262h4M1222 266h8"/><path stroke="#e008ff" d="M1234 262h4M1238 266h4"/><path stroke="#e808ff" d="M1238 262h4M1242 266h4"/><path stroke="#ff00ff" d="M1250 262h4M1254 266h4"/><path stroke="#ff00f8" d="M1254 262h4"/><path stroke="#0040ff" d="M1102 266h4M1102 270h8M1102 274h4"/><path stroke="#2038ff" d="M1122 266h8M1126 270h4"/><path stroke="#4030ff" d="M1142 266h8M1146 270h4"/><path stroke="#5828ff" d="M1158 266h4M1158 270h8M1162 274h4"/><path stroke="#6028ff" d="M1162 266h4M1166 270h4"/><path stroke="#7820ff" d="M1178 266h4M1178 270h8M1182 274h4"/><path stroke="#9018ff" d="M1194 266h4M1194 270h4M1198 274h4"/><path stroke="#9818ff" d="M1198 266h4M1198 270h4"/><path stroke="#a018ff" d="M1202 266h4M1202 270h4"/><path stroke="#b810ff" d="M1214 266h4M1218 270h4"/><path stroke="#d008ff" d="M1230 266h4M1230 270h8M1234 274h4"/><path stroke="#d808ff" d="M1234 266h4M1238 270h4"/><path stroke="#f000ff" d="M1246 266h4M1250 270h4"/><path stroke="#f800ff" d="M1250 266h4"/><path stroke="#1038ff" d="M1114 270h4M1114 274h8M1114 278h4"/><path stroke="#1838ff" d="M1118 270h8M1122 274h4"/><path stroke="#3030ff" d="M1134 270h4M1134 274h8"/><path stroke="#3830ff" d="M1138 270h8M1142 274h4"/><path stroke="#5028ff" d="M1154 270h4M1158 274h4"/><path stroke="#6820ff" d="M1170 270h4M1170 274h8M1174 278h4"/><path stroke="#7020ff" d="M1174 270h4M1178 274h4"/><path stroke="#8818ff" d="M1190 270h4M1190 274h8M1194 278h4"/><path stroke="#a010ff" d="M1206 270h4M1206 274h4M1210 278h4"/><path stroke="#a810ff" d="M1210 270h4M1210 274h8M1214 278h4"/><path stroke="#b010ff" d="M1214 270h4M1218 274h4"/><path stroke="#c808ff" d="M1226 270h4M1230 274h4"/><path stroke="#e000ff" d="M1242 270h4M1246 274h4"/><path stroke="#e800ff" d="M1246 270h4"/><path stroke="#0038ff" d="M1106 274h4M1106 278h4M1106 282h4"/><path stroke="#0838ff" d="M1110 274h4M1110 278h4M1110 282h4"/><path stroke="#2030ff" d="M1126 274h4M1126 278h4M1126 282h8"/><path stroke="#2830ff" d="M1130 274h4M1130 278h8"/><path stroke="#4028ff" d="M1146 274h4M1146 278h8M1150 282h4"/><path stroke="#4828ff" d="M1150 274h8M1154 278h4"/><path stroke="#6020ff" d="M1166 274h4M1170 278h4M1170 282h4"/><path stroke="#8018ff" d="M1186 274h4M1190 278h4M1190 282h4"/><path stroke="#9810ff" d="M1202 274h4M1206 278h4M1206 282h4"/><path stroke="#b808ff" d="M1222 274h4M1226 278h4M1226 282h4"/><path stroke="#c008ff" d="M1226 274h4M1230 278h4"/><path stroke="#d000ff" d="M1238 274h4M1238 278h4"/><path stroke="#d800ff" d="M1242 274h4M1242 278h4"/><path stroke="#1030ff" d="M1118 278h4M1118 282h4M1118 286h4M1118 290h4"/><path stroke="#1830ff" d="M1122 278h4M1122 282h4M1122 286h4"/><path stroke="#3028ff" d="M1138 278h4M1138 282h4M1138 286h8"/><path stroke="#3828ff" d="M1142 278h4M1142 282h8"/><path stroke="#5020ff" d="M1158 278h4M1162 282h4M1162 286h4"/><path stroke="#5820ff" d="M1162 278h8M1166 282h4"/><path stroke="#7018ff" d="M1178 278h8M1182 282h4M1182 286h4"/><path stroke="#7818ff" d="M1186 278h4M1186 282h4"/><path stroke="#9010ff" d="M1198 278h8M1202 282h4"/><path stroke="#b008ff" d="M1218 278h8M1222 282h4"/><path stroke="#c800ff" d="M1234 278h4M1238 282h4"/><path stroke="#0830ff" d="M1114 282h4M1110 286h8M1114 290h4"/><path stroke="#2828ff" d="M1134 282h4M1134 286h4M1134 290h8"/><path stroke="#4820ff" d="M1154 282h8M1158 286h4M1158 290h4"/><path stroke="#6818ff" d="M1174 282h8M1178 286h4"/><path stroke="#8010ff" d="M1194 282h4M1194 286h4M1198 290h4"/><path stroke="#8810ff" d="M1198 282h4M1198 286h8"/><path stroke="#9808ff" d="M1210 282h4M1210 286h4M1214 290h4M1214 294h4"/><path stroke="#a008ff" d="M1214 282h4M1214 286h8M1218 290h4"/><path stroke="#a808ff" d="M1218 282h4M1222 286h4"/><path stroke="#b800ff" d="M1230 282h4M1230 286h4"/><path stroke="#c000ff" d="M1234 282h4M1234 286h4"/><path stroke="#0030ff" d="M1106 286h4M1106 290h8M1106 294h8"/><path stroke="#1828ff" d="M1126 286h4M1122 290h8M1126 294h4M1126 298h4"/><path stroke="#2028ff" d="M1130 286h4M1130 290h4M1130 294h4"/><path stroke="#3820ff" d="M1146 286h4M1146 290h8M1150 294h4"/><path stroke="#4020ff" d="M1150 286h8M1154 290h4M1154 294h4"/><path stroke="#5818ff" d="M1166 286h8M1170 290h4M1170 294h8"/><path stroke="#6018ff" d="M1174 286h4M1174 290h8"/><path stroke="#7010ff" d="M1186 286h4M1186 290h4M1186 294h8M1190 298h4"/><path stroke="#7810ff" d="M1190 286h4M1190 290h8M1194 294h4"/><path stroke="#9008ff" d="M1206 286h4M1206 290h8M1210 294h4"/><path stroke="#b000ff" d="M1226 286h4M1230 290h4"/><path stroke="#3020ff" d="M1142 290h4M1142 294h8M1142 298h8"/><path stroke="#5018ff" d="M1162 290h8M1166 294h4M1166 298h8"/><path stroke="#6810ff" d="M1182 290h4M1182 294h4M1186 298h4M1186 302h4"/><path stroke="#8808ff" d="M1202 290h4M1206 294h4M1206 298h8"/><path stroke="#a800ff" d="M1222 290h8M1226 294h4"/><path stroke="#0828ff" d="M1114 294h4M1114 298h4M1114 302h8M1114 306h4"/><path stroke="#1028ff" d="M1118 294h8M1118 298h8"/><path stroke="#2020ff" d="M1134 294h4M1130 298h8M1134 302h4M1134 306h4"/><path stroke="#2820ff" d="M1138 294h4M1138 298h4M1138 302h8M1138 306h4"/><path stroke="#4818ff" d="M1158 294h8M1162 298h4M1162 302h4"/><path stroke="#6010ff" d="M1178 294h4M1178 298h8M1182 302h4"/><path stroke="#8008ff" d="M1198 294h8M1202 298h4M1202 302h8"/><path stroke="#9800ff" d="M1218 294h4M1218 298h4"/><path stroke="#a000ff" d="M1222 294h4M1222 298h4"/><path stroke="#0028ff" d="M1106 298h8M1110 302h4M1110 306h4"/><path stroke="#3818ff" d="M1150 298h4M1150 302h8M1154 306h4M1154 310h4"/><path stroke="#4018ff" d="M1154 298h8M1158 302h4M1158 306h4"/><path stroke="#5810ff" d="M1174 298h4M1174 302h8M1178 306h4"/><path stroke="#7808ff" d="M1194 298h8M1198 302h4M1198 306h8"/><path stroke="#9000ff" d="M1214 298h4M1214 302h8"/><path stroke="#1020ff" d="M1122 302h4M1122 306h4M1122 310h8M1122 314h8"/><path stroke="#1820ff" d="M1126 302h8M1126 306h8M1130 310h4"/><path stroke="#3018ff" d="M1146 302h4M1146 306h8M1146 310h8M1150 314h4"/><path stroke="#4810ff" d="M1166 302h4M1166 306h4M1166 310h8M1166 314h8"/><path stroke="#5010ff" d="M1170 302h4M1170 306h8M1174 310h4"/><path stroke="#7008ff" d="M1190 302h8M1194 306h4M1198 310h4"/><path stroke="#8800ff" d="M1210 302h4M1210 306h8M1214 310h4"/><path stroke="#0820ff" d="M1118 306h4M1114 310h8M1118 314h4M1118 318h4"/><path stroke="#2818ff" d="M1142 306h4M1142 310h4M1142 314h8M1142 318h4"/><path stroke="#4010ff" d="M1162 306h4M1158 310h8M1162 314h4M1162 318h8"/><path stroke="#6008ff" d="M1182 306h8M1186 310h4M1186 314h8M1190 318h4"/><path stroke="#6808ff" d="M1190 306h4M1190 310h8M1194 314h4"/><path stroke="#8000ff" d="M1206 306h4M1210 310h4M1210 314h4"/><path stroke="#0020ff" d="M1110 310h4M1110 314h8M1110 318h8M1110 322h8"/><path stroke="#2018ff" d="M1134 310h8M1134 314h8M1138 318h4M1138 322h4"/><path stroke="#5808ff" d="M1178 310h8M1178 314h8M1182 318h8M1182 322h8"/><path stroke="#7800ff" d="M1202 310h8M1206 314h4M1206 318h4"/><path stroke="#1818ff" d="M1130 314h4M1130 318h8M1130 322h8M1134 326h4"/><path stroke="#3810ff" d="M1154 314h8M1158 318h4M1158 322h8M1158 326h4"/><path stroke="#5008ff" d="M1174 314h4M1174 318h8M1178 322h4M1178 326h8"/><path stroke="#7000ff" d="M1198 314h8M1202 318h4M1202 322h4"/><path stroke="#1018ff" d="M1122 318h8M1126 322h4M1126 326h8M1126 330h4"/><path stroke="#2810ff" d="M1146 318h4M1146 322h4M1146 326h8M1146 330h8"/><path stroke="#3010ff" d="M1150 318h8M1150 322h8M1154 326h4M1154 330h4"/><path stroke="#4808ff" d="M1170 318h4M1170 322h8M1174 326h4M1174 330h8M1174 334h4"/><path stroke="#6800ff" d="M1194 318h8M1198 322h4M1198 326h4"/><path stroke="#0818ff" d="M1118 322h8M1118 326h8M1118 330h8M1118 334h8"/><path stroke="#2010ff" d="M1142 322h4M1138 326h8M1142 330h4M1142 334h8M1142 338h4"/><path stroke="#4008ff" d="M1166 322h4M1166 326h8M1166 330h8M1170 334h4M1170 338h4"/><path stroke="#6000ff" d="M1190 322h8M1190 326h8M1194 330h4"/><path stroke="#0018ff" d="M1114 326h4M1114 330h4M1114 334h4M1114 338h8M1114 342h4"/><path stroke="#3808ff" d="M1162 326h4M1162 330h4M1162 334h8M1162 338h8"/><path stroke="#5800ff" d="M1186 326h4M1186 330h8M1190 334h4"/><path stroke="#1010ff" d="M1130 330h4M1126 334h8M1126 338h8M1130 342h4M1130 346h8M1130 350h4"/><path stroke="#1810ff" d="M1134 330h8M1134 334h8M1134 338h8M1134 342h8"/><path stroke="#3008ff" d="M1158 330h4M1154 334h8M1158 338h4M1158 342h8M1158 346h4"/><path stroke="#5000ff" d="M1182 330h4M1182 334h8M1186 338h4"/><path stroke="#2808ff" d="M1150 334h4M1150 338h8M1150 342h8M1150 346h8M1154 350h4"/><path stroke="#4800ff" d="M1178 334h4M1178 338h8M1178 342h8"/><path stroke="#0810ff" d="M1122 338h4M1122 342h8M1122 346h8M1122 350h8M1122 354h8"/><path stroke="#2008ff" d="M1146 338h4M1142 342h8M1146 346h4M1146 350h8M1146 354h8M1146 358h4"/><path stroke="#4000ff" d="M1174 338h4M1170 342h8M1174 346h8M1174 350h4"/><path stroke="#0010ff" d="M1118 342h4M1114 346h8M1114 350h8M1118 354h4M1118 358h8"/><path stroke="#3800ff" d="M1166 342h4M1166 346h8M1166 350h8M1170 354h4"/><path stroke="#1808ff" d="M1138 346h8M1138 350h8M1138 354h8M1138 358h8M1142 362h4"/><path stroke="#3000ff" d="M1162 346h4M1162 350h4M1162 354h8M1162 358h8M1162 362h4"/><path stroke="#1008ff" d="M1134 350h4M1130 354h8M1130 358h8M1134 362h8M1134 366h8M1134 370h4"/><path stroke="#2800ff" d="M1158 350h4M1154 354h8M1154 358h8M1158 362h4M1158 366h4"/><path stroke="#0808ff" d="M1126 358h4M1126 362h8M1126 366h8M1126 370h8M1126 374h8M1126 378h4"/><path stroke="#2000ff" d="M1150 358h4M1150 362h8M1150 366h8M1150 370h8M1150 374h4"/><path stroke="#0008ff" d="M1118 362h8M1118 366h8M1118 370h8M1118 374h8M1122 378h4M1122 382h4"/><path stroke="#1800ff" d="M1146 362h4M1142 366h8M1142 370h8M1142 374h8M1146 378h4"/><path stroke="#1000ff" d="M1138 370h4M1134 374h8M1138 378h8M1138 382h8M1138 386h4"/><path stroke="#0800ff" d="M1130 378h8M1130 382h8M1130 386h8M1130 390h8M1130 394h4"/><path stroke="#0000ff" d="M1126 382h4M1122 386h8M1122 390h8M1122 394h8M1122 398h8"/></g></g></g></g><rect x="951.5" y="57" width="599.5" height="461" fill="none" stroke="#9b9b9b" stroke-width="1.2"/><line x1="945.50" y1="518.00" x2="951.50" y2="518.00" stroke="#c4c4c4" stroke-width="1.50" /><text x="944.5" y="525.3" font-size="12.0" fill="#d6d6d6" text-anchor="end" stroke="#d6d6d6" stroke-width="0.10">0</text><line x1="945.50" y1="479.63" x2="951.50" y2="479.63" stroke="#c4c4c4" stroke-width="1.50" /><text x="944.5" y="483.9" font-size="12.0" fill="#d6d6d6" text-anchor="end" stroke="#d6d6d6" stroke-width="0.10">0,05</text><line x1="945.50" y1="441.27" x2="951.50" y2="441.27" stroke="#c4c4c4" stroke-width="1.50" /><text x="944.5" y="445.6" font-size="12.0" fill="#d6d6d6" text-anchor="end" stroke="#d6d6d6" stroke-width="0.10">0,1</text><line x1="945.50" y1="402.90" x2="951.50" y2="402.90" stroke="#c4c4c4" stroke-width="1.50" /><text x="944.5" y="407.2" font-size="12.0" fill="#d6d6d6" text-anchor="end" stroke="#d6d6d6" stroke-width="0.10">0,15</text><line x1="945.50" y1="364.54" x2="951.50" y2="364.54" stroke="#c4c4c4" stroke-width="1.50" /><text x="944.5" y="368.8" font-size="12.0" fill="#d6d6d6" text-anchor="end" stroke="#d6d6d6" stroke-width="0.10">0,2</text><line x1="945.50" y1="326.18" x2="951.50" y2="326.18" stroke="#c4c4c4" stroke-width="1.50" /><text x="944.5" y="330.5" font-size="12.0" fill="#d6d6d6" text-anchor="end" stroke="#d6d6d6" stroke-width="0.10">0,25</text><line x1="945.50" y1="287.81" x2="951.50" y2="287.81" stroke="#c4c4c4" stroke-width="1.50" /><text x="944.5" y="292.1" font-size="12.0" fill="#d6d6d6" text-anchor="end" stroke="#d6d6d6" stroke-width="0.10">0,3</text><line x1="945.50" y1="249.44" x2="951.50" y2="249.44" stroke="#c4c4c4" stroke-width="1.50" /><text x="944.5" y="253.7" font-size="12.0" fill="#d6d6d6" text-anchor="end" stroke="#d6d6d6" stroke-width="0.10">0,35</text><line x1="945.50" y1="211.08" x2="951.50" y2="211.08" stroke="#c4c4c4" stroke-width="1.50" /><text x="944.5" y="215.4" font-size="12.0" fill="#d6d6d6" text-anchor="end" stroke="#d6d6d6" stroke-width="0.10">0,4</text><line x1="945.50" y1="172.72" x2="951.50" y2="172.72" stroke="#c4c4c4" stroke-width="1.50" /><text x="944.5" y="177.0" font-size="12.0" fill="#d6d6d6" text-anchor="end" stroke="#d6d6d6" stroke-width="0.10">0,45</text><line x1="945.50" y1="134.35" x2="951.50" y2="134.35" stroke="#c4c4c4" stroke-width="1.50" /><text x="944.5" y="138.7" font-size="12.0" fill="#d6d6d6" text-anchor="end" stroke="#d6d6d6" stroke-width="0.10">0,5</text><line x1="945.50" y1="95.99" x2="951.50" y2="95.99" stroke="#c4c4c4" stroke-width="1.50" /><text x="944.5" y="100.3" font-size="12.0" fill="#d6d6d6" text-anchor="end" stroke="#d6d6d6" stroke-width="0.10">0,55</text><line x1="951.50" y1="518.00" x2="951.50" y2="523.50" stroke="#c4c4c4" stroke-width="1.50" /><text x="951.5" y="538.8" font-size="12.0" fill="#d6d6d6" text-anchor="middle" stroke="#d6d6d6" stroke-width="0.10">0</text><line x1="1001.41" y1="518.00" x2="1001.41" y2="523.50" stroke="#c4c4c4" stroke-width="1.50" /><text x="1001.4" y="538.8" font-size="12.0" fill="#d6d6d6" text-anchor="middle" stroke="#d6d6d6" stroke-width="0.10">0,05</text><line x1="1051.32" y1="518.00" x2="1051.32" y2="523.50" stroke="#c4c4c4" stroke-width="1.50" /><text x="1051.3" y="538.8" font-size="12.0" fill="#d6d6d6" text-anchor="middle" stroke="#d6d6d6" stroke-width="0.10">0,1</text><line x1="1101.23" y1="518.00" x2="1101.23" y2="523.50" stroke="#c4c4c4" stroke-width="1.50" /><text x="1101.2" y="538.8" font-size="12.0" fill="#d6d6d6" text-anchor="middle" stroke="#d6d6d6" stroke-width="0.10">0,15</text><line x1="1151.14" y1="518.00" x2="1151.14" y2="523.50" stroke="#c4c4c4" stroke-width="1.50" /><text x="1151.1" y="538.8" font-size="12.0" fill="#d6d6d6" text-anchor="middle" stroke="#d6d6d6" stroke-width="0.10">0,2</text><line x1="1201.05" y1="518.00" x2="1201.05" y2="523.50" stroke="#c4c4c4" stroke-width="1.50" /><text x="1201.0" y="538.8" font-size="12.0" fill="#d6d6d6" text-anchor="middle" stroke="#d6d6d6" stroke-width="0.10">0,25</text><line x1="1250.96" y1="518.00" x2="1250.96" y2="523.50" stroke="#c4c4c4" stroke-width="1.50" /><text x="1251.0" y="538.8" font-size="12.0" fill="#d6d6d6" text-anchor="middle" stroke="#d6d6d6" stroke-width="0.10">0,3</text><line x1="1300.87" y1="518.00" x2="1300.87" y2="523.50" stroke="#c4c4c4" stroke-width="1.50" /><text x="1300.9" y="538.8" font-size="12.0" fill="#d6d6d6" text-anchor="middle" stroke="#d6d6d6" stroke-width="0.10">0,35</text><line x1="1350.78" y1="518.00" x2="1350.78" y2="523.50" stroke="#c4c4c4" stroke-width="1.50" /><text x="1350.8" y="538.8" font-size="12.0" fill="#d6d6d6" text-anchor="middle" stroke="#d6d6d6" stroke-width="0.10">0,4</text><line x1="1400.69" y1="518.00" x2="1400.69" y2="523.50" stroke="#c4c4c4" stroke-width="1.50" /><text x="1400.7" y="538.8" font-size="12.0" fill="#d6d6d6" text-anchor="middle" stroke="#d6d6d6" stroke-width="0.10">0,45</text><line x1="1450.60" y1="518.00" x2="1450.60" y2="523.50" stroke="#c4c4c4" stroke-width="1.50" /><text x="1450.6" y="538.8" font-size="12.0" fill="#d6d6d6" text-anchor="middle" stroke="#d6d6d6" stroke-width="0.10">0,5</text><line x1="1500.51" y1="518.00" x2="1500.51" y2="523.50" stroke="#c4c4c4" stroke-width="1.50" /><text x="1500.5" y="538.8" font-size="12.0" fill="#d6d6d6" text-anchor="middle" stroke="#d6d6d6" stroke-width="0.10">0,55</text><g fill="none" stroke="#f4f4f4" stroke-width="1.6"><rect x="1069.0" y="78.5" width="13" height="13"/><rect x="1091.9" y="101.3" width="13" height="13"/><rect x="1129.0" y="93.3" width="13" height="13"/><rect x="1148.5" y="85.3" width="13" height="13"/><rect x="1173.3" y="89.4" width="13" height="13"/><rect x="1126.5" y="113.1" width="13" height="13"/><rect x="1098.3" y="143.3" width="13" height="13"/><rect x="1083.5" y="161.3" width="13" height="13"/><rect x="1088.5" y="190.5" width="13" height="13"/><rect x="1120.5" y="187.4" width="13" height="13"/><rect x="1139.5" y="192.8" width="13" height="13"/><rect x="1172.5" y="209.5" width="13" height="13"/><rect x="1122.4" y="237.3" width="13" height="13"/><rect x="1122.4" y="284.2" width="13" height="13"/><rect x="1249.4" y="256.7" width="13" height="13"/><rect x="1120.6" y="389.2" width="13" height="13"/><rect x="1394.5" y="108.4" width="13" height="13"/><rect x="1319.5" y="127.6" width="13" height="13"/><rect x="1261.4" y="139.5" width="13" height="13"/><rect x="1231.4" y="182.5" width="13" height="13"/><rect x="1203.6" y="95.9" width="13" height="13"/><rect x="1243.5" y="100.5" width="13" height="13"/><rect x="1212.6" y="105.0" width="13" height="13"/><rect x="1219.4" y="104.5" width="13" height="13"/><rect x="1195.3" y="111.6" width="13" height="13"/><rect x="1221.0" y="112.9" width="13" height="13"/><rect x="1177.2" y="120.8" width="13" height="13"/><rect x="1176.9" y="131.3" width="13" height="13"/><rect x="1189.5" y="122.9" width="13" height="13"/><rect x="1206.3" y="121.8" width="13" height="13"/><rect x="1218.9" y="121.3" width="13" height="13"/><rect x="1229.1" y="113.6" width="13" height="13"/></g><rect x="1142.1" y="151" width="12.4" height="12.4" fill="#e8e8e8" stroke="#000" stroke-width="2.3"/><g stroke="#151515" stroke-width="1.15"><circle cx="1070.6" cy="82.5" r="4.1" fill="#00ff00"/><circle cx="1094.4" cy="105.2" r="4.1" fill="#4f8a55"/><circle cx="1134.5" cy="97.3" r="4.1" fill="#9cab5c"/><circle cx="1154.4" cy="89.3" r="4.1" fill="#ffee00"/><circle cx="1180.4" cy="93.3" r="4.1" fill="#e2c23a"/><circle cx="1131.4" cy="117.5" r="4.1" fill="#55664a"/><circle cx="1102.5" cy="150.7" r="4.1" fill="#70b0a0"/><circle cx="1084.5" cy="167.5" r="4.1" fill="#00ffff"/><circle cx="1089.4" cy="199.3" r="4.1" fill="#1d8898"/><circle cx="1124.0" cy="196.5" r="4.1" fill="#6a7ea0"/><circle cx="1145.3" cy="199.3" r="4.1" fill="#8c88b0"/><circle cx="1181.6" cy="218.2" r="4.1" fill="#6a5878"/><circle cx="1126.4" cy="249.2" r="4.1" fill="#50609a"/><circle cx="1127.3" cy="301.2" r="4.1" fill="#3a4a90"/><circle cx="1260.3" cy="264.3" r="4.1" fill="#ff00ff"/><circle cx="1402.4" cy="114.1" r="4.1" fill="#ff0000"/><circle cx="1335.5" cy="131.3" r="4.1" fill="#b04050"/><circle cx="1272.5" cy="144.6" r="4.1" fill="#c06070"/><circle cx="1241.4" cy="189.4" r="4.1" fill="#c060a0"/><circle cx="1210.4" cy="99.1" r="4.1" fill="#e0a040"/><circle cx="1252.9" cy="103.3" r="4.1" fill="#c08850"/><circle cx="1255.0" cy="106.5" r="4.1" fill="#a06a38"/><circle cx="1240.7" cy="115.5" r="4.1" fill="#704428"/><circle cx="1231.4" cy="110.2" r="4.1" fill="#7a4c2e"/><circle cx="1221.5" cy="112.1" r="4.1" fill="#8a5a38"/><circle cx="1225.4" cy="119.9" r="4.1" fill="#d09a80"/><circle cx="1203.6" cy="118.6" r="4.1" fill="#c08c68"/><circle cx="1218.3" cy="120.2" r="4.1" fill="#d8906a"/><circle cx="1226.7" cy="125.5" r="4.1" fill="#e8a080"/><circle cx="1196.8" cy="127.3" r="4.1" fill="#c0907a"/><circle cx="1206.5" cy="125.2" r="4.1" fill="#c89070"/><circle cx="1212.3" cy="126.2" r="4.1" fill="#d09070"/><circle cx="1198.6" cy="132.5" r="4.1" fill="#705050"/><circle cx="1201.5" cy="125.2" r="4.1" fill="#d09078"/><circle cx="1185.5" cy="129.1" r="4.1" fill="#f0c0a0"/><circle cx="1187.1" cy="138.3" r="4.1" fill="#c8a898"/><circle cx="1182.6" cy="138.3" r="4.1" fill="#f0c8b0"/></g><circle cx="1148.3" cy="157.5" r="4.1" fill="#9c9c9c" stroke="#151515" stroke-width="1.15"/><circle cx="1136.8" cy="193.6" r="4.5" fill="#000"/><circle cx="1124" cy="406.7" r="3.6" fill="#1010ff" stroke="#151599" stroke-width="1"/><rect x="1359" y="356" width="187" height="122.5" fill="url(#gInset)" stroke="#8a8a8a" stroke-width="1.6"/><g clip-path="url(#cpIn)"><g fill="none" stroke="#f4f4f4" stroke-width="1.6"><rect x="1384.3" y="392.4" width="13" height="13"/><rect x="1482.4" y="373.3" width="13" height="13"/><rect x="1528.4" y="374.4" width="13" height="13"/><rect x="1445.3" y="410.4" width="13" height="13"/><rect x="1527.3" y="409.2" width="13" height="13"/><rect x="1463.3" y="423.5" width="13" height="13"/><rect x="1449.4" y="446.3" width="13" height="13"/><rect x="1363.4" y="423.5" width="13" height="13"/><rect x="1370.0" y="430.3" width="13" height="13"/><rect x="1377.5" y="442.6" width="13" height="13"/></g><g stroke="#151515" stroke-width="1.1"><circle cx="1403.6" cy="388.3" r="3.9" fill="#c08a60"/><circle cx="1524.5" cy="367.4" r="3.9" fill="#7e5a40"/><circle cx="1467.3" cy="408.4" r="3.9" fill="#d09a70"/><circle cx="1486.4" cy="422.3" r="3.9" fill="#c88a60"/><circle cx="1462.4" cy="448.4" r="3.9" fill="#f0a888"/><circle cx="1362.7" cy="423.1" r="3.9" fill="#c89070"/><circle cx="1372.4" cy="427.2" r="3.9" fill="#e8b08c"/><circle cx="1388.1" cy="429.1" r="3.9" fill="#c08868"/><circle cx="1395.4" cy="441.4" r="3.9" fill="#b07c5a"/></g></g><rect x="1312.00" y="488.00" width="236.00" height="25.00" fill="#323232" /><text x="1313.0" y="507.7" font-size="17.5" fill="#f0f0f0" textLength="208.0" lengthAdjust="spacingAndGlyphs" stroke="#f0f0f0" stroke-width="0.12">RGB Triplet: 217, 140, 94</text><text x="44.0" y="582.0" font-size="27.0" fill="#f0f0f0" textLength="218.0" lengthAdjust="spacingAndGlyphs" stroke="#f0f0f0" stroke-width="0.50">Avg dE2000: 1,05</text><text x="49.5" y="619.4" font-size="27.0" fill="#f0f0f0" textLength="209.0" lengthAdjust="spacingAndGlyphs" stroke="#f0f0f0" stroke-width="0.50">Max dE2000: 2,1</text><text x="10.8" y="664.5" font-size="27.0" fill="#f0f0f0" textLength="204.5" lengthAdjust="spacingAndGlyphs" stroke="#f0f0f0" stroke-width="0.50">Current Reading</text><text x="10.4" y="698.0" font-size="22.0" fill="#f0f0f0" textLength="95.0" lengthAdjust="spacingAndGlyphs" stroke="#f0f0f0" stroke-width="0.50">x: 0,4517</text><text x="157.3" y="698.0" font-size="22.0" fill="#f0f0f0" textLength="96.5" lengthAdjust="spacingAndGlyphs" stroke="#f0f0f0" stroke-width="0.50">y: 0,3874</text><text x="10.4" y="735.2" font-size="22.0" fill="#f0f0f0" textLength="89.5" lengthAdjust="spacingAndGlyphs" stroke="#f0f0f0" stroke-width="0.50">fL: 54,73</text><text x="10.4" y="767.6" font-size="22.0" fill="#f0f0f0" textLength="148.5" lengthAdjust="spacingAndGlyphs" stroke="#f0f0f0" stroke-width="0.50">cd/m²: 187,52</text><rect x="296.50" y="563.50" width="1261.00" height="214.00" fill="#1c1c1c" /><rect x="298.50" y="564.50" width="1259.00" height="24.30" fill="url(#gHead)" /><rect x="298.50" y="588.80" width="1259.00" height="21.80" fill="#3d3d3d" /><text x="312.4" y="604.4" font-size="13.2" fill="#f0f0f0" font-weight="bold" textLength="66.6" lengthAdjust="spacingAndGlyphs" stroke="#f0f0f0" stroke-width="0.06">x: CIE31</text><text x="454.4" y="605.0" font-size="14.0" fill="#f0f0f0" textLength="52.9" lengthAdjust="spacingAndGlyphs" stroke="#f0f0f0" stroke-width="0.12">0,3122</text><text x="536.6" y="605.0" font-size="14.0" fill="#f0f0f0" textLength="52.9" lengthAdjust="spacingAndGlyphs" stroke="#f0f0f0" stroke-width="0.12">0,3123</text><text x="618.8" y="605.0" font-size="14.0" fill="#f0f0f0" textLength="52.9" lengthAdjust="spacingAndGlyphs" stroke="#f0f0f0" stroke-width="0.12">0,3120</text><text x="701.8" y="605.0" font-size="14.0" fill="#f0f0f0" textLength="52.9" lengthAdjust="spacingAndGlyphs" stroke="#f0f0f0" stroke-width="0.12">0,3129</text><text x="784.0" y="605.0" font-size="14.0" fill="#f0f0f0" textLength="52.9" lengthAdjust="spacingAndGlyphs" stroke="#f0f0f0" stroke-width="0.12">0,3129</text><text x="866.6" y="605.0" font-size="14.0" fill="#f0f0f0" textLength="52.9" lengthAdjust="spacingAndGlyphs" stroke="#f0f0f0" stroke-width="0.12">0,2628</text><text x="939.6" y="605.0" font-size="14.0" fill="#f0f0f0" textLength="52.9" lengthAdjust="spacingAndGlyphs" stroke="#f0f0f0" stroke-width="0.12">0,4085</text><text x="1018.2" y="605.0" font-size="14.0" fill="#f0f0f0" textLength="52.9" lengthAdjust="spacingAndGlyphs" stroke="#f0f0f0" stroke-width="0.12">0,3811</text><text x="1101.3" y="605.0" font-size="14.0" fill="#f0f0f0" textLength="52.9" lengthAdjust="spacingAndGlyphs" stroke="#f0f0f0" stroke-width="0.12">0,2453</text><text x="1173.7" y="605.0" font-size="14.0" fill="#f0f0f0" textLength="52.9" lengthAdjust="spacingAndGlyphs" stroke="#f0f0f0" stroke-width="0.12">0,3406</text><text x="1246.5" y="605.0" font-size="14.0" fill="#f0f0f0" textLength="52.9" lengthAdjust="spacingAndGlyphs" stroke="#f0f0f0" stroke-width="0.12">0,2674</text><text x="1343.5" y="605.0" font-size="14.0" fill="#f0f0f0" textLength="52.9" lengthAdjust="spacingAndGlyphs" stroke="#f0f0f0" stroke-width="0.12">0,2576</text><text x="1447.8" y="605.0" font-size="14.0" fill="#f0f0f0" textLength="52.9" lengthAdjust="spacingAndGlyphs" stroke="#f0f0f0" stroke-width="0.12">0,5209</text><text x="1529.6" y="605.0" font-size="14.0" fill="#f0f0f0" textLength="52.9" lengthAdjust="spacingAndGlyphs" stroke="#f0f0f0" stroke-width="0.12">0,2131</text><rect x="298.50" y="610.60" width="1259.00" height="21.80" fill="#818181" /><text x="312.4" y="626.2" font-size="13.2" fill="#f0f0f0" font-weight="bold" textLength="66.0" lengthAdjust="spacingAndGlyphs" stroke="#f0f0f0" stroke-width="0.06">y: CIE31</text><text x="454.4" y="626.8" font-size="14.0" fill="#f0f0f0" textLength="52.9" lengthAdjust="spacingAndGlyphs" stroke="#f0f0f0" stroke-width="0.12">0,3291</text><text x="536.6" y="626.8" font-size="14.0" fill="#f0f0f0" textLength="52.9" lengthAdjust="spacingAndGlyphs" stroke="#f0f0f0" stroke-width="0.12">0,3290</text><text x="618.8" y="626.8" font-size="14.0" fill="#f0f0f0" textLength="52.9" lengthAdjust="spacingAndGlyphs" stroke="#f0f0f0" stroke-width="0.12">0,3288</text><text x="701.8" y="626.8" font-size="14.0" fill="#f0f0f0" textLength="52.9" lengthAdjust="spacingAndGlyphs" stroke="#f0f0f0" stroke-width="0.12">0,3291</text><text x="784.0" y="626.8" font-size="14.0" fill="#f0f0f0" textLength="52.9" lengthAdjust="spacingAndGlyphs" stroke="#f0f0f0" stroke-width="0.12">0,3292</text><text x="866.6" y="626.8" font-size="14.0" fill="#f0f0f0" textLength="52.9" lengthAdjust="spacingAndGlyphs" stroke="#f0f0f0" stroke-width="0.12">0,2647</text><text x="939.6" y="626.8" font-size="14.0" fill="#f0f0f0" textLength="52.9" lengthAdjust="spacingAndGlyphs" stroke="#f0f0f0" stroke-width="0.12">0,3679</text><text x="1018.2" y="626.8" font-size="14.0" fill="#f0f0f0" textLength="52.9" lengthAdjust="spacingAndGlyphs" stroke="#f0f0f0" stroke-width="0.12">0,3569</text><text x="1101.3" y="626.8" font-size="14.0" fill="#f0f0f0" textLength="52.9" lengthAdjust="spacingAndGlyphs" stroke="#f0f0f0" stroke-width="0.12">0,2619</text><text x="1173.7" y="626.8" font-size="14.0" fill="#f0f0f0" textLength="52.9" lengthAdjust="spacingAndGlyphs" stroke="#f0f0f0" stroke-width="0.12">0,4345</text><text x="1246.5" y="626.8" font-size="14.0" fill="#f0f0f0" textLength="52.9" lengthAdjust="spacingAndGlyphs" stroke="#f0f0f0" stroke-width="0.12">0,2513</text><text x="1343.5" y="626.8" font-size="14.0" fill="#f0f0f0" textLength="52.9" lengthAdjust="spacingAndGlyphs" stroke="#f0f0f0" stroke-width="0.12">0,3609</text><text x="1447.8" y="626.8" font-size="14.0" fill="#f0f0f0" textLength="52.9" lengthAdjust="spacingAndGlyphs" stroke="#f0f0f0" stroke-width="0.12">0,4117</text><text x="1529.6" y="626.8" font-size="14.0" fill="#f0f0f0" textLength="52.9" lengthAdjust="spacingAndGlyphs" stroke="#f0f0f0" stroke-width="0.12">0,1843</text><rect x="298.50" y="632.40" width="1259.00" height="21.80" fill="#3d3d3d" /><text x="312.4" y="648.0" font-size="13.2" fill="#f0f0f0" font-weight="bold" textLength="10.5" lengthAdjust="spacingAndGlyphs" stroke="#f0f0f0" stroke-width="0.06">Y</text><text x="454.4" y="648.6" font-size="14.0" fill="#f0f0f0" textLength="72.3" lengthAdjust="spacingAndGlyphs" stroke="#f0f0f0" stroke-width="0.12">526,8030</text><text x="536.6" y="648.6" font-size="14.0" fill="#f0f0f0" textLength="72.3" lengthAdjust="spacingAndGlyphs" stroke="#f0f0f0" stroke-width="0.12">419,5040</text><text x="618.8" y="648.6" font-size="14.0" fill="#f0f0f0" textLength="72.3" lengthAdjust="spacingAndGlyphs" stroke="#f0f0f0" stroke-width="0.12">339,4427</text><text x="701.8" y="648.6" font-size="14.0" fill="#f0f0f0" textLength="72.3" lengthAdjust="spacingAndGlyphs" stroke="#f0f0f0" stroke-width="0.12">260,9718</text><text x="784.0" y="648.6" font-size="14.0" fill="#f0f0f0" textLength="72.3" lengthAdjust="spacingAndGlyphs" stroke="#f0f0f0" stroke-width="0.12">183,1864</text><text x="866.6" y="648.6" font-size="14.0" fill="#f0f0f0" textLength="52.9" lengthAdjust="spacingAndGlyphs" stroke="#f0f0f0" stroke-width="0.12">0,5213</text><text x="939.6" y="648.6" font-size="14.0" fill="#f0f0f0" textLength="62.6" lengthAdjust="spacingAndGlyphs" stroke="#f0f0f0" stroke-width="0.12">53,4480</text><text x="1018.2" y="648.6" font-size="14.0" fill="#f0f0f0" textLength="72.3" lengthAdjust="spacingAndGlyphs" stroke="#f0f0f0" stroke-width="0.12">189,2333</text><text x="1101.3" y="648.6" font-size="14.0" fill="#f0f0f0" textLength="62.6" lengthAdjust="spacingAndGlyphs" stroke="#f0f0f0" stroke-width="0.12">98,1444</text><text x="1173.7" y="648.6" font-size="14.0" fill="#f0f0f0" textLength="62.6" lengthAdjust="spacingAndGlyphs" stroke="#f0f0f0" stroke-width="0.12">68,3756</text><text x="1246.5" y="648.6" font-size="14.0" fill="#f0f0f0" textLength="72.3" lengthAdjust="spacingAndGlyphs" stroke="#f0f0f0" stroke-width="0.12">123,8453</text><text x="1343.5" y="648.6" font-size="14.0" fill="#f0f0f0" textLength="72.3" lengthAdjust="spacingAndGlyphs" stroke="#f0f0f0" stroke-width="0.12">219,8948</text><text x="1447.8" y="648.6" font-size="14.0" fill="#f0f0f0" textLength="72.3" lengthAdjust="spacingAndGlyphs" stroke="#f0f0f0" stroke-width="0.12">154,6752</text><text x="1529.6" y="648.6" font-size="14.0" fill="#f0f0f0" textLength="62.6" lengthAdjust="spacingAndGlyphs" stroke="#f0f0f0" stroke-width="0.12">60,5211</text><rect x="298.50" y="654.20" width="1259.00" height="21.80" fill="#818181" /><text x="312.4" y="669.8" font-size="13.2" fill="#f0f0f0" font-weight="bold" textLength="121.3" lengthAdjust="spacingAndGlyphs" stroke="#f0f0f0" stroke-width="0.06">Target x:CIE31</text><text x="454.4" y="670.4" font-size="14.0" fill="#f0f0f0" textLength="52.9" lengthAdjust="spacingAndGlyphs" stroke="#f0f0f0" stroke-width="0.12">0,3127</text><text x="536.6" y="670.4" font-size="14.0" fill="#f0f0f0" textLength="52.9" lengthAdjust="spacingAndGlyphs" stroke="#f0f0f0" stroke-width="0.12">0,3127</text><text x="618.8" y="670.4" font-size="14.0" fill="#f0f0f0" textLength="52.9" lengthAdjust="spacingAndGlyphs" stroke="#f0f0f0" stroke-width="0.12">0,3127</text><text x="701.8" y="670.4" font-size="14.0" fill="#f0f0f0" textLength="52.9" lengthAdjust="spacingAndGlyphs" stroke="#f0f0f0" stroke-width="0.12">0,3127</text><text x="784.0" y="670.4" font-size="14.0" fill="#f0f0f0" textLength="52.9" lengthAdjust="spacingAndGlyphs" stroke="#f0f0f0" stroke-width="0.12">0,3127</text><text x="866.6" y="670.4" font-size="14.0" fill="#f0f0f0" textLength="52.9" lengthAdjust="spacingAndGlyphs" stroke="#f0f0f0" stroke-width="0.12">0,3127</text><text x="939.6" y="670.4" font-size="14.0" fill="#f0f0f0" textLength="52.9" lengthAdjust="spacingAndGlyphs" stroke="#f0f0f0" stroke-width="0.12">0,4003</text><text x="1018.2" y="670.4" font-size="14.0" fill="#f0f0f0" textLength="52.9" lengthAdjust="spacingAndGlyphs" stroke="#f0f0f0" stroke-width="0.12">0,3795</text><text x="1101.3" y="670.4" font-size="14.0" fill="#f0f0f0" textLength="52.9" lengthAdjust="spacingAndGlyphs" stroke="#f0f0f0" stroke-width="0.12">0,2496</text><text x="1173.7" y="670.4" font-size="14.0" fill="#f0f0f0" textLength="52.9" lengthAdjust="spacingAndGlyphs" stroke="#f0f0f0" stroke-width="0.12">0,3395</text><text x="1246.5" y="670.4" font-size="14.0" fill="#f0f0f0" textLength="52.9" lengthAdjust="spacingAndGlyphs" stroke="#f0f0f0" stroke-width="0.12">0,2681</text><text x="1343.5" y="670.4" font-size="14.0" fill="#f0f0f0" textLength="52.9" lengthAdjust="spacingAndGlyphs" stroke="#f0f0f0" stroke-width="0.12">0,2626</text><text x="1447.8" y="670.4" font-size="14.0" fill="#f0f0f0" textLength="52.9" lengthAdjust="spacingAndGlyphs" stroke="#f0f0f0" stroke-width="0.12">0,5122</text><text x="1529.6" y="670.4" font-size="14.0" fill="#f0f0f0" textLength="52.9" lengthAdjust="spacingAndGlyphs" stroke="#f0f0f0" stroke-width="0.12">0,2114</text><rect x="298.50" y="676.00" width="1259.00" height="21.80" fill="#3d3d3d" /><text x="312.4" y="691.6" font-size="13.2" fill="#f0f0f0" font-weight="bold" textLength="121.3" lengthAdjust="spacingAndGlyphs" stroke="#f0f0f0" stroke-width="0.06">Target y:CIE31</text><text x="454.4" y="692.2" font-size="14.0" fill="#f0f0f0" textLength="52.9" lengthAdjust="spacingAndGlyphs" stroke="#f0f0f0" stroke-width="0.12">0,3290</text><text x="536.6" y="692.2" font-size="14.0" fill="#f0f0f0" textLength="52.9" lengthAdjust="spacingAndGlyphs" stroke="#f0f0f0" stroke-width="0.12">0,3290</text><text x="618.8" y="692.2" font-size="14.0" fill="#f0f0f0" textLength="52.9" lengthAdjust="spacingAndGlyphs" stroke="#f0f0f0" stroke-width="0.12">0,3290</text><text x="701.8" y="692.2" font-size="14.0" fill="#f0f0f0" textLength="52.9" lengthAdjust="spacingAndGlyphs" stroke="#f0f0f0" stroke-width="0.12">0,3290</text><text x="784.0" y="692.2" font-size="14.0" fill="#f0f0f0" textLength="52.9" lengthAdjust="spacingAndGlyphs" stroke="#f0f0f0" stroke-width="0.12">0,3290</text><text x="866.6" y="692.2" font-size="14.0" fill="#f0f0f0" textLength="52.9" lengthAdjust="spacingAndGlyphs" stroke="#f0f0f0" stroke-width="0.12">0,3290</text><text x="939.6" y="692.2" font-size="14.0" fill="#f0f0f0" textLength="52.9" lengthAdjust="spacingAndGlyphs" stroke="#f0f0f0" stroke-width="0.12">0,3642</text><text x="1018.2" y="692.2" font-size="14.0" fill="#f0f0f0" textLength="52.9" lengthAdjust="spacingAndGlyphs" stroke="#f0f0f0" stroke-width="0.12">0,3562</text><text x="1101.3" y="692.2" font-size="14.0" fill="#f0f0f0" textLength="52.9" lengthAdjust="spacingAndGlyphs" stroke="#f0f0f0" stroke-width="0.12">0,2656</text><text x="1173.7" y="692.2" font-size="14.0" fill="#f0f0f0" textLength="52.9" lengthAdjust="spacingAndGlyphs" stroke="#f0f0f0" stroke-width="0.12">0,4271</text><text x="1246.5" y="692.2" font-size="14.0" fill="#f0f0f0" textLength="52.9" lengthAdjust="spacingAndGlyphs" stroke="#f0f0f0" stroke-width="0.12">0,2525</text><text x="1343.5" y="692.2" font-size="14.0" fill="#f0f0f0" textLength="52.9" lengthAdjust="spacingAndGlyphs" stroke="#f0f0f0" stroke-width="0.12">0,3616</text><text x="1447.8" y="692.2" font-size="14.0" fill="#f0f0f0" textLength="52.9" lengthAdjust="spacingAndGlyphs" stroke="#f0f0f0" stroke-width="0.12">0,4063</text><text x="1529.6" y="692.2" font-size="14.0" fill="#f0f0f0" textLength="52.9" lengthAdjust="spacingAndGlyphs" stroke="#f0f0f0" stroke-width="0.12">0,1977</text><rect x="298.50" y="697.80" width="1259.00" height="21.80" fill="#818181" /><text x="312.4" y="713.4" font-size="13.2" fill="#f0f0f0" font-weight="bold" textLength="69.9" lengthAdjust="spacingAndGlyphs" stroke="#f0f0f0" stroke-width="0.06">Target Y</text><text x="454.4" y="714.0" font-size="14.0" fill="#f0f0f0" textLength="72.3" lengthAdjust="spacingAndGlyphs" stroke="#f0f0f0" stroke-width="0.12">526,8030</text><text x="536.6" y="714.0" font-size="14.0" fill="#f0f0f0" textLength="72.3" lengthAdjust="spacingAndGlyphs" stroke="#f0f0f0" stroke-width="0.12">416,8581</text><text x="618.8" y="714.0" font-size="14.0" fill="#f0f0f0" textLength="72.3" lengthAdjust="spacingAndGlyphs" stroke="#f0f0f0" stroke-width="0.12">335,8879</text><text x="701.8" y="714.0" font-size="14.0" fill="#f0f0f0" textLength="72.3" lengthAdjust="spacingAndGlyphs" stroke="#f0f0f0" stroke-width="0.12">258,6712</text><text x="784.0" y="714.0" font-size="14.0" fill="#f0f0f0" textLength="72.3" lengthAdjust="spacingAndGlyphs" stroke="#f0f0f0" stroke-width="0.12">180,1215</text><text x="866.6" y="714.0" font-size="14.0" fill="#f0f0f0" textLength="52.9" lengthAdjust="spacingAndGlyphs" stroke="#f0f0f0" stroke-width="0.12">0,0000</text><text x="939.6" y="714.0" font-size="14.0" fill="#f0f0f0" textLength="62.6" lengthAdjust="spacingAndGlyphs" stroke="#f0f0f0" stroke-width="0.12">53,0665</text><text x="1018.2" y="714.0" font-size="14.0" fill="#f0f0f0" textLength="72.3" lengthAdjust="spacingAndGlyphs" stroke="#f0f0f0" stroke-width="0.12">183,8288</text><text x="1101.3" y="714.0" font-size="14.0" fill="#f0f0f0" textLength="62.6" lengthAdjust="spacingAndGlyphs" stroke="#f0f0f0" stroke-width="0.12">98,5037</text><text x="1173.7" y="714.0" font-size="14.0" fill="#f0f0f0" textLength="62.6" lengthAdjust="spacingAndGlyphs" stroke="#f0f0f0" stroke-width="0.12">68,6554</text><text x="1246.5" y="714.0" font-size="14.0" fill="#f0f0f0" textLength="72.3" lengthAdjust="spacingAndGlyphs" stroke="#f0f0f0" stroke-width="0.12">122,8425</text><text x="1343.5" y="714.0" font-size="14.0" fill="#f0f0f0" textLength="72.3" lengthAdjust="spacingAndGlyphs" stroke="#f0f0f0" stroke-width="0.12">220,5883</text><text x="1447.8" y="714.0" font-size="14.0" fill="#f0f0f0" textLength="72.3" lengthAdjust="spacingAndGlyphs" stroke="#f0f0f0" stroke-width="0.12">149,3372</text><text x="1529.6" y="714.0" font-size="14.0" fill="#f0f0f0" textLength="62.6" lengthAdjust="spacingAndGlyphs" stroke="#f0f0f0" stroke-width="0.12">61,9112</text><rect x="298.50" y="719.60" width="1259.00" height="21.80" fill="#3d3d3d" /><text x="312.4" y="735.2" font-size="13.2" fill="#f0f0f0" font-weight="bold" textLength="68.6" lengthAdjust="spacingAndGlyphs" stroke="#f0f0f0" stroke-width="0.06">ΔE 2000</text><text x="454.4" y="735.8" font-size="14.0" fill="#f0f0f0" textLength="52.9" lengthAdjust="spacingAndGlyphs" stroke="#f0f0f0" stroke-width="0.12">0,5046</text><text x="536.6" y="735.8" font-size="14.0" fill="#f0f0f0" textLength="52.9" lengthAdjust="spacingAndGlyphs" stroke="#f0f0f0" stroke-width="0.12">0,3354</text><text x="618.8" y="735.8" font-size="14.0" fill="#f0f0f0" textLength="52.9" lengthAdjust="spacingAndGlyphs" stroke="#f0f0f0" stroke-width="0.12">0,4301</text><text x="701.8" y="735.8" font-size="14.0" fill="#f0f0f0" textLength="52.9" lengthAdjust="spacingAndGlyphs" stroke="#f0f0f0" stroke-width="0.12">0,2125</text><text x="784.0" y="735.8" font-size="14.0" fill="#f0f0f0" textLength="52.9" lengthAdjust="spacingAndGlyphs" stroke="#f0f0f0" stroke-width="0.12">0,3864</text><text x="866.6" y="735.8" font-size="14.0" fill="#f0f0f0" textLength="52.9" lengthAdjust="spacingAndGlyphs" stroke="#f0f0f0" stroke-width="0.12">1,1207</text><text x="939.6" y="735.8" font-size="14.0" fill="#f0f0f0" textLength="52.9" lengthAdjust="spacingAndGlyphs" stroke="#f0f0f0" stroke-width="0.12">1,0334</text><text x="1018.2" y="735.8" font-size="14.0" fill="#f0f0f0" textLength="52.9" lengthAdjust="spacingAndGlyphs" stroke="#f0f0f0" stroke-width="0.12">0,7442</text><text x="1101.3" y="735.8" font-size="14.0" fill="#f0f0f0" textLength="52.9" lengthAdjust="spacingAndGlyphs" stroke="#f0f0f0" stroke-width="0.12">0,8227</text><text x="1173.7" y="735.8" font-size="14.0" fill="#f0f0f0" textLength="52.9" lengthAdjust="spacingAndGlyphs" stroke="#f0f0f0" stroke-width="0.12">0,8501</text><text x="1246.5" y="735.8" font-size="14.0" fill="#f0f0f0" textLength="52.9" lengthAdjust="spacingAndGlyphs" stroke="#f0f0f0" stroke-width="0.12">0,3101</text><text x="1343.5" y="735.8" font-size="14.0" fill="#f0f0f0" textLength="52.9" lengthAdjust="spacingAndGlyphs" stroke="#f0f0f0" stroke-width="0.12">0,9825</text><text x="1447.8" y="735.8" font-size="14.0" fill="#f0f0f0" textLength="52.9" lengthAdjust="spacingAndGlyphs" stroke="#f0f0f0" stroke-width="0.12">1,9608</text><text x="1529.6" y="735.8" font-size="14.0" fill="#f0f0f0" textLength="52.9" lengthAdjust="spacingAndGlyphs" stroke="#f0f0f0" stroke-width="0.12">0,8822</text><rect x="298.50" y="741.40" width="1259.00" height="21.80" fill="#818181" /><text x="312.4" y="757.0" font-size="13.2" fill="#f0f0f0" font-weight="bold" textLength="54.7" lengthAdjust="spacingAndGlyphs" stroke="#f0f0f0" stroke-width="0.06">ΔE ITP</text><text x="454.4" y="757.6" font-size="14.0" fill="#f0f0f0" textLength="52.9" lengthAdjust="spacingAndGlyphs" stroke="#f0f0f0" stroke-width="0.12">0,4137</text><text x="536.6" y="757.6" font-size="14.0" fill="#f0f0f0" textLength="52.9" lengthAdjust="spacingAndGlyphs" stroke="#f0f0f0" stroke-width="0.12">0,5557</text><text x="618.8" y="757.6" font-size="14.0" fill="#f0f0f0" textLength="52.9" lengthAdjust="spacingAndGlyphs" stroke="#f0f0f0" stroke-width="0.12">0,9106</text><text x="701.8" y="757.6" font-size="14.0" fill="#f0f0f0" textLength="52.9" lengthAdjust="spacingAndGlyphs" stroke="#f0f0f0" stroke-width="0.12">0,6820</text><text x="784.0" y="757.6" font-size="14.0" fill="#f0f0f0" textLength="52.9" lengthAdjust="spacingAndGlyphs" stroke="#f0f0f0" stroke-width="0.12">1,2674</text><text x="866.6" y="757.6" font-size="14.0" fill="#f0f0f0" textLength="62.6" lengthAdjust="spacingAndGlyphs" stroke="#f0f0f0" stroke-width="0.12">87,5114</text><text x="939.6" y="757.6" font-size="14.0" fill="#f0f0f0" textLength="52.9" lengthAdjust="spacingAndGlyphs" stroke="#f0f0f0" stroke-width="0.12">4,2461</text><text x="1018.2" y="757.6" font-size="14.0" fill="#f0f0f0" textLength="52.9" lengthAdjust="spacingAndGlyphs" stroke="#f0f0f0" stroke-width="0.12">2,3575</text><text x="1101.3" y="757.6" font-size="14.0" fill="#f0f0f0" textLength="52.9" lengthAdjust="spacingAndGlyphs" stroke="#f0f0f0" stroke-width="0.12">2,9328</text><text x="1173.7" y="757.6" font-size="14.0" fill="#f0f0f0" textLength="52.9" lengthAdjust="spacingAndGlyphs" stroke="#f0f0f0" stroke-width="0.12">2,8757</text><text x="1246.5" y="757.6" font-size="14.0" fill="#f0f0f0" textLength="52.9" lengthAdjust="spacingAndGlyphs" stroke="#f0f0f0" stroke-width="0.12">0,8407</text><text x="1343.5" y="757.6" font-size="14.0" fill="#f0f0f0" textLength="52.9" lengthAdjust="spacingAndGlyphs" stroke="#f0f0f0" stroke-width="0.12">3,1326</text><text x="1447.8" y="757.6" font-size="14.0" fill="#f0f0f0" textLength="52.9" lengthAdjust="spacingAndGlyphs" stroke="#f0f0f0" stroke-width="0.12">8,2033</text><text x="1529.6" y="757.6" font-size="14.0" fill="#f0f0f0" textLength="52.9" lengthAdjust="spacingAndGlyphs" stroke="#f0f0f0" stroke-width="0.12">4,3712</text><text x="490.6" y="581.9" font-size="13.2" fill="#f0f0f0" text-anchor="middle" textLength="45.2" lengthAdjust="spacingAndGlyphs" stroke="#f0f0f0" stroke-width="0.12">White</text><text x="573.1" y="581.9" font-size="13.2" fill="#f0f0f0" text-anchor="middle" textLength="56.7" lengthAdjust="spacingAndGlyphs" stroke="#f0f0f0" stroke-width="0.12">Gray 80</text><text x="655.4" y="581.9" font-size="13.2" fill="#f0f0f0" text-anchor="middle" textLength="56.7" lengthAdjust="spacingAndGlyphs" stroke="#f0f0f0" stroke-width="0.12">Gray 65</text><text x="738.4" y="581.9" font-size="13.2" fill="#f0f0f0" text-anchor="middle" textLength="56.7" lengthAdjust="spacingAndGlyphs" stroke="#f0f0f0" stroke-width="0.12">Gray 50</text><text x="820.6" y="581.9" font-size="13.2" fill="#f0f0f0" text-anchor="middle" textLength="56.7" lengthAdjust="spacingAndGlyphs" stroke="#f0f0f0" stroke-width="0.12">Gray 35</text><text x="898.7" y="581.9" font-size="13.2" fill="#f0f0f0" text-anchor="middle" textLength="37.8" lengthAdjust="spacingAndGlyphs" stroke="#f0f0f0" stroke-width="0.12">Black</text><text x="973.8" y="581.9" font-size="13.2" fill="#f0f0f0" text-anchor="middle" textLength="68.4" lengthAdjust="spacingAndGlyphs" stroke="#f0f0f0" stroke-width="0.12">Dark Skin</text><text x="1055.0" y="581.9" font-size="13.2" fill="#f0f0f0" text-anchor="middle" textLength="69.6" lengthAdjust="spacingAndGlyphs" stroke="#f0f0f0" stroke-width="0.12">Light Skin</text><text x="1132.8" y="581.9" font-size="13.2" fill="#f0f0f0" text-anchor="middle" textLength="61.5" lengthAdjust="spacingAndGlyphs" stroke="#f0f0f0" stroke-width="0.12">Blue Sky</text><text x="1205.4" y="581.9" font-size="13.2" fill="#f0f0f0" text-anchor="middle" textLength="51.2" lengthAdjust="spacingAndGlyphs" stroke="#f0f0f0" stroke-width="0.12">Foliage</text><text x="1290.3" y="581.9" font-size="13.2" fill="#f0f0f0" text-anchor="middle" textLength="86.0" lengthAdjust="spacingAndGlyphs" stroke="#f0f0f0" stroke-width="0.12">Blue Flower</text><text x="1391.0" y="581.9" font-size="13.2" fill="#f0f0f0" text-anchor="middle" textLength="93.3" lengthAdjust="spacingAndGlyphs" stroke="#f0f0f0" stroke-width="0.12">Bluish Green</text><text x="1483.8" y="581.9" font-size="13.2" fill="#f0f0f0" text-anchor="middle" textLength="53.2" lengthAdjust="spacingAndGlyphs" stroke="#f0f0f0" stroke-width="0.12">Orange</text><text x="1556.5" y="581.9" font-size="13.2" fill="#f0f0f0" text-anchor="middle" textLength="51.0" lengthAdjust="spacingAndGlyphs" stroke="#f0f0f0" stroke-width="0.12">Purple</text><rect x="296.50" y="564.00" width="2.20" height="213.00" fill="#050505" /><rect x="298.50" y="763.20" width="1259.00" height="13.50" fill="#5e5e5e" /><rect x="314" y="764.8" width="372" height="10.5" rx="5.2" fill="#3c3c3c"/><rect x="300" y="764.5" width="15" height="11" rx="2" fill="#707070"/><path d="M304 770l4.5-4v8z" fill="#3a3a3a"/><rect x="1543" y="764.5" width="14" height="11" rx="2" fill="#707070"/><path d="M1553 770l-4.5-4v8z" fill="#3a3a3a"/><rect x="0.00" y="799.00" width="1557.00" height="58.00" fill="#2a2a2a" /><path d="M-8.2 849.5V805a4 4 0 0 1 4-4h42a4 4 0 0 1 4 4V849.5z" fill="url(#gTile)"/><rect x="-3.0" y="806" width="40" height="24.0" rx="3.5" fill="#0a87a8" stroke="#08657e" stroke-width=".8"/><text x="16.8" y="844.6" font-size="10.8" fill="#2b2b2b" text-anchor="middle" textLength="23.6" lengthAdjust="spacingAndGlyphs" stroke="#2b2b2b" stroke-width=".4">Cyan</text><path d="M43.8 849.5V805a4 4 0 0 1 4-4h42a4 4 0 0 1 4 4V849.5z" fill="url(#gTile)"/><rect x="49.0" y="806" width="40" height="24.0" rx="3.5" fill="#ff0000" stroke="#bf0000" stroke-width=".8"/><text x="68.8" y="844.6" font-size="10.8" fill="#2b2b2b" text-anchor="middle" textLength="47.9" lengthAdjust="spacingAndGlyphs" stroke="#2b2b2b" stroke-width=".4">100% Red</text><path d="M95.8 849.5V805a4 4 0 0 1 4-4h42a4 4 0 0 1 4 4V849.5z" fill="url(#gTile)"/><rect x="101.0" y="806" width="40" height="12.4" rx="3.5" fill="#00ff00" stroke="#00bf00" stroke-width=".8"/><text x="106.3" y="833.0" font-size="10.8" fill="#2b2b2b" textLength="26.3" lengthAdjust="spacingAndGlyphs" stroke="#2b2b2b" stroke-width=".4">100%</text><text x="106.3" y="844.6" font-size="10.8" fill="#2b2b2b" textLength="29.1" lengthAdjust="spacingAndGlyphs" stroke="#2b2b2b" stroke-width=".4">Green</text><path d="M147.8 849.5V805a4 4 0 0 1 4-4h42a4 4 0 0 1 4 4V849.5z" fill="url(#gTile)"/><rect x="153.0" y="806" width="40" height="12.4" rx="3.5" fill="#0000e6" stroke="#0000ac" stroke-width=".8"/><text x="159.7" y="833.0" font-size="10.8" fill="#2b2b2b" textLength="26.3" lengthAdjust="spacingAndGlyphs" stroke="#2b2b2b" stroke-width=".4">100%</text><text x="159.7" y="844.6" font-size="10.8" fill="#2b2b2b" textLength="21.6" lengthAdjust="spacingAndGlyphs" stroke="#2b2b2b" stroke-width=".4">Blue</text><path d="M199.9 849.5V805a4 4 0 0 1 4-4h42a4 4 0 0 1 4 4V849.5z" fill="url(#gTile)"/><rect x="205.1" y="806" width="40" height="12.4" rx="3.5" fill="#00ffff" stroke="#00bfbf" stroke-width=".8"/><text x="211.7" y="833.0" font-size="10.8" fill="#2b2b2b" textLength="26.3" lengthAdjust="spacingAndGlyphs" stroke="#2b2b2b" stroke-width=".4">100%</text><text x="211.7" y="844.6" font-size="10.8" fill="#2b2b2b" textLength="23.3" lengthAdjust="spacingAndGlyphs" stroke="#2b2b2b" stroke-width=".4">Cyan</text><path d="M251.9 849.5V805a4 4 0 0 1 4-4h42a4 4 0 0 1 4 4V849.5z" fill="url(#gTile)"/><rect x="257.1" y="806" width="40" height="12.4" rx="3.5" fill="#ff00ff" stroke="#bf00bf" stroke-width=".8"/><text x="255.2" y="833.0" font-size="10.8" fill="#2b2b2b" textLength="26.3" lengthAdjust="spacingAndGlyphs" stroke="#2b2b2b" stroke-width=".4">100%</text><text x="255.2" y="844.6" font-size="10.8" fill="#2b2b2b" textLength="43.4" lengthAdjust="spacingAndGlyphs" stroke="#2b2b2b" stroke-width=".4">Magenta</text><path d="M303.9 849.5V805a4 4 0 0 1 4-4h42a4 4 0 0 1 4 4V849.5z" fill="url(#gTile)"/><rect x="309.1" y="806" width="40" height="12.4" rx="3.5" fill="#ffff00" stroke="#bfbf00" stroke-width=".8"/><text x="313.1" y="833.0" font-size="10.8" fill="#2b2b2b" textLength="26.3" lengthAdjust="spacingAndGlyphs" stroke="#2b2b2b" stroke-width=".4">100%</text><text x="313.1" y="844.6" font-size="10.8" fill="#2b2b2b" textLength="31.7" lengthAdjust="spacingAndGlyphs" stroke="#2b2b2b" stroke-width=".4">Yellow</text><path d="M355.9 849.5V805a4 4 0 0 1 4-4h42a4 4 0 0 1 4 4V849.5z" fill="url(#gTile)"/><rect x="361.1" y="806" width="40" height="24.0" rx="3.5" fill="#754324" stroke="#58321b" stroke-width=".8"/><text x="380.9" y="844.6" font-size="10.8" fill="#2b2b2b" text-anchor="middle" textLength="11.3" lengthAdjust="spacingAndGlyphs" stroke="#2b2b2b" stroke-width=".4">2E</text><path d="M407.9 849.5V805a4 4 0 0 1 4-4h42a4 4 0 0 1 4 4V849.5z" fill="url(#gTile)"/><rect x="413.1" y="806" width="40" height="24.0" rx="3.5" fill="#d08a65" stroke="#9c684c" stroke-width=".8"/><text x="432.9" y="844.6" font-size="10.8" fill="#2b2b2b" text-anchor="middle" textLength="11.3" lengthAdjust="spacingAndGlyphs" stroke="#2b2b2b" stroke-width=".4">2F</text><path d="M460.0 849.5V805a4 4 0 0 1 4-4h42a4 4 0 0 1 4 4V849.5z" fill="url(#gTile)"/><rect x="465.2" y="806" width="40" height="24.0" rx="3.5" fill="#fec08f" stroke="#be906b" stroke-width=".8"/><text x="485.0" y="844.6" font-size="10.8" fill="#2b2b2b" text-anchor="middle" textLength="11.3" lengthAdjust="spacingAndGlyphs" stroke="#2b2b2b" stroke-width=".4">2K</text><path d="M512.0 849.5V805a4 4 0 0 1 4-4h42a4 4 0 0 1 4 4V849.5z" fill="url(#gTile)"/><rect x="517.2" y="806" width="40" height="24.0" rx="3.5" fill="#fdc5a6" stroke="#be947c" stroke-width=".8"/><text x="537.0" y="844.6" font-size="10.8" fill="#2b2b2b" text-anchor="middle" textLength="11.3" lengthAdjust="spacingAndGlyphs" stroke="#2b2b2b" stroke-width=".4">5D</text><path d="M564.0 849.5V805a4 4 0 0 1 4-4h42a4 4 0 0 1 4 4V849.5z" fill="url(#gTile)"/><rect x="569.2" y="806" width="40" height="24.0" rx="3.5" fill="#f8a87b" stroke="#ba7e5c" stroke-width=".8"/><text x="589.0" y="844.6" font-size="10.8" fill="#2b2b2b" text-anchor="middle" textLength="11.3" lengthAdjust="spacingAndGlyphs" stroke="#2b2b2b" stroke-width=".4">7E</text><path d="M616.0 849.5V805a4 4 0 0 1 4-4h42a4 4 0 0 1 4 4V849.5z" fill="url(#gTile)"/><rect x="621.2" y="806" width="40" height="24.0" rx="3.5" fill="#d0905a" stroke="#9c6c44" stroke-width=".8"/><text x="641.0" y="844.6" font-size="10.8" fill="#2b2b2b" text-anchor="middle" textLength="11.3" lengthAdjust="spacingAndGlyphs" stroke="#2b2b2b" stroke-width=".4">7F</text><path d="M668.0 849.5V805a4 4 0 0 1 4-4h42a4 4 0 0 1 4 4V849.5z" fill="url(#gTile)"/><rect x="673.2" y="806" width="40" height="24.0" rx="3.5" fill="#8f5a30" stroke="#6b4424" stroke-width=".8"/><text x="693.0" y="844.6" font-size="10.8" fill="#2b2b2b" text-anchor="middle" textLength="11.3" lengthAdjust="spacingAndGlyphs" stroke="#2b2b2b" stroke-width=".4">7G</text><path d="M720.1 849.5V805a4 4 0 0 1 4-4h42a4 4 0 0 1 4 4V849.5z" fill="url(#gTile)"/><rect x="725.3" y="806" width="40" height="24.0" rx="3.5" fill="#d89a70" stroke="#a27454" stroke-width=".8"/><text x="745.1" y="844.6" font-size="10.8" fill="#2b2b2b" text-anchor="middle" textLength="11.3" lengthAdjust="spacingAndGlyphs" stroke="#2b2b2b" stroke-width=".4">7H</text><path d="M772.1 849.5V805a4 4 0 0 1 4-4h42a4 4 0 0 1 4 4V849.5z" fill="url(#gTile)"/><rect x="777.3" y="806" width="40" height="24.0" rx="3.5" fill="#a8561f" stroke="#7e4017" stroke-width=".8"/><text x="797.1" y="844.6" font-size="10.8" fill="#2b2b2b" text-anchor="middle" textLength="11.3" lengthAdjust="spacingAndGlyphs" stroke="#2b2b2b" stroke-width=".4">7I</text><path d="M824.1 849.5V805a4 4 0 0 1 4-4h42a4 4 0 0 1 4 4V849.5z" fill="url(#gTile)"/><rect x="829.3" y="806" width="40" height="24.0" rx="3.5" fill="#dd8a5c" stroke="#a66845" stroke-width=".8"/><text x="849.1" y="844.6" font-size="10.8" fill="#2b2b2b" text-anchor="middle" textLength="11.3" lengthAdjust="spacingAndGlyphs" stroke="#2b2b2b" stroke-width=".4">7J</text><path d="M876.1 849.5V805a4 4 0 0 1 4-4h42a4 4 0 0 1 4 4V849.5z" fill="url(#gTile)"/><rect x="881.3" y="806" width="40" height="24.0" rx="3.5" fill="#d08a6a" stroke="#9c6850" stroke-width=".8"/><text x="901.1" y="844.6" font-size="10.8" fill="#2b2b2b" text-anchor="middle" textLength="11.3" lengthAdjust="spacingAndGlyphs" stroke="#2b2b2b" stroke-width=".4">8D</text><path d="M928.1 849.5V805a4 4 0 0 1 4-4h42a4 4 0 0 1 4 4V849.5z" fill="url(#gTile)"/><rect x="933.3" y="806" width="40" height="24.0" rx="3.5" fill="#fe9570" stroke="#be7054" stroke-width=".8"/><text x="953.1" y="844.6" font-size="10.8" fill="#2b2b2b" text-anchor="middle" textLength="11.3" lengthAdjust="spacingAndGlyphs" stroke="#2b2b2b" stroke-width=".4">8E</text><path d="M980.2 849.5V805a4 4 0 0 1 4-4h42a4 4 0 0 1 4 4V849.5z" fill="url(#gTile)"/><rect x="985.4" y="806" width="40" height="24.0" rx="3.5" fill="#d09070" stroke="#9c6c54" stroke-width=".8"/><text x="1005.2" y="844.6" font-size="10.8" fill="#2b2b2b" text-anchor="middle" textLength="11.3" lengthAdjust="spacingAndGlyphs" stroke="#2b2b2b" stroke-width=".4">8F</text><path d="M1032.2 849.5V805a4 4 0 0 1 4-4h42a4 4 0 0 1 4 4V849.5z" fill="url(#gTile)"/><rect x="1037.4" y="806" width="40" height="24.0" rx="3.5" fill="#d08e6a" stroke="#9c6a50" stroke-width=".8"/><text x="1057.2" y="844.6" font-size="10.8" fill="#2b2b2b" text-anchor="middle" textLength="11.3" lengthAdjust="spacingAndGlyphs" stroke="#2b2b2b" stroke-width=".4">8G</text><path d="M1084.2 849.5V805a4 4 0 0 1 4-4h42a4 4 0 0 1 4 4V849.5z" fill="url(#gTile)"/><rect x="1089.4" y="806" width="40" height="24.0" rx="3.5" fill="#d9936b" stroke="#a36e50" stroke-width=".8"/><text x="1109.2" y="844.6" font-size="10.8" fill="#2b2b2b" text-anchor="middle" textLength="11.3" lengthAdjust="spacingAndGlyphs" stroke="#2b2b2b" stroke-width=".4">8H</text><path d="M1136.2 849.5V805a4 4 0 0 1 4-4h42a4 4 0 0 1 4 4V849.5z" fill="url(#gTile)"/><rect x="1141.4" y="806" width="40" height="24.0" rx="3.5" fill="#7f4c27" stroke="#5f391d" stroke-width=".8"/><text x="1161.2" y="844.6" font-size="10.8" fill="#2b2b2b" text-anchor="middle" textLength="11.3" lengthAdjust="spacingAndGlyphs" stroke="#2b2b2b" stroke-width=".4">8I</text><path d="M1188.2 849.5V804a3.5 3.5 0 0 1 3.5-3.5h43a3.5 3.5 0 0 1 3.5 3.5V849.5z" fill="#252525"/><rect x="1193.4" y="806" width="40" height="24.0" rx="3.5" fill="#dc8c5e" stroke="#a56946" stroke-width=".8"/><text x="1213.2" y="844.6" font-size="10.8" fill="#ffffff" text-anchor="middle" font-weight="bold" textLength="11.3" lengthAdjust="spacingAndGlyphs" stroke="#ffffff" stroke-width=".4">8J</text><g fill="#262626"><path d="M38.3 849.5l3-3v-44h1v44l3 3z"/><path d="M90.3 849.5l3-3v-44h1v44l3 3z"/><path d="M142.3 849.5l3-3v-44h1v44l3 3z"/><path d="M194.4 849.5l3-3v-44h1v44l3 3z"/><path d="M246.4 849.5l3-3v-44h1v44l3 3z"/><path d="M298.4 849.5l3-3v-44h1v44l3 3z"/><path d="M350.4 849.5l3-3v-44h1v44l3 3z"/><path d="M402.4 849.5l3-3v-44h1v44l3 3z"/><path d="M454.5 849.5l3-3v-44h1v44l3 3z"/><path d="M506.5 849.5l3-3v-44h1v44l3 3z"/><path d="M558.5 849.5l3-3v-44h1v44l3 3z"/><path d="M610.5 849.5l3-3v-44h1v44l3 3z"/><path d="M662.5 849.5l3-3v-44h1v44l3 3z"/><path d="M714.6 849.5l3-3v-44h1v44l3 3z"/><path d="M766.6 849.5l3-3v-44h1v44l3 3z"/><path d="M818.6 849.5l3-3v-44h1v44l3 3z"/><path d="M870.6 849.5l3-3v-44h1v44l3 3z"/><path d="M922.6 849.5l3-3v-44h1v44l3 3z"/><path d="M974.7 849.5l3-3v-44h1v44l3 3z"/><path d="M1026.7 849.5l3-3v-44h1v44l3 3z"/><path d="M1078.7 849.5l3-3v-44h1v44l3 3z"/><path d="M1130.7 849.5l3-3v-44h1v44l3 3z"/><path d="M1182.7 849.5l3-3v-44h1v44l3 3z"/></g><rect x="0.00" y="849.50" width="1238.00" height="7.50" fill="#686868" /><rect x="608" y="850.5" width="615" height="9" rx="4" fill="#4a4a4a"/><path d="M0 853l5-3v6z" fill="#333"/><rect x="1225" y="850" width="13" height="7" rx="1.5" fill="#7a7a7a"/><path d="M1239.3 818.8V804a3 3 0 0 1 3-3h41.5a3 3 0 0 1 3 3V818.8z" fill="url(#gBtn)"/><circle cx="1263.3" cy="809.5" r="7" fill="url(#gKnob)"/><path d="M1258.5 812h9.5l-4.75-5z" fill="#2a2a2a"/><rect x="1239.3" y="819.8" width="47.5" height="37.2" fill="url(#gBtn)"/><rect x="1247.5" y="825.6" width="30.5" height="30" rx="4" fill="#a8a8a8" stroke="#262626" stroke-width="2.8"/><rect x="1256.2" y="834.3" width="13.3" height="13.1" fill="#000"/><rect x="1287.9" y="801" width="46.6" height="30" fill="url(#gBtn)"/><circle cx="1311.2" cy="816" r="9.8" fill="url(#gKnob)"/><rect x="1307.20" y="812.00" width="8.00" height="8.00" fill="#2a2a2a" /><line x1="1334.90" y1="801.00" x2="1334.90" y2="831.00" stroke="#2e2e2e" stroke-width="1.00" /><rect x="1335.3" y="801" width="44.0" height="30" fill="url(#gBtn)"/><circle cx="1357.3" cy="816" r="9.8" fill="url(#gKnob)"/><path d="M1353.8 811v10l8.5-5z" fill="#2a2a2a"/><line x1="1379.70" y1="801.00" x2="1379.70" y2="831.00" stroke="#2e2e2e" stroke-width="1.00" /><rect x="1380.0" y="801" width="44.3" height="30" fill="url(#gBtn)"/><circle cx="1402.2" cy="816" r="9.8" fill="url(#gKnob)"/><path d="M1399.2 811h-2v10h2M1405.2 811h2v10h-2" fill="none" stroke="#2a2a2a" stroke-width="1.8"/><rect x="1400.0" y="815" width="1.6" height="1.8" fill="#2a2a2a"/><rect x="1402.8" y="815" width="1.6" height="1.8" fill="#2a2a2a"/><line x1="1424.70" y1="801.00" x2="1424.70" y2="831.00" stroke="#2e2e2e" stroke-width="1.00" /><rect x="1425.0" y="801" width="44.3" height="30" fill="url(#gBtn)"/><circle cx="1447.2" cy="816" r="9.8" fill="url(#gKnob)"/><path d="M1447.2 816c-2.5-3-6.5-3-6.5 0s4 3 6.5 0s6.5-3 6.5 0s-4 3-6.5 0z" fill="none" stroke="#2a2a2a" stroke-width="1.8"/><line x1="1469.70" y1="801.00" x2="1469.70" y2="831.00" stroke="#2e2e2e" stroke-width="1.00" /><rect x="1470.0" y="801" width="44.3" height="30" fill="url(#gBtnD)"/><circle cx="1492.2" cy="816" r="9.8" fill="url(#gKnobD)"/><path d="M1487.6 814.5a5 5 0 0 1 9 -1.2M1496.8 817.5a5 5 0 0 1 -9 1.2" fill="none" stroke="#1c1c1c" stroke-width="2"/><path d="M1497.4 810.2l1.5 4.6l-4.6 -0.6zM1487.0 821.8l-1.5 -4.6l4.6 0.6z" fill="#1c1c1c"/><line x1="1514.70" y1="801.00" x2="1514.70" y2="831.00" stroke="#2e2e2e" stroke-width="1.00" /><rect x="1515.3" y="801" width="41.7" height="30" fill="url(#gBtn)"/><circle cx="1538.0" cy="816" r="9.8" fill="url(#gKnob)"/><line x1="1557.40" y1="801.00" x2="1557.40" y2="831.00" stroke="#2e2e2e" stroke-width="1.00" /><rect x="1287.90" y="831.00" width="1269.10" height="1.20" fill="#2e2e2e" /><rect x="1287.9" y="832.2" width="136.4" height="24.8" fill="url(#gBtn)"/><rect x="1425.2" y="832.2" width="131.8" height="24.8" fill="url(#gBtn)"/><line x1="1424.80" y1="832.00" x2="1424.80" y2="857.00" stroke="#2e2e2e" stroke-width="1.20" /><circle cx="1319" cy="847" r="9.5" fill="url(#gKnob)"/><path d="M1320.5 842l-4 5l4 5M1324.5 842l-4 5l4 5" fill="none" stroke="#2a2a2a" stroke-width="1.6"/><circle cx="1531.8" cy="846.7" r="9.5" fill="url(#gKnob)"/><path d="M1529 842l4 5l-4 5M1533 842l4 5l-4 5" fill="none" stroke="#2a2a2a" stroke-width="1.6"/><text x="1346.3" y="854.5" font-size="22.5" fill="#2a2a2a" textLength="49.5" lengthAdjust="spacingAndGlyphs" stroke="#2a2a2a" stroke-width="0.50">Back</text><text x="1452.8" y="854.7" font-size="22.5" fill="#2a2a2a" textLength="51.0" lengthAdjust="spacingAndGlyphs" stroke="#2a2a2a" stroke-width="0.50">Next</text></svg></body></html>
